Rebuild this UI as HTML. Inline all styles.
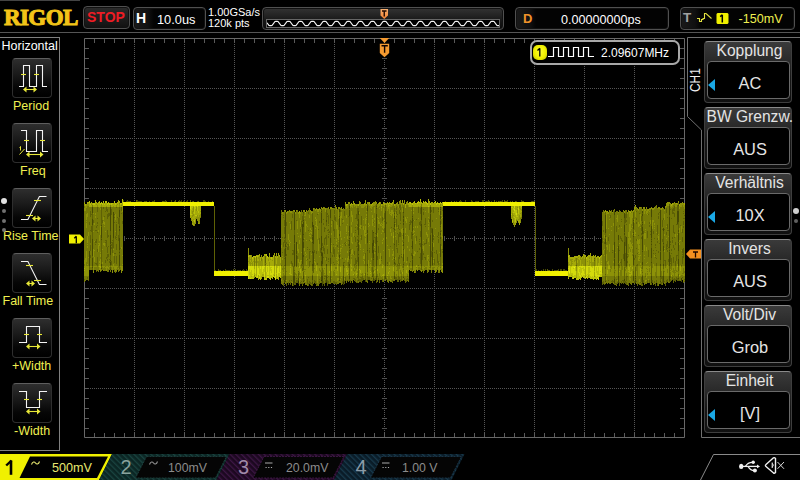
<!DOCTYPE html>
<html><head><meta charset="utf-8">
<style>
*{margin:0;padding:0;box-sizing:border-box}
html,body{width:800px;height:480px;overflow:hidden;background:#000}
body{position:relative;font-family:"Liberation Sans",sans-serif;color:#fff}
.a{position:absolute}
.t{position:absolute;white-space:nowrap;line-height:1}
.box{position:absolute;border:1px solid #505050;border-radius:4px;background:linear-gradient(#1c1c1c,#050505);box-shadow:inset 0 0 0 1px #111}
.btn{position:absolute;left:12px;width:40px;height:40px;border-radius:4px;border:1px solid #2e2e2e;border-top-color:#5e5e5e;background:linear-gradient(#2e2e2e 0%,#1a1a1a 40%,#060606 75%,#000 100%)}
.lbl{position:absolute;color:#f0f050;font-size:12.5px;line-height:1;white-space:nowrap;text-align:center}
.mb{position:absolute;left:704px;width:88px;height:62px;border-radius:4px;border:1px solid #3e3e3e;border-top-color:#8a8a8a;background:linear-gradient(#3a3a3a 0%,#2a2a2a 30%,#161616 60%,#101010 100%)}
.mh{position:absolute;left:1.5px;top:1px;width:86px;text-align:center;font-size:15.6px;line-height:1;color:#e4e4e4;white-space:nowrap}
.mi{position:absolute;left:2px;top:19px;width:83px;height:38px;border-radius:4px;border:1px solid #6a6a6a;background:#000}
.mv{position:absolute;left:1.5px;top:13.3px;width:81px;text-align:center;font-size:16.4px;line-height:1;color:#e4e4e4;white-space:nowrap}
.tri{position:absolute;left:0px;top:16.5px;width:0;height:0;border-top:6px solid transparent;border-bottom:6px solid transparent;border-right:7px solid #1aa8e6}
</style></head><body>

<!-- top bar -->
<div class="a" style="left:0;top:0;width:80px;height:1px;background:#444"></div>
<div class="t" style="left:4px;top:6px;font-family:'Liberation Serif',serif;font-weight:bold;font-size:23px;color:#f2c418;-webkit-text-stroke:1px #f2c418;letter-spacing:-0.6px">RIGOL</div>

<div class="box" style="left:83px;top:6px;width:47px;height:23px;background:linear-gradient(#2c2c2c,#111)"></div>
<div class="t" style="left:87px;top:10px;font-size:14px;font-weight:bold;color:#ee1c24">STOP</div>

<div class="box" style="left:133px;top:7px;width:73px;height:23px;background:linear-gradient(90deg,#1a1a1a 0,#101010 14px,#030303 20px,#030303)"></div>
<div class="t" style="left:136px;top:11px;font-size:14px;font-weight:bold;color:#fff">H</div>
<div class="t" style="left:157px;top:13.5px;font-size:12.8px;color:#fff">10.0us</div>

<div class="t" style="left:208px;top:7px;font-size:11px;color:#fff">1.00GSa/s</div>
<div class="t" style="left:208px;top:18px;font-size:11px;color:#fff">120k pts</div>

<div class="box" style="left:262px;top:7px;width:242px;height:23px;background:linear-gradient(#333,#1a1a1a 55%,#0a0a0a)"></div>
<div class="a" style="left:266px;top:19px;width:234px;height:9px;border:1px solid #666;background:#000"></div>
<svg class="a" style="left:267px;top:20px" width="232" height="7"><polyline points="0,2.77 1,4.23 2,5.50 3,5.60 4,5.60 5,5.50 6,4.23 7,2.77 8,1.50 9,1.40 10,1.40 11,1.50 12,2.77 13,4.23 14,5.50 15,5.60 16,5.60 17,5.50 18,4.23 19,2.77 20,1.50 21,1.40 22,1.40 23,1.50 24,2.77 25,4.23 26,5.50 27,5.60 28,5.60 29,5.50 30,4.23 31,2.77 32,1.50 33,1.40 34,1.40 35,1.50 36,2.77 37,4.23 38,5.50 39,5.60 40,5.60 41,5.50 42,4.23 43,2.77 44,1.50 45,1.40 46,1.40 47,1.50 48,2.77 49,4.23 50,5.50 51,5.60 52,5.60 53,5.50 54,4.23 55,2.77 56,1.50 57,1.40 58,1.40 59,1.50 60,2.77 61,4.23 62,5.50 63,5.60 64,5.60 65,5.50 66,4.23 67,2.77 68,1.50 69,1.40 70,1.40 71,1.50 72,2.77 73,4.23 74,5.50 75,5.60 76,5.60 77,5.50 78,4.23 79,2.77 80,1.50 81,1.40 82,1.40 83,1.50 84,2.77 85,4.23 86,5.50 87,5.60 88,5.60 89,5.50 90,4.23 91,2.77 92,1.50 93,1.40 94,1.40 95,1.50 96,2.77 97,4.23 98,5.50 99,5.60 100,5.60 101,5.50 102,4.23 103,2.77 104,1.50 105,1.40 106,1.40 107,1.50 108,2.77 109,4.23 110,5.50 111,5.60 112,5.60 113,5.50 114,4.23 115,2.77 116,1.50 117,1.40 118,1.40 119,1.50 120,2.77 121,4.23 122,5.50 123,5.60 124,5.60 125,5.50 126,4.23 127,2.77 128,1.50 129,1.40 130,1.40 131,1.50 132,2.77 133,4.23 134,5.50 135,5.60 136,5.60 137,5.50 138,4.23 139,2.77 140,1.50 141,1.40 142,1.40 143,1.50 144,2.77 145,4.23 146,5.50 147,5.60 148,5.60 149,5.50 150,4.23 151,2.77 152,1.50 153,1.40 154,1.40 155,1.50 156,2.77 157,4.23 158,5.50 159,5.60 160,5.60 161,5.50 162,4.23 163,2.77 164,1.50 165,1.40 166,1.40 167,1.50 168,2.77 169,4.23 170,5.50 171,5.60 172,5.60 173,5.50 174,4.23 175,2.77 176,1.50 177,1.40 178,1.40 179,1.50 180,2.77 181,4.23 182,5.50 183,5.60 184,5.60 185,5.50 186,4.23 187,2.77 188,1.50 189,1.40 190,1.40 191,1.50 192,2.77 193,4.23 194,5.50 195,5.60 196,5.60 197,5.50 198,4.23 199,2.77 200,1.50 201,1.40 202,1.40 203,1.50 204,2.77 205,4.23 206,5.50 207,5.60 208,5.60 209,5.50 210,4.23 211,2.77 212,1.50 213,1.40 214,1.40 215,1.50 216,2.77 217,4.23 218,5.50 219,5.60 220,5.60 221,5.50 222,4.23 223,2.77 224,1.50 225,1.40 226,1.40 227,1.50 228,2.77 229,4.23 230,5.50 231,5.60 232,5.60" fill="none" stroke="#f4f4f4" stroke-width="1.2"/></svg>
<svg class="a" style="left:380px;top:8px" width="9" height="12"><defs><linearGradient id="tg" x1="0" y1="0" x2="0" y2="1"><stop offset="0" stop-color="#f8b070"/><stop offset="1" stop-color="#f08030"/></linearGradient></defs><path d="M0.5,1 H8 V7.5 L4.25,11 L0.5,7.5 Z" fill="url(#tg)"/><path d="M2,3 H6.5 M4.25,3 V8.5" stroke="#200800" stroke-width="1.4"/></svg>

<div class="box" style="left:515px;top:7px;width:154px;height:23px;background:linear-gradient(90deg,#1a1a1a 0,#101010 14px,#030303 20px,#030303)"></div>
<div class="t" style="left:523px;top:11.5px;font-size:13px;font-weight:bold;color:#f0922a">D</div>
<div class="t" style="left:561px;top:13.5px;font-size:12.6px;color:#fff">0.00000000ps</div>

<div class="box" style="left:680px;top:7px;width:115px;height:23px;background:linear-gradient(90deg,#1a1a1a 0,#101010 14px,#030303 20px,#030303)"></div>
<div class="t" style="left:683px;top:11px;font-size:13.5px;font-weight:bold;color:#a0a0a0">T</div>
<svg class="a" style="left:690px;top:8px" width="40" height="20"><path d="M7,10.5 H9.5 V13.5 H11.5 V11.5 H13 V10.5 H14.5 V5.5 H16 L21.5,10.5" fill="none" stroke="#e0e040" stroke-width="1.1"/><path d="M27.5,5 H37.5 L38.5,6 V15 L37.5,16 H27.5 L26.5,15 V6 Z" fill="#f0f000"/><path d="M32.3,6.8 V14.5 M30.2,8.6 L32.3,6.8" stroke="#000" stroke-width="1.5" fill="none"/></svg>
<div class="t" style="left:738.5px;top:13px;font-size:12.6px;color:#f0f050">-150mV</div>

<div class="a" style="left:0;top:32px;width:800px;height:1px;background:#555"></div>

<!-- left panel -->
<div class="a" style="left:0;top:37px;width:60px;height:414px;border:1px solid #808080;border-left:none"></div>
<div class="t" style="left:1.5px;top:40px;font-size:12.5px;color:#fff">Horizontal</div>

<div class="btn" style="top:58px"></div>
<svg class="a" style="left:0;top:58px" width="60" height="40"><path d="M19,28.5 H23.5 V7.5 H29.5 V28.5 H36.5 V7.5 H42.5 V28.5 H47" stroke="#f4f4f4" stroke-width="1.1" fill="none"/><path d="M21,16.5 H26" stroke="#e8e838" stroke-width="1.1" fill="none"/><path d="M34,16.5 H39" stroke="#e8e838" stroke-width="1.1" fill="none"/><path d="M25.5,31.5 H34.5" stroke="#e8e838" stroke-width="1.1" fill="none"/><path d="M23.0,31.5 L26.5,28.5 V34.5 Z M37.0,31.5 L33.5,28.5 V34.5 Z" fill="#e8e838"/></svg>
<div class="lbl" style="left:13px;top:99.7px">Period</div>
<div class="btn" style="top:123px"></div>
<svg class="a" style="left:0;top:123px" width="60" height="40"><path d="M21,7.5 H26.5 V28.5 H36.5 V7.5 H42.5 V28.5 H48" stroke="#f4f4f4" stroke-width="1.1" fill="none"/><path d="M24,17.5 H29" stroke="#e8e838" stroke-width="1.1" fill="none"/><path d="M40,17.5 H45" stroke="#e8e838" stroke-width="1.1" fill="none"/><path d="M28.5,31.5 H41" stroke="#e8e838" stroke-width="1.1" fill="none"/><path d="M26.0,31.5 L29.5,28.5 V34.5 Z M43.5,31.5 L40,28.5 V34.5 Z" fill="#e8e838"/><path d="M19.5,31.5 L24.5,26" stroke="#e8e838" stroke-width="1"/><path d="M19.5,24.5 L20.5,23.5 V27.5" stroke="#e8e838" stroke-width="1" fill="none"/></svg>
<div class="lbl" style="left:20px;top:164.7px">Freq</div>
<div class="btn" style="top:188px"></div>
<svg class="a" style="left:0;top:188px" width="60" height="40"><path d="M21,31.5 H27.9 L39.4,8.5 H46.5" stroke="#f4f4f4" stroke-width="1.1" fill="none"/><path d="M34,12.5 H41" stroke="#e8e838" stroke-width="1.1" fill="none"/><path d="M26,27.5 H33" stroke="#e8e838" stroke-width="1.1" fill="none"/><path d="M34.5,30.5 H38.5" stroke="#e8e838" stroke-width="1.1" fill="none"/><path d="M32.0,30.5 L35.5,27.5 V33.5 Z M41.0,30.5 L37.5,27.5 V33.5 Z" fill="#e8e838"/></svg>
<div class="lbl" style="left:3px;top:229.7px">Rise Time</div>
<div class="btn" style="top:253px"></div>
<svg class="a" style="left:0;top:253px" width="60" height="40"><path d="M21,8.5 H27.9 L39.4,31.5 H46.5" stroke="#f4f4f4" stroke-width="1.1" fill="none"/><path d="M26,12.5 H33" stroke="#e8e838" stroke-width="1.1" fill="none"/><path d="M34,27.5 H41" stroke="#e8e838" stroke-width="1.1" fill="none"/><path d="M28.5,30.5 H32.5" stroke="#e8e838" stroke-width="1.1" fill="none"/><path d="M26.0,30.5 L29.5,27.5 V33.5 Z M35.0,30.5 L31.5,27.5 V33.5 Z" fill="#e8e838"/></svg>
<div class="lbl" style="left:2.5px;top:294.7px">Fall Time</div>
<div class="btn" style="top:318px"></div>
<svg class="a" style="left:0;top:318px" width="60" height="40"><path d="M19,24.5 H26.5 V8.5 H39.5 V24.5 H47" stroke="#f4f4f4" stroke-width="1.1" fill="none"/><path d="M24,16.5 H29" stroke="#e8e838" stroke-width="1.1" fill="none"/><path d="M37,16.5 H42" stroke="#e8e838" stroke-width="1.1" fill="none"/><path d="M28.5,28.5 H38" stroke="#e8e838" stroke-width="1.1" fill="none"/><path d="M26.0,28.5 L29.5,25.5 V31.5 Z M40.5,28.5 L37,25.5 V31.5 Z" fill="#e8e838"/></svg>
<div class="lbl" style="left:12px;top:359.7px">+Width</div>
<div class="btn" style="top:383px"></div>
<svg class="a" style="left:0;top:383px" width="60" height="40"><path d="M19,8.5 H26.5 V24.5 H39.5 V8.5 H47" stroke="#f4f4f4" stroke-width="1.1" fill="none"/><path d="M24,16.5 H29" stroke="#e8e838" stroke-width="1.1" fill="none"/><path d="M37,16.5 H42" stroke="#e8e838" stroke-width="1.1" fill="none"/><path d="M28.5,28.5 H38" stroke="#e8e838" stroke-width="1.1" fill="none"/><path d="M26.0,28.5 L29.5,25.5 V31.5 Z M40.5,28.5 L37,25.5 V31.5 Z" fill="#e8e838"/></svg>
<div class="lbl" style="left:14px;top:424.7px">-Width</div>
<div class="a" style="left:1px;top:198px;width:6px;height:6px;border-radius:3px;background:#e0e0e0"></div>
<div class="a" style="left:2px;top:209px;width:4px;height:4px;border-radius:2px;background:#707070"></div>
<div class="a" style="left:2px;top:219px;width:4px;height:4px;border-radius:2px;background:#707070"></div>
<div class="a" style="left:2px;top:228px;width:4px;height:4px;border-radius:2px;background:#707070"></div>


<!-- grid -->
<svg class="a" style="left:0;top:0" width="800" height="480">
<path d="M134,40h1v1h-1zM134,42h1v1h-1zM134,44h1v1h-1zM134,46h1v1h-1zM134,48h1v1h-1zM134,50h1v1h-1zM134,52h1v1h-1zM134,54h1v1h-1zM134,56h1v1h-1zM134,58h1v1h-1zM134,60h1v1h-1zM134,62h1v1h-1zM134,64h1v1h-1zM134,66h1v1h-1zM134,68h1v1h-1zM134,70h1v1h-1zM134,72h1v1h-1zM134,74h1v1h-1zM134,76h1v1h-1zM134,78h1v1h-1zM134,80h1v1h-1zM134,82h1v1h-1zM134,84h1v1h-1zM134,86h1v1h-1zM134,88h1v1h-1zM134,90h1v1h-1zM134,92h1v1h-1zM134,94h1v1h-1zM134,96h1v1h-1zM134,98h1v1h-1zM134,100h1v1h-1zM134,102h1v1h-1zM134,104h1v1h-1zM134,106h1v1h-1zM134,108h1v1h-1zM134,110h1v1h-1zM134,112h1v1h-1zM134,114h1v1h-1zM134,116h1v1h-1zM134,118h1v1h-1zM134,120h1v1h-1zM134,122h1v1h-1zM134,124h1v1h-1zM134,126h1v1h-1zM134,128h1v1h-1zM134,130h1v1h-1zM134,132h1v1h-1zM134,134h1v1h-1zM134,136h1v1h-1zM134,138h1v1h-1zM134,140h1v1h-1zM134,142h1v1h-1zM134,144h1v1h-1zM134,146h1v1h-1zM134,148h1v1h-1zM134,150h1v1h-1zM134,152h1v1h-1zM134,154h1v1h-1zM134,156h1v1h-1zM134,158h1v1h-1zM134,160h1v1h-1zM134,162h1v1h-1zM134,164h1v1h-1zM134,166h1v1h-1zM134,168h1v1h-1zM134,170h1v1h-1zM134,172h1v1h-1zM134,174h1v1h-1zM134,176h1v1h-1zM134,178h1v1h-1zM134,180h1v1h-1zM134,182h1v1h-1zM134,184h1v1h-1zM134,186h1v1h-1zM134,188h1v1h-1zM134,190h1v1h-1zM134,192h1v1h-1zM134,194h1v1h-1zM134,196h1v1h-1zM134,198h1v1h-1zM134,200h1v1h-1zM134,202h1v1h-1zM134,204h1v1h-1zM134,206h1v1h-1zM134,208h1v1h-1zM134,210h1v1h-1zM134,212h1v1h-1zM134,214h1v1h-1zM134,216h1v1h-1zM134,218h1v1h-1zM134,220h1v1h-1zM134,222h1v1h-1zM134,224h1v1h-1zM134,226h1v1h-1zM134,228h1v1h-1zM134,230h1v1h-1zM134,232h1v1h-1zM134,234h1v1h-1zM134,236h1v1h-1zM134,238h1v1h-1zM134,240h1v1h-1zM134,242h1v1h-1zM134,244h1v1h-1zM134,246h1v1h-1zM134,248h1v1h-1zM134,250h1v1h-1zM134,252h1v1h-1zM134,254h1v1h-1zM134,256h1v1h-1zM134,258h1v1h-1zM134,260h1v1h-1zM134,262h1v1h-1zM134,264h1v1h-1zM134,266h1v1h-1zM134,268h1v1h-1zM134,270h1v1h-1zM134,272h1v1h-1zM134,274h1v1h-1zM134,276h1v1h-1zM134,278h1v1h-1zM134,280h1v1h-1zM134,282h1v1h-1zM134,284h1v1h-1zM134,286h1v1h-1zM134,288h1v1h-1zM134,290h1v1h-1zM134,292h1v1h-1zM134,294h1v1h-1zM134,296h1v1h-1zM134,298h1v1h-1zM134,300h1v1h-1zM134,302h1v1h-1zM134,304h1v1h-1zM134,306h1v1h-1zM134,308h1v1h-1zM134,310h1v1h-1zM134,312h1v1h-1zM134,314h1v1h-1zM134,316h1v1h-1zM134,318h1v1h-1zM134,320h1v1h-1zM134,322h1v1h-1zM134,324h1v1h-1zM134,326h1v1h-1zM134,328h1v1h-1zM134,330h1v1h-1zM134,332h1v1h-1zM134,334h1v1h-1zM134,336h1v1h-1zM134,338h1v1h-1zM134,340h1v1h-1zM134,342h1v1h-1zM134,344h1v1h-1zM134,346h1v1h-1zM134,348h1v1h-1zM134,350h1v1h-1zM134,352h1v1h-1zM134,354h1v1h-1zM134,356h1v1h-1zM134,358h1v1h-1zM134,360h1v1h-1zM134,362h1v1h-1zM134,364h1v1h-1zM134,366h1v1h-1zM134,368h1v1h-1zM134,370h1v1h-1zM134,372h1v1h-1zM134,374h1v1h-1zM134,376h1v1h-1zM134,378h1v1h-1zM134,380h1v1h-1zM134,382h1v1h-1zM134,384h1v1h-1zM134,386h1v1h-1zM134,388h1v1h-1zM134,390h1v1h-1zM134,392h1v1h-1zM134,394h1v1h-1zM134,396h1v1h-1zM134,398h1v1h-1zM134,400h1v1h-1zM134,402h1v1h-1zM134,404h1v1h-1zM134,406h1v1h-1zM134,408h1v1h-1zM134,410h1v1h-1zM134,412h1v1h-1zM134,414h1v1h-1zM134,416h1v1h-1zM134,418h1v1h-1zM134,420h1v1h-1zM134,422h1v1h-1zM134,424h1v1h-1zM134,426h1v1h-1zM134,428h1v1h-1zM134,430h1v1h-1zM134,432h1v1h-1zM134,434h1v1h-1zM134,436h1v1h-1zM184,40h1v1h-1zM184,42h1v1h-1zM184,44h1v1h-1zM184,46h1v1h-1zM184,48h1v1h-1zM184,50h1v1h-1zM184,52h1v1h-1zM184,54h1v1h-1zM184,56h1v1h-1zM184,58h1v1h-1zM184,60h1v1h-1zM184,62h1v1h-1zM184,64h1v1h-1zM184,66h1v1h-1zM184,68h1v1h-1zM184,70h1v1h-1zM184,72h1v1h-1zM184,74h1v1h-1zM184,76h1v1h-1zM184,78h1v1h-1zM184,80h1v1h-1zM184,82h1v1h-1zM184,84h1v1h-1zM184,86h1v1h-1zM184,88h1v1h-1zM184,90h1v1h-1zM184,92h1v1h-1zM184,94h1v1h-1zM184,96h1v1h-1zM184,98h1v1h-1zM184,100h1v1h-1zM184,102h1v1h-1zM184,104h1v1h-1zM184,106h1v1h-1zM184,108h1v1h-1zM184,110h1v1h-1zM184,112h1v1h-1zM184,114h1v1h-1zM184,116h1v1h-1zM184,118h1v1h-1zM184,120h1v1h-1zM184,122h1v1h-1zM184,124h1v1h-1zM184,126h1v1h-1zM184,128h1v1h-1zM184,130h1v1h-1zM184,132h1v1h-1zM184,134h1v1h-1zM184,136h1v1h-1zM184,138h1v1h-1zM184,140h1v1h-1zM184,142h1v1h-1zM184,144h1v1h-1zM184,146h1v1h-1zM184,148h1v1h-1zM184,150h1v1h-1zM184,152h1v1h-1zM184,154h1v1h-1zM184,156h1v1h-1zM184,158h1v1h-1zM184,160h1v1h-1zM184,162h1v1h-1zM184,164h1v1h-1zM184,166h1v1h-1zM184,168h1v1h-1zM184,170h1v1h-1zM184,172h1v1h-1zM184,174h1v1h-1zM184,176h1v1h-1zM184,178h1v1h-1zM184,180h1v1h-1zM184,182h1v1h-1zM184,184h1v1h-1zM184,186h1v1h-1zM184,188h1v1h-1zM184,190h1v1h-1zM184,192h1v1h-1zM184,194h1v1h-1zM184,196h1v1h-1zM184,198h1v1h-1zM184,200h1v1h-1zM184,202h1v1h-1zM184,204h1v1h-1zM184,206h1v1h-1zM184,208h1v1h-1zM184,210h1v1h-1zM184,212h1v1h-1zM184,214h1v1h-1zM184,216h1v1h-1zM184,218h1v1h-1zM184,220h1v1h-1zM184,222h1v1h-1zM184,224h1v1h-1zM184,226h1v1h-1zM184,228h1v1h-1zM184,230h1v1h-1zM184,232h1v1h-1zM184,234h1v1h-1zM184,236h1v1h-1zM184,238h1v1h-1zM184,240h1v1h-1zM184,242h1v1h-1zM184,244h1v1h-1zM184,246h1v1h-1zM184,248h1v1h-1zM184,250h1v1h-1zM184,252h1v1h-1zM184,254h1v1h-1zM184,256h1v1h-1zM184,258h1v1h-1zM184,260h1v1h-1zM184,262h1v1h-1zM184,264h1v1h-1zM184,266h1v1h-1zM184,268h1v1h-1zM184,270h1v1h-1zM184,272h1v1h-1zM184,274h1v1h-1zM184,276h1v1h-1zM184,278h1v1h-1zM184,280h1v1h-1zM184,282h1v1h-1zM184,284h1v1h-1zM184,286h1v1h-1zM184,288h1v1h-1zM184,290h1v1h-1zM184,292h1v1h-1zM184,294h1v1h-1zM184,296h1v1h-1zM184,298h1v1h-1zM184,300h1v1h-1zM184,302h1v1h-1zM184,304h1v1h-1zM184,306h1v1h-1zM184,308h1v1h-1zM184,310h1v1h-1zM184,312h1v1h-1zM184,314h1v1h-1zM184,316h1v1h-1zM184,318h1v1h-1zM184,320h1v1h-1zM184,322h1v1h-1zM184,324h1v1h-1zM184,326h1v1h-1zM184,328h1v1h-1zM184,330h1v1h-1zM184,332h1v1h-1zM184,334h1v1h-1zM184,336h1v1h-1zM184,338h1v1h-1zM184,340h1v1h-1zM184,342h1v1h-1zM184,344h1v1h-1zM184,346h1v1h-1zM184,348h1v1h-1zM184,350h1v1h-1zM184,352h1v1h-1zM184,354h1v1h-1zM184,356h1v1h-1zM184,358h1v1h-1zM184,360h1v1h-1zM184,362h1v1h-1zM184,364h1v1h-1zM184,366h1v1h-1zM184,368h1v1h-1zM184,370h1v1h-1zM184,372h1v1h-1zM184,374h1v1h-1zM184,376h1v1h-1zM184,378h1v1h-1zM184,380h1v1h-1zM184,382h1v1h-1zM184,384h1v1h-1zM184,386h1v1h-1zM184,388h1v1h-1zM184,390h1v1h-1zM184,392h1v1h-1zM184,394h1v1h-1zM184,396h1v1h-1zM184,398h1v1h-1zM184,400h1v1h-1zM184,402h1v1h-1zM184,404h1v1h-1zM184,406h1v1h-1zM184,408h1v1h-1zM184,410h1v1h-1zM184,412h1v1h-1zM184,414h1v1h-1zM184,416h1v1h-1zM184,418h1v1h-1zM184,420h1v1h-1zM184,422h1v1h-1zM184,424h1v1h-1zM184,426h1v1h-1zM184,428h1v1h-1zM184,430h1v1h-1zM184,432h1v1h-1zM184,434h1v1h-1zM184,436h1v1h-1zM234,40h1v1h-1zM234,42h1v1h-1zM234,44h1v1h-1zM234,46h1v1h-1zM234,48h1v1h-1zM234,50h1v1h-1zM234,52h1v1h-1zM234,54h1v1h-1zM234,56h1v1h-1zM234,58h1v1h-1zM234,60h1v1h-1zM234,62h1v1h-1zM234,64h1v1h-1zM234,66h1v1h-1zM234,68h1v1h-1zM234,70h1v1h-1zM234,72h1v1h-1zM234,74h1v1h-1zM234,76h1v1h-1zM234,78h1v1h-1zM234,80h1v1h-1zM234,82h1v1h-1zM234,84h1v1h-1zM234,86h1v1h-1zM234,88h1v1h-1zM234,90h1v1h-1zM234,92h1v1h-1zM234,94h1v1h-1zM234,96h1v1h-1zM234,98h1v1h-1zM234,100h1v1h-1zM234,102h1v1h-1zM234,104h1v1h-1zM234,106h1v1h-1zM234,108h1v1h-1zM234,110h1v1h-1zM234,112h1v1h-1zM234,114h1v1h-1zM234,116h1v1h-1zM234,118h1v1h-1zM234,120h1v1h-1zM234,122h1v1h-1zM234,124h1v1h-1zM234,126h1v1h-1zM234,128h1v1h-1zM234,130h1v1h-1zM234,132h1v1h-1zM234,134h1v1h-1zM234,136h1v1h-1zM234,138h1v1h-1zM234,140h1v1h-1zM234,142h1v1h-1zM234,144h1v1h-1zM234,146h1v1h-1zM234,148h1v1h-1zM234,150h1v1h-1zM234,152h1v1h-1zM234,154h1v1h-1zM234,156h1v1h-1zM234,158h1v1h-1zM234,160h1v1h-1zM234,162h1v1h-1zM234,164h1v1h-1zM234,166h1v1h-1zM234,168h1v1h-1zM234,170h1v1h-1zM234,172h1v1h-1zM234,174h1v1h-1zM234,176h1v1h-1zM234,178h1v1h-1zM234,180h1v1h-1zM234,182h1v1h-1zM234,184h1v1h-1zM234,186h1v1h-1zM234,188h1v1h-1zM234,190h1v1h-1zM234,192h1v1h-1zM234,194h1v1h-1zM234,196h1v1h-1zM234,198h1v1h-1zM234,200h1v1h-1zM234,202h1v1h-1zM234,204h1v1h-1zM234,206h1v1h-1zM234,208h1v1h-1zM234,210h1v1h-1zM234,212h1v1h-1zM234,214h1v1h-1zM234,216h1v1h-1zM234,218h1v1h-1zM234,220h1v1h-1zM234,222h1v1h-1zM234,224h1v1h-1zM234,226h1v1h-1zM234,228h1v1h-1zM234,230h1v1h-1zM234,232h1v1h-1zM234,234h1v1h-1zM234,236h1v1h-1zM234,238h1v1h-1zM234,240h1v1h-1zM234,242h1v1h-1zM234,244h1v1h-1zM234,246h1v1h-1zM234,248h1v1h-1zM234,250h1v1h-1zM234,252h1v1h-1zM234,254h1v1h-1zM234,256h1v1h-1zM234,258h1v1h-1zM234,260h1v1h-1zM234,262h1v1h-1zM234,264h1v1h-1zM234,266h1v1h-1zM234,268h1v1h-1zM234,270h1v1h-1zM234,272h1v1h-1zM234,274h1v1h-1zM234,276h1v1h-1zM234,278h1v1h-1zM234,280h1v1h-1zM234,282h1v1h-1zM234,284h1v1h-1zM234,286h1v1h-1zM234,288h1v1h-1zM234,290h1v1h-1zM234,292h1v1h-1zM234,294h1v1h-1zM234,296h1v1h-1zM234,298h1v1h-1zM234,300h1v1h-1zM234,302h1v1h-1zM234,304h1v1h-1zM234,306h1v1h-1zM234,308h1v1h-1zM234,310h1v1h-1zM234,312h1v1h-1zM234,314h1v1h-1zM234,316h1v1h-1zM234,318h1v1h-1zM234,320h1v1h-1zM234,322h1v1h-1zM234,324h1v1h-1zM234,326h1v1h-1zM234,328h1v1h-1zM234,330h1v1h-1zM234,332h1v1h-1zM234,334h1v1h-1zM234,336h1v1h-1zM234,338h1v1h-1zM234,340h1v1h-1zM234,342h1v1h-1zM234,344h1v1h-1zM234,346h1v1h-1zM234,348h1v1h-1zM234,350h1v1h-1zM234,352h1v1h-1zM234,354h1v1h-1zM234,356h1v1h-1zM234,358h1v1h-1zM234,360h1v1h-1zM234,362h1v1h-1zM234,364h1v1h-1zM234,366h1v1h-1zM234,368h1v1h-1zM234,370h1v1h-1zM234,372h1v1h-1zM234,374h1v1h-1zM234,376h1v1h-1zM234,378h1v1h-1zM234,380h1v1h-1zM234,382h1v1h-1zM234,384h1v1h-1zM234,386h1v1h-1zM234,388h1v1h-1zM234,390h1v1h-1zM234,392h1v1h-1zM234,394h1v1h-1zM234,396h1v1h-1zM234,398h1v1h-1zM234,400h1v1h-1zM234,402h1v1h-1zM234,404h1v1h-1zM234,406h1v1h-1zM234,408h1v1h-1zM234,410h1v1h-1zM234,412h1v1h-1zM234,414h1v1h-1zM234,416h1v1h-1zM234,418h1v1h-1zM234,420h1v1h-1zM234,422h1v1h-1zM234,424h1v1h-1zM234,426h1v1h-1zM234,428h1v1h-1zM234,430h1v1h-1zM234,432h1v1h-1zM234,434h1v1h-1zM234,436h1v1h-1zM284,40h1v1h-1zM284,42h1v1h-1zM284,44h1v1h-1zM284,46h1v1h-1zM284,48h1v1h-1zM284,50h1v1h-1zM284,52h1v1h-1zM284,54h1v1h-1zM284,56h1v1h-1zM284,58h1v1h-1zM284,60h1v1h-1zM284,62h1v1h-1zM284,64h1v1h-1zM284,66h1v1h-1zM284,68h1v1h-1zM284,70h1v1h-1zM284,72h1v1h-1zM284,74h1v1h-1zM284,76h1v1h-1zM284,78h1v1h-1zM284,80h1v1h-1zM284,82h1v1h-1zM284,84h1v1h-1zM284,86h1v1h-1zM284,88h1v1h-1zM284,90h1v1h-1zM284,92h1v1h-1zM284,94h1v1h-1zM284,96h1v1h-1zM284,98h1v1h-1zM284,100h1v1h-1zM284,102h1v1h-1zM284,104h1v1h-1zM284,106h1v1h-1zM284,108h1v1h-1zM284,110h1v1h-1zM284,112h1v1h-1zM284,114h1v1h-1zM284,116h1v1h-1zM284,118h1v1h-1zM284,120h1v1h-1zM284,122h1v1h-1zM284,124h1v1h-1zM284,126h1v1h-1zM284,128h1v1h-1zM284,130h1v1h-1zM284,132h1v1h-1zM284,134h1v1h-1zM284,136h1v1h-1zM284,138h1v1h-1zM284,140h1v1h-1zM284,142h1v1h-1zM284,144h1v1h-1zM284,146h1v1h-1zM284,148h1v1h-1zM284,150h1v1h-1zM284,152h1v1h-1zM284,154h1v1h-1zM284,156h1v1h-1zM284,158h1v1h-1zM284,160h1v1h-1zM284,162h1v1h-1zM284,164h1v1h-1zM284,166h1v1h-1zM284,168h1v1h-1zM284,170h1v1h-1zM284,172h1v1h-1zM284,174h1v1h-1zM284,176h1v1h-1zM284,178h1v1h-1zM284,180h1v1h-1zM284,182h1v1h-1zM284,184h1v1h-1zM284,186h1v1h-1zM284,188h1v1h-1zM284,190h1v1h-1zM284,192h1v1h-1zM284,194h1v1h-1zM284,196h1v1h-1zM284,198h1v1h-1zM284,200h1v1h-1zM284,202h1v1h-1zM284,204h1v1h-1zM284,206h1v1h-1zM284,208h1v1h-1zM284,210h1v1h-1zM284,212h1v1h-1zM284,214h1v1h-1zM284,216h1v1h-1zM284,218h1v1h-1zM284,220h1v1h-1zM284,222h1v1h-1zM284,224h1v1h-1zM284,226h1v1h-1zM284,228h1v1h-1zM284,230h1v1h-1zM284,232h1v1h-1zM284,234h1v1h-1zM284,236h1v1h-1zM284,238h1v1h-1zM284,240h1v1h-1zM284,242h1v1h-1zM284,244h1v1h-1zM284,246h1v1h-1zM284,248h1v1h-1zM284,250h1v1h-1zM284,252h1v1h-1zM284,254h1v1h-1zM284,256h1v1h-1zM284,258h1v1h-1zM284,260h1v1h-1zM284,262h1v1h-1zM284,264h1v1h-1zM284,266h1v1h-1zM284,268h1v1h-1zM284,270h1v1h-1zM284,272h1v1h-1zM284,274h1v1h-1zM284,276h1v1h-1zM284,278h1v1h-1zM284,280h1v1h-1zM284,282h1v1h-1zM284,284h1v1h-1zM284,286h1v1h-1zM284,288h1v1h-1zM284,290h1v1h-1zM284,292h1v1h-1zM284,294h1v1h-1zM284,296h1v1h-1zM284,298h1v1h-1zM284,300h1v1h-1zM284,302h1v1h-1zM284,304h1v1h-1zM284,306h1v1h-1zM284,308h1v1h-1zM284,310h1v1h-1zM284,312h1v1h-1zM284,314h1v1h-1zM284,316h1v1h-1zM284,318h1v1h-1zM284,320h1v1h-1zM284,322h1v1h-1zM284,324h1v1h-1zM284,326h1v1h-1zM284,328h1v1h-1zM284,330h1v1h-1zM284,332h1v1h-1zM284,334h1v1h-1zM284,336h1v1h-1zM284,338h1v1h-1zM284,340h1v1h-1zM284,342h1v1h-1zM284,344h1v1h-1zM284,346h1v1h-1zM284,348h1v1h-1zM284,350h1v1h-1zM284,352h1v1h-1zM284,354h1v1h-1zM284,356h1v1h-1zM284,358h1v1h-1zM284,360h1v1h-1zM284,362h1v1h-1zM284,364h1v1h-1zM284,366h1v1h-1zM284,368h1v1h-1zM284,370h1v1h-1zM284,372h1v1h-1zM284,374h1v1h-1zM284,376h1v1h-1zM284,378h1v1h-1zM284,380h1v1h-1zM284,382h1v1h-1zM284,384h1v1h-1zM284,386h1v1h-1zM284,388h1v1h-1zM284,390h1v1h-1zM284,392h1v1h-1zM284,394h1v1h-1zM284,396h1v1h-1zM284,398h1v1h-1zM284,400h1v1h-1zM284,402h1v1h-1zM284,404h1v1h-1zM284,406h1v1h-1zM284,408h1v1h-1zM284,410h1v1h-1zM284,412h1v1h-1zM284,414h1v1h-1zM284,416h1v1h-1zM284,418h1v1h-1zM284,420h1v1h-1zM284,422h1v1h-1zM284,424h1v1h-1zM284,426h1v1h-1zM284,428h1v1h-1zM284,430h1v1h-1zM284,432h1v1h-1zM284,434h1v1h-1zM284,436h1v1h-1zM334,40h1v1h-1zM334,42h1v1h-1zM334,44h1v1h-1zM334,46h1v1h-1zM334,48h1v1h-1zM334,50h1v1h-1zM334,52h1v1h-1zM334,54h1v1h-1zM334,56h1v1h-1zM334,58h1v1h-1zM334,60h1v1h-1zM334,62h1v1h-1zM334,64h1v1h-1zM334,66h1v1h-1zM334,68h1v1h-1zM334,70h1v1h-1zM334,72h1v1h-1zM334,74h1v1h-1zM334,76h1v1h-1zM334,78h1v1h-1zM334,80h1v1h-1zM334,82h1v1h-1zM334,84h1v1h-1zM334,86h1v1h-1zM334,88h1v1h-1zM334,90h1v1h-1zM334,92h1v1h-1zM334,94h1v1h-1zM334,96h1v1h-1zM334,98h1v1h-1zM334,100h1v1h-1zM334,102h1v1h-1zM334,104h1v1h-1zM334,106h1v1h-1zM334,108h1v1h-1zM334,110h1v1h-1zM334,112h1v1h-1zM334,114h1v1h-1zM334,116h1v1h-1zM334,118h1v1h-1zM334,120h1v1h-1zM334,122h1v1h-1zM334,124h1v1h-1zM334,126h1v1h-1zM334,128h1v1h-1zM334,130h1v1h-1zM334,132h1v1h-1zM334,134h1v1h-1zM334,136h1v1h-1zM334,138h1v1h-1zM334,140h1v1h-1zM334,142h1v1h-1zM334,144h1v1h-1zM334,146h1v1h-1zM334,148h1v1h-1zM334,150h1v1h-1zM334,152h1v1h-1zM334,154h1v1h-1zM334,156h1v1h-1zM334,158h1v1h-1zM334,160h1v1h-1zM334,162h1v1h-1zM334,164h1v1h-1zM334,166h1v1h-1zM334,168h1v1h-1zM334,170h1v1h-1zM334,172h1v1h-1zM334,174h1v1h-1zM334,176h1v1h-1zM334,178h1v1h-1zM334,180h1v1h-1zM334,182h1v1h-1zM334,184h1v1h-1zM334,186h1v1h-1zM334,188h1v1h-1zM334,190h1v1h-1zM334,192h1v1h-1zM334,194h1v1h-1zM334,196h1v1h-1zM334,198h1v1h-1zM334,200h1v1h-1zM334,202h1v1h-1zM334,204h1v1h-1zM334,206h1v1h-1zM334,208h1v1h-1zM334,210h1v1h-1zM334,212h1v1h-1zM334,214h1v1h-1zM334,216h1v1h-1zM334,218h1v1h-1zM334,220h1v1h-1zM334,222h1v1h-1zM334,224h1v1h-1zM334,226h1v1h-1zM334,228h1v1h-1zM334,230h1v1h-1zM334,232h1v1h-1zM334,234h1v1h-1zM334,236h1v1h-1zM334,238h1v1h-1zM334,240h1v1h-1zM334,242h1v1h-1zM334,244h1v1h-1zM334,246h1v1h-1zM334,248h1v1h-1zM334,250h1v1h-1zM334,252h1v1h-1zM334,254h1v1h-1zM334,256h1v1h-1zM334,258h1v1h-1zM334,260h1v1h-1zM334,262h1v1h-1zM334,264h1v1h-1zM334,266h1v1h-1zM334,268h1v1h-1zM334,270h1v1h-1zM334,272h1v1h-1zM334,274h1v1h-1zM334,276h1v1h-1zM334,278h1v1h-1zM334,280h1v1h-1zM334,282h1v1h-1zM334,284h1v1h-1zM334,286h1v1h-1zM334,288h1v1h-1zM334,290h1v1h-1zM334,292h1v1h-1zM334,294h1v1h-1zM334,296h1v1h-1zM334,298h1v1h-1zM334,300h1v1h-1zM334,302h1v1h-1zM334,304h1v1h-1zM334,306h1v1h-1zM334,308h1v1h-1zM334,310h1v1h-1zM334,312h1v1h-1zM334,314h1v1h-1zM334,316h1v1h-1zM334,318h1v1h-1zM334,320h1v1h-1zM334,322h1v1h-1zM334,324h1v1h-1zM334,326h1v1h-1zM334,328h1v1h-1zM334,330h1v1h-1zM334,332h1v1h-1zM334,334h1v1h-1zM334,336h1v1h-1zM334,338h1v1h-1zM334,340h1v1h-1zM334,342h1v1h-1zM334,344h1v1h-1zM334,346h1v1h-1zM334,348h1v1h-1zM334,350h1v1h-1zM334,352h1v1h-1zM334,354h1v1h-1zM334,356h1v1h-1zM334,358h1v1h-1zM334,360h1v1h-1zM334,362h1v1h-1zM334,364h1v1h-1zM334,366h1v1h-1zM334,368h1v1h-1zM334,370h1v1h-1zM334,372h1v1h-1zM334,374h1v1h-1zM334,376h1v1h-1zM334,378h1v1h-1zM334,380h1v1h-1zM334,382h1v1h-1zM334,384h1v1h-1zM334,386h1v1h-1zM334,388h1v1h-1zM334,390h1v1h-1zM334,392h1v1h-1zM334,394h1v1h-1zM334,396h1v1h-1zM334,398h1v1h-1zM334,400h1v1h-1zM334,402h1v1h-1zM334,404h1v1h-1zM334,406h1v1h-1zM334,408h1v1h-1zM334,410h1v1h-1zM334,412h1v1h-1zM334,414h1v1h-1zM334,416h1v1h-1zM334,418h1v1h-1zM334,420h1v1h-1zM334,422h1v1h-1zM334,424h1v1h-1zM334,426h1v1h-1zM334,428h1v1h-1zM334,430h1v1h-1zM334,432h1v1h-1zM334,434h1v1h-1zM334,436h1v1h-1zM384,40h1v1h-1zM384,42h1v1h-1zM384,44h1v1h-1zM384,46h1v1h-1zM384,48h1v1h-1zM384,50h1v1h-1zM384,52h1v1h-1zM384,54h1v1h-1zM384,56h1v1h-1zM384,58h1v1h-1zM384,60h1v1h-1zM384,62h1v1h-1zM384,64h1v1h-1zM384,66h1v1h-1zM384,68h1v1h-1zM384,70h1v1h-1zM384,72h1v1h-1zM384,74h1v1h-1zM384,76h1v1h-1zM384,78h1v1h-1zM384,80h1v1h-1zM384,82h1v1h-1zM384,84h1v1h-1zM384,86h1v1h-1zM384,88h1v1h-1zM384,90h1v1h-1zM384,92h1v1h-1zM384,94h1v1h-1zM384,96h1v1h-1zM384,98h1v1h-1zM384,100h1v1h-1zM384,102h1v1h-1zM384,104h1v1h-1zM384,106h1v1h-1zM384,108h1v1h-1zM384,110h1v1h-1zM384,112h1v1h-1zM384,114h1v1h-1zM384,116h1v1h-1zM384,118h1v1h-1zM384,120h1v1h-1zM384,122h1v1h-1zM384,124h1v1h-1zM384,126h1v1h-1zM384,128h1v1h-1zM384,130h1v1h-1zM384,132h1v1h-1zM384,134h1v1h-1zM384,136h1v1h-1zM384,138h1v1h-1zM384,140h1v1h-1zM384,142h1v1h-1zM384,144h1v1h-1zM384,146h1v1h-1zM384,148h1v1h-1zM384,150h1v1h-1zM384,152h1v1h-1zM384,154h1v1h-1zM384,156h1v1h-1zM384,158h1v1h-1zM384,160h1v1h-1zM384,162h1v1h-1zM384,164h1v1h-1zM384,166h1v1h-1zM384,168h1v1h-1zM384,170h1v1h-1zM384,172h1v1h-1zM384,174h1v1h-1zM384,176h1v1h-1zM384,178h1v1h-1zM384,180h1v1h-1zM384,182h1v1h-1zM384,184h1v1h-1zM384,186h1v1h-1zM384,188h1v1h-1zM384,190h1v1h-1zM384,192h1v1h-1zM384,194h1v1h-1zM384,196h1v1h-1zM384,198h1v1h-1zM384,200h1v1h-1zM384,202h1v1h-1zM384,204h1v1h-1zM384,206h1v1h-1zM384,208h1v1h-1zM384,210h1v1h-1zM384,212h1v1h-1zM384,214h1v1h-1zM384,216h1v1h-1zM384,218h1v1h-1zM384,220h1v1h-1zM384,222h1v1h-1zM384,224h1v1h-1zM384,226h1v1h-1zM384,228h1v1h-1zM384,230h1v1h-1zM384,232h1v1h-1zM384,234h1v1h-1zM384,236h1v1h-1zM384,238h1v1h-1zM384,240h1v1h-1zM384,242h1v1h-1zM384,244h1v1h-1zM384,246h1v1h-1zM384,248h1v1h-1zM384,250h1v1h-1zM384,252h1v1h-1zM384,254h1v1h-1zM384,256h1v1h-1zM384,258h1v1h-1zM384,260h1v1h-1zM384,262h1v1h-1zM384,264h1v1h-1zM384,266h1v1h-1zM384,268h1v1h-1zM384,270h1v1h-1zM384,272h1v1h-1zM384,274h1v1h-1zM384,276h1v1h-1zM384,278h1v1h-1zM384,280h1v1h-1zM384,282h1v1h-1zM384,284h1v1h-1zM384,286h1v1h-1zM384,288h1v1h-1zM384,290h1v1h-1zM384,292h1v1h-1zM384,294h1v1h-1zM384,296h1v1h-1zM384,298h1v1h-1zM384,300h1v1h-1zM384,302h1v1h-1zM384,304h1v1h-1zM384,306h1v1h-1zM384,308h1v1h-1zM384,310h1v1h-1zM384,312h1v1h-1zM384,314h1v1h-1zM384,316h1v1h-1zM384,318h1v1h-1zM384,320h1v1h-1zM384,322h1v1h-1zM384,324h1v1h-1zM384,326h1v1h-1zM384,328h1v1h-1zM384,330h1v1h-1zM384,332h1v1h-1zM384,334h1v1h-1zM384,336h1v1h-1zM384,338h1v1h-1zM384,340h1v1h-1zM384,342h1v1h-1zM384,344h1v1h-1zM384,346h1v1h-1zM384,348h1v1h-1zM384,350h1v1h-1zM384,352h1v1h-1zM384,354h1v1h-1zM384,356h1v1h-1zM384,358h1v1h-1zM384,360h1v1h-1zM384,362h1v1h-1zM384,364h1v1h-1zM384,366h1v1h-1zM384,368h1v1h-1zM384,370h1v1h-1zM384,372h1v1h-1zM384,374h1v1h-1zM384,376h1v1h-1zM384,378h1v1h-1zM384,380h1v1h-1zM384,382h1v1h-1zM384,384h1v1h-1zM384,386h1v1h-1zM384,388h1v1h-1zM384,390h1v1h-1zM384,392h1v1h-1zM384,394h1v1h-1zM384,396h1v1h-1zM384,398h1v1h-1zM384,400h1v1h-1zM384,402h1v1h-1zM384,404h1v1h-1zM384,406h1v1h-1zM384,408h1v1h-1zM384,410h1v1h-1zM384,412h1v1h-1zM384,414h1v1h-1zM384,416h1v1h-1zM384,418h1v1h-1zM384,420h1v1h-1zM384,422h1v1h-1zM384,424h1v1h-1zM384,426h1v1h-1zM384,428h1v1h-1zM384,430h1v1h-1zM384,432h1v1h-1zM384,434h1v1h-1zM384,436h1v1h-1zM434,40h1v1h-1zM434,42h1v1h-1zM434,44h1v1h-1zM434,46h1v1h-1zM434,48h1v1h-1zM434,50h1v1h-1zM434,52h1v1h-1zM434,54h1v1h-1zM434,56h1v1h-1zM434,58h1v1h-1zM434,60h1v1h-1zM434,62h1v1h-1zM434,64h1v1h-1zM434,66h1v1h-1zM434,68h1v1h-1zM434,70h1v1h-1zM434,72h1v1h-1zM434,74h1v1h-1zM434,76h1v1h-1zM434,78h1v1h-1zM434,80h1v1h-1zM434,82h1v1h-1zM434,84h1v1h-1zM434,86h1v1h-1zM434,88h1v1h-1zM434,90h1v1h-1zM434,92h1v1h-1zM434,94h1v1h-1zM434,96h1v1h-1zM434,98h1v1h-1zM434,100h1v1h-1zM434,102h1v1h-1zM434,104h1v1h-1zM434,106h1v1h-1zM434,108h1v1h-1zM434,110h1v1h-1zM434,112h1v1h-1zM434,114h1v1h-1zM434,116h1v1h-1zM434,118h1v1h-1zM434,120h1v1h-1zM434,122h1v1h-1zM434,124h1v1h-1zM434,126h1v1h-1zM434,128h1v1h-1zM434,130h1v1h-1zM434,132h1v1h-1zM434,134h1v1h-1zM434,136h1v1h-1zM434,138h1v1h-1zM434,140h1v1h-1zM434,142h1v1h-1zM434,144h1v1h-1zM434,146h1v1h-1zM434,148h1v1h-1zM434,150h1v1h-1zM434,152h1v1h-1zM434,154h1v1h-1zM434,156h1v1h-1zM434,158h1v1h-1zM434,160h1v1h-1zM434,162h1v1h-1zM434,164h1v1h-1zM434,166h1v1h-1zM434,168h1v1h-1zM434,170h1v1h-1zM434,172h1v1h-1zM434,174h1v1h-1zM434,176h1v1h-1zM434,178h1v1h-1zM434,180h1v1h-1zM434,182h1v1h-1zM434,184h1v1h-1zM434,186h1v1h-1zM434,188h1v1h-1zM434,190h1v1h-1zM434,192h1v1h-1zM434,194h1v1h-1zM434,196h1v1h-1zM434,198h1v1h-1zM434,200h1v1h-1zM434,202h1v1h-1zM434,204h1v1h-1zM434,206h1v1h-1zM434,208h1v1h-1zM434,210h1v1h-1zM434,212h1v1h-1zM434,214h1v1h-1zM434,216h1v1h-1zM434,218h1v1h-1zM434,220h1v1h-1zM434,222h1v1h-1zM434,224h1v1h-1zM434,226h1v1h-1zM434,228h1v1h-1zM434,230h1v1h-1zM434,232h1v1h-1zM434,234h1v1h-1zM434,236h1v1h-1zM434,238h1v1h-1zM434,240h1v1h-1zM434,242h1v1h-1zM434,244h1v1h-1zM434,246h1v1h-1zM434,248h1v1h-1zM434,250h1v1h-1zM434,252h1v1h-1zM434,254h1v1h-1zM434,256h1v1h-1zM434,258h1v1h-1zM434,260h1v1h-1zM434,262h1v1h-1zM434,264h1v1h-1zM434,266h1v1h-1zM434,268h1v1h-1zM434,270h1v1h-1zM434,272h1v1h-1zM434,274h1v1h-1zM434,276h1v1h-1zM434,278h1v1h-1zM434,280h1v1h-1zM434,282h1v1h-1zM434,284h1v1h-1zM434,286h1v1h-1zM434,288h1v1h-1zM434,290h1v1h-1zM434,292h1v1h-1zM434,294h1v1h-1zM434,296h1v1h-1zM434,298h1v1h-1zM434,300h1v1h-1zM434,302h1v1h-1zM434,304h1v1h-1zM434,306h1v1h-1zM434,308h1v1h-1zM434,310h1v1h-1zM434,312h1v1h-1zM434,314h1v1h-1zM434,316h1v1h-1zM434,318h1v1h-1zM434,320h1v1h-1zM434,322h1v1h-1zM434,324h1v1h-1zM434,326h1v1h-1zM434,328h1v1h-1zM434,330h1v1h-1zM434,332h1v1h-1zM434,334h1v1h-1zM434,336h1v1h-1zM434,338h1v1h-1zM434,340h1v1h-1zM434,342h1v1h-1zM434,344h1v1h-1zM434,346h1v1h-1zM434,348h1v1h-1zM434,350h1v1h-1zM434,352h1v1h-1zM434,354h1v1h-1zM434,356h1v1h-1zM434,358h1v1h-1zM434,360h1v1h-1zM434,362h1v1h-1zM434,364h1v1h-1zM434,366h1v1h-1zM434,368h1v1h-1zM434,370h1v1h-1zM434,372h1v1h-1zM434,374h1v1h-1zM434,376h1v1h-1zM434,378h1v1h-1zM434,380h1v1h-1zM434,382h1v1h-1zM434,384h1v1h-1zM434,386h1v1h-1zM434,388h1v1h-1zM434,390h1v1h-1zM434,392h1v1h-1zM434,394h1v1h-1zM434,396h1v1h-1zM434,398h1v1h-1zM434,400h1v1h-1zM434,402h1v1h-1zM434,404h1v1h-1zM434,406h1v1h-1zM434,408h1v1h-1zM434,410h1v1h-1zM434,412h1v1h-1zM434,414h1v1h-1zM434,416h1v1h-1zM434,418h1v1h-1zM434,420h1v1h-1zM434,422h1v1h-1zM434,424h1v1h-1zM434,426h1v1h-1zM434,428h1v1h-1zM434,430h1v1h-1zM434,432h1v1h-1zM434,434h1v1h-1zM434,436h1v1h-1zM484,40h1v1h-1zM484,42h1v1h-1zM484,44h1v1h-1zM484,46h1v1h-1zM484,48h1v1h-1zM484,50h1v1h-1zM484,52h1v1h-1zM484,54h1v1h-1zM484,56h1v1h-1zM484,58h1v1h-1zM484,60h1v1h-1zM484,62h1v1h-1zM484,64h1v1h-1zM484,66h1v1h-1zM484,68h1v1h-1zM484,70h1v1h-1zM484,72h1v1h-1zM484,74h1v1h-1zM484,76h1v1h-1zM484,78h1v1h-1zM484,80h1v1h-1zM484,82h1v1h-1zM484,84h1v1h-1zM484,86h1v1h-1zM484,88h1v1h-1zM484,90h1v1h-1zM484,92h1v1h-1zM484,94h1v1h-1zM484,96h1v1h-1zM484,98h1v1h-1zM484,100h1v1h-1zM484,102h1v1h-1zM484,104h1v1h-1zM484,106h1v1h-1zM484,108h1v1h-1zM484,110h1v1h-1zM484,112h1v1h-1zM484,114h1v1h-1zM484,116h1v1h-1zM484,118h1v1h-1zM484,120h1v1h-1zM484,122h1v1h-1zM484,124h1v1h-1zM484,126h1v1h-1zM484,128h1v1h-1zM484,130h1v1h-1zM484,132h1v1h-1zM484,134h1v1h-1zM484,136h1v1h-1zM484,138h1v1h-1zM484,140h1v1h-1zM484,142h1v1h-1zM484,144h1v1h-1zM484,146h1v1h-1zM484,148h1v1h-1zM484,150h1v1h-1zM484,152h1v1h-1zM484,154h1v1h-1zM484,156h1v1h-1zM484,158h1v1h-1zM484,160h1v1h-1zM484,162h1v1h-1zM484,164h1v1h-1zM484,166h1v1h-1zM484,168h1v1h-1zM484,170h1v1h-1zM484,172h1v1h-1zM484,174h1v1h-1zM484,176h1v1h-1zM484,178h1v1h-1zM484,180h1v1h-1zM484,182h1v1h-1zM484,184h1v1h-1zM484,186h1v1h-1zM484,188h1v1h-1zM484,190h1v1h-1zM484,192h1v1h-1zM484,194h1v1h-1zM484,196h1v1h-1zM484,198h1v1h-1zM484,200h1v1h-1zM484,202h1v1h-1zM484,204h1v1h-1zM484,206h1v1h-1zM484,208h1v1h-1zM484,210h1v1h-1zM484,212h1v1h-1zM484,214h1v1h-1zM484,216h1v1h-1zM484,218h1v1h-1zM484,220h1v1h-1zM484,222h1v1h-1zM484,224h1v1h-1zM484,226h1v1h-1zM484,228h1v1h-1zM484,230h1v1h-1zM484,232h1v1h-1zM484,234h1v1h-1zM484,236h1v1h-1zM484,238h1v1h-1zM484,240h1v1h-1zM484,242h1v1h-1zM484,244h1v1h-1zM484,246h1v1h-1zM484,248h1v1h-1zM484,250h1v1h-1zM484,252h1v1h-1zM484,254h1v1h-1zM484,256h1v1h-1zM484,258h1v1h-1zM484,260h1v1h-1zM484,262h1v1h-1zM484,264h1v1h-1zM484,266h1v1h-1zM484,268h1v1h-1zM484,270h1v1h-1zM484,272h1v1h-1zM484,274h1v1h-1zM484,276h1v1h-1zM484,278h1v1h-1zM484,280h1v1h-1zM484,282h1v1h-1zM484,284h1v1h-1zM484,286h1v1h-1zM484,288h1v1h-1zM484,290h1v1h-1zM484,292h1v1h-1zM484,294h1v1h-1zM484,296h1v1h-1zM484,298h1v1h-1zM484,300h1v1h-1zM484,302h1v1h-1zM484,304h1v1h-1zM484,306h1v1h-1zM484,308h1v1h-1zM484,310h1v1h-1zM484,312h1v1h-1zM484,314h1v1h-1zM484,316h1v1h-1zM484,318h1v1h-1zM484,320h1v1h-1zM484,322h1v1h-1zM484,324h1v1h-1zM484,326h1v1h-1zM484,328h1v1h-1zM484,330h1v1h-1zM484,332h1v1h-1zM484,334h1v1h-1zM484,336h1v1h-1zM484,338h1v1h-1zM484,340h1v1h-1zM484,342h1v1h-1zM484,344h1v1h-1zM484,346h1v1h-1zM484,348h1v1h-1zM484,350h1v1h-1zM484,352h1v1h-1zM484,354h1v1h-1zM484,356h1v1h-1zM484,358h1v1h-1zM484,360h1v1h-1zM484,362h1v1h-1zM484,364h1v1h-1zM484,366h1v1h-1zM484,368h1v1h-1zM484,370h1v1h-1zM484,372h1v1h-1zM484,374h1v1h-1zM484,376h1v1h-1zM484,378h1v1h-1zM484,380h1v1h-1zM484,382h1v1h-1zM484,384h1v1h-1zM484,386h1v1h-1zM484,388h1v1h-1zM484,390h1v1h-1zM484,392h1v1h-1zM484,394h1v1h-1zM484,396h1v1h-1zM484,398h1v1h-1zM484,400h1v1h-1zM484,402h1v1h-1zM484,404h1v1h-1zM484,406h1v1h-1zM484,408h1v1h-1zM484,410h1v1h-1zM484,412h1v1h-1zM484,414h1v1h-1zM484,416h1v1h-1zM484,418h1v1h-1zM484,420h1v1h-1zM484,422h1v1h-1zM484,424h1v1h-1zM484,426h1v1h-1zM484,428h1v1h-1zM484,430h1v1h-1zM484,432h1v1h-1zM484,434h1v1h-1zM484,436h1v1h-1zM534,40h1v1h-1zM534,42h1v1h-1zM534,44h1v1h-1zM534,46h1v1h-1zM534,48h1v1h-1zM534,50h1v1h-1zM534,52h1v1h-1zM534,54h1v1h-1zM534,56h1v1h-1zM534,58h1v1h-1zM534,60h1v1h-1zM534,62h1v1h-1zM534,64h1v1h-1zM534,66h1v1h-1zM534,68h1v1h-1zM534,70h1v1h-1zM534,72h1v1h-1zM534,74h1v1h-1zM534,76h1v1h-1zM534,78h1v1h-1zM534,80h1v1h-1zM534,82h1v1h-1zM534,84h1v1h-1zM534,86h1v1h-1zM534,88h1v1h-1zM534,90h1v1h-1zM534,92h1v1h-1zM534,94h1v1h-1zM534,96h1v1h-1zM534,98h1v1h-1zM534,100h1v1h-1zM534,102h1v1h-1zM534,104h1v1h-1zM534,106h1v1h-1zM534,108h1v1h-1zM534,110h1v1h-1zM534,112h1v1h-1zM534,114h1v1h-1zM534,116h1v1h-1zM534,118h1v1h-1zM534,120h1v1h-1zM534,122h1v1h-1zM534,124h1v1h-1zM534,126h1v1h-1zM534,128h1v1h-1zM534,130h1v1h-1zM534,132h1v1h-1zM534,134h1v1h-1zM534,136h1v1h-1zM534,138h1v1h-1zM534,140h1v1h-1zM534,142h1v1h-1zM534,144h1v1h-1zM534,146h1v1h-1zM534,148h1v1h-1zM534,150h1v1h-1zM534,152h1v1h-1zM534,154h1v1h-1zM534,156h1v1h-1zM534,158h1v1h-1zM534,160h1v1h-1zM534,162h1v1h-1zM534,164h1v1h-1zM534,166h1v1h-1zM534,168h1v1h-1zM534,170h1v1h-1zM534,172h1v1h-1zM534,174h1v1h-1zM534,176h1v1h-1zM534,178h1v1h-1zM534,180h1v1h-1zM534,182h1v1h-1zM534,184h1v1h-1zM534,186h1v1h-1zM534,188h1v1h-1zM534,190h1v1h-1zM534,192h1v1h-1zM534,194h1v1h-1zM534,196h1v1h-1zM534,198h1v1h-1zM534,200h1v1h-1zM534,202h1v1h-1zM534,204h1v1h-1zM534,206h1v1h-1zM534,208h1v1h-1zM534,210h1v1h-1zM534,212h1v1h-1zM534,214h1v1h-1zM534,216h1v1h-1zM534,218h1v1h-1zM534,220h1v1h-1zM534,222h1v1h-1zM534,224h1v1h-1zM534,226h1v1h-1zM534,228h1v1h-1zM534,230h1v1h-1zM534,232h1v1h-1zM534,234h1v1h-1zM534,236h1v1h-1zM534,238h1v1h-1zM534,240h1v1h-1zM534,242h1v1h-1zM534,244h1v1h-1zM534,246h1v1h-1zM534,248h1v1h-1zM534,250h1v1h-1zM534,252h1v1h-1zM534,254h1v1h-1zM534,256h1v1h-1zM534,258h1v1h-1zM534,260h1v1h-1zM534,262h1v1h-1zM534,264h1v1h-1zM534,266h1v1h-1zM534,268h1v1h-1zM534,270h1v1h-1zM534,272h1v1h-1zM534,274h1v1h-1zM534,276h1v1h-1zM534,278h1v1h-1zM534,280h1v1h-1zM534,282h1v1h-1zM534,284h1v1h-1zM534,286h1v1h-1zM534,288h1v1h-1zM534,290h1v1h-1zM534,292h1v1h-1zM534,294h1v1h-1zM534,296h1v1h-1zM534,298h1v1h-1zM534,300h1v1h-1zM534,302h1v1h-1zM534,304h1v1h-1zM534,306h1v1h-1zM534,308h1v1h-1zM534,310h1v1h-1zM534,312h1v1h-1zM534,314h1v1h-1zM534,316h1v1h-1zM534,318h1v1h-1zM534,320h1v1h-1zM534,322h1v1h-1zM534,324h1v1h-1zM534,326h1v1h-1zM534,328h1v1h-1zM534,330h1v1h-1zM534,332h1v1h-1zM534,334h1v1h-1zM534,336h1v1h-1zM534,338h1v1h-1zM534,340h1v1h-1zM534,342h1v1h-1zM534,344h1v1h-1zM534,346h1v1h-1zM534,348h1v1h-1zM534,350h1v1h-1zM534,352h1v1h-1zM534,354h1v1h-1zM534,356h1v1h-1zM534,358h1v1h-1zM534,360h1v1h-1zM534,362h1v1h-1zM534,364h1v1h-1zM534,366h1v1h-1zM534,368h1v1h-1zM534,370h1v1h-1zM534,372h1v1h-1zM534,374h1v1h-1zM534,376h1v1h-1zM534,378h1v1h-1zM534,380h1v1h-1zM534,382h1v1h-1zM534,384h1v1h-1zM534,386h1v1h-1zM534,388h1v1h-1zM534,390h1v1h-1zM534,392h1v1h-1zM534,394h1v1h-1zM534,396h1v1h-1zM534,398h1v1h-1zM534,400h1v1h-1zM534,402h1v1h-1zM534,404h1v1h-1zM534,406h1v1h-1zM534,408h1v1h-1zM534,410h1v1h-1zM534,412h1v1h-1zM534,414h1v1h-1zM534,416h1v1h-1zM534,418h1v1h-1zM534,420h1v1h-1zM534,422h1v1h-1zM534,424h1v1h-1zM534,426h1v1h-1zM534,428h1v1h-1zM534,430h1v1h-1zM534,432h1v1h-1zM534,434h1v1h-1zM534,436h1v1h-1zM584,40h1v1h-1zM584,42h1v1h-1zM584,44h1v1h-1zM584,46h1v1h-1zM584,48h1v1h-1zM584,50h1v1h-1zM584,52h1v1h-1zM584,54h1v1h-1zM584,56h1v1h-1zM584,58h1v1h-1zM584,60h1v1h-1zM584,62h1v1h-1zM584,64h1v1h-1zM584,66h1v1h-1zM584,68h1v1h-1zM584,70h1v1h-1zM584,72h1v1h-1zM584,74h1v1h-1zM584,76h1v1h-1zM584,78h1v1h-1zM584,80h1v1h-1zM584,82h1v1h-1zM584,84h1v1h-1zM584,86h1v1h-1zM584,88h1v1h-1zM584,90h1v1h-1zM584,92h1v1h-1zM584,94h1v1h-1zM584,96h1v1h-1zM584,98h1v1h-1zM584,100h1v1h-1zM584,102h1v1h-1zM584,104h1v1h-1zM584,106h1v1h-1zM584,108h1v1h-1zM584,110h1v1h-1zM584,112h1v1h-1zM584,114h1v1h-1zM584,116h1v1h-1zM584,118h1v1h-1zM584,120h1v1h-1zM584,122h1v1h-1zM584,124h1v1h-1zM584,126h1v1h-1zM584,128h1v1h-1zM584,130h1v1h-1zM584,132h1v1h-1zM584,134h1v1h-1zM584,136h1v1h-1zM584,138h1v1h-1zM584,140h1v1h-1zM584,142h1v1h-1zM584,144h1v1h-1zM584,146h1v1h-1zM584,148h1v1h-1zM584,150h1v1h-1zM584,152h1v1h-1zM584,154h1v1h-1zM584,156h1v1h-1zM584,158h1v1h-1zM584,160h1v1h-1zM584,162h1v1h-1zM584,164h1v1h-1zM584,166h1v1h-1zM584,168h1v1h-1zM584,170h1v1h-1zM584,172h1v1h-1zM584,174h1v1h-1zM584,176h1v1h-1zM584,178h1v1h-1zM584,180h1v1h-1zM584,182h1v1h-1zM584,184h1v1h-1zM584,186h1v1h-1zM584,188h1v1h-1zM584,190h1v1h-1zM584,192h1v1h-1zM584,194h1v1h-1zM584,196h1v1h-1zM584,198h1v1h-1zM584,200h1v1h-1zM584,202h1v1h-1zM584,204h1v1h-1zM584,206h1v1h-1zM584,208h1v1h-1zM584,210h1v1h-1zM584,212h1v1h-1zM584,214h1v1h-1zM584,216h1v1h-1zM584,218h1v1h-1zM584,220h1v1h-1zM584,222h1v1h-1zM584,224h1v1h-1zM584,226h1v1h-1zM584,228h1v1h-1zM584,230h1v1h-1zM584,232h1v1h-1zM584,234h1v1h-1zM584,236h1v1h-1zM584,238h1v1h-1zM584,240h1v1h-1zM584,242h1v1h-1zM584,244h1v1h-1zM584,246h1v1h-1zM584,248h1v1h-1zM584,250h1v1h-1zM584,252h1v1h-1zM584,254h1v1h-1zM584,256h1v1h-1zM584,258h1v1h-1zM584,260h1v1h-1zM584,262h1v1h-1zM584,264h1v1h-1zM584,266h1v1h-1zM584,268h1v1h-1zM584,270h1v1h-1zM584,272h1v1h-1zM584,274h1v1h-1zM584,276h1v1h-1zM584,278h1v1h-1zM584,280h1v1h-1zM584,282h1v1h-1zM584,284h1v1h-1zM584,286h1v1h-1zM584,288h1v1h-1zM584,290h1v1h-1zM584,292h1v1h-1zM584,294h1v1h-1zM584,296h1v1h-1zM584,298h1v1h-1zM584,300h1v1h-1zM584,302h1v1h-1zM584,304h1v1h-1zM584,306h1v1h-1zM584,308h1v1h-1zM584,310h1v1h-1zM584,312h1v1h-1zM584,314h1v1h-1zM584,316h1v1h-1zM584,318h1v1h-1zM584,320h1v1h-1zM584,322h1v1h-1zM584,324h1v1h-1zM584,326h1v1h-1zM584,328h1v1h-1zM584,330h1v1h-1zM584,332h1v1h-1zM584,334h1v1h-1zM584,336h1v1h-1zM584,338h1v1h-1zM584,340h1v1h-1zM584,342h1v1h-1zM584,344h1v1h-1zM584,346h1v1h-1zM584,348h1v1h-1zM584,350h1v1h-1zM584,352h1v1h-1zM584,354h1v1h-1zM584,356h1v1h-1zM584,358h1v1h-1zM584,360h1v1h-1zM584,362h1v1h-1zM584,364h1v1h-1zM584,366h1v1h-1zM584,368h1v1h-1zM584,370h1v1h-1zM584,372h1v1h-1zM584,374h1v1h-1zM584,376h1v1h-1zM584,378h1v1h-1zM584,380h1v1h-1zM584,382h1v1h-1zM584,384h1v1h-1zM584,386h1v1h-1zM584,388h1v1h-1zM584,390h1v1h-1zM584,392h1v1h-1zM584,394h1v1h-1zM584,396h1v1h-1zM584,398h1v1h-1zM584,400h1v1h-1zM584,402h1v1h-1zM584,404h1v1h-1zM584,406h1v1h-1zM584,408h1v1h-1zM584,410h1v1h-1zM584,412h1v1h-1zM584,414h1v1h-1zM584,416h1v1h-1zM584,418h1v1h-1zM584,420h1v1h-1zM584,422h1v1h-1zM584,424h1v1h-1zM584,426h1v1h-1zM584,428h1v1h-1zM584,430h1v1h-1zM584,432h1v1h-1zM584,434h1v1h-1zM584,436h1v1h-1zM634,40h1v1h-1zM634,42h1v1h-1zM634,44h1v1h-1zM634,46h1v1h-1zM634,48h1v1h-1zM634,50h1v1h-1zM634,52h1v1h-1zM634,54h1v1h-1zM634,56h1v1h-1zM634,58h1v1h-1zM634,60h1v1h-1zM634,62h1v1h-1zM634,64h1v1h-1zM634,66h1v1h-1zM634,68h1v1h-1zM634,70h1v1h-1zM634,72h1v1h-1zM634,74h1v1h-1zM634,76h1v1h-1zM634,78h1v1h-1zM634,80h1v1h-1zM634,82h1v1h-1zM634,84h1v1h-1zM634,86h1v1h-1zM634,88h1v1h-1zM634,90h1v1h-1zM634,92h1v1h-1zM634,94h1v1h-1zM634,96h1v1h-1zM634,98h1v1h-1zM634,100h1v1h-1zM634,102h1v1h-1zM634,104h1v1h-1zM634,106h1v1h-1zM634,108h1v1h-1zM634,110h1v1h-1zM634,112h1v1h-1zM634,114h1v1h-1zM634,116h1v1h-1zM634,118h1v1h-1zM634,120h1v1h-1zM634,122h1v1h-1zM634,124h1v1h-1zM634,126h1v1h-1zM634,128h1v1h-1zM634,130h1v1h-1zM634,132h1v1h-1zM634,134h1v1h-1zM634,136h1v1h-1zM634,138h1v1h-1zM634,140h1v1h-1zM634,142h1v1h-1zM634,144h1v1h-1zM634,146h1v1h-1zM634,148h1v1h-1zM634,150h1v1h-1zM634,152h1v1h-1zM634,154h1v1h-1zM634,156h1v1h-1zM634,158h1v1h-1zM634,160h1v1h-1zM634,162h1v1h-1zM634,164h1v1h-1zM634,166h1v1h-1zM634,168h1v1h-1zM634,170h1v1h-1zM634,172h1v1h-1zM634,174h1v1h-1zM634,176h1v1h-1zM634,178h1v1h-1zM634,180h1v1h-1zM634,182h1v1h-1zM634,184h1v1h-1zM634,186h1v1h-1zM634,188h1v1h-1zM634,190h1v1h-1zM634,192h1v1h-1zM634,194h1v1h-1zM634,196h1v1h-1zM634,198h1v1h-1zM634,200h1v1h-1zM634,202h1v1h-1zM634,204h1v1h-1zM634,206h1v1h-1zM634,208h1v1h-1zM634,210h1v1h-1zM634,212h1v1h-1zM634,214h1v1h-1zM634,216h1v1h-1zM634,218h1v1h-1zM634,220h1v1h-1zM634,222h1v1h-1zM634,224h1v1h-1zM634,226h1v1h-1zM634,228h1v1h-1zM634,230h1v1h-1zM634,232h1v1h-1zM634,234h1v1h-1zM634,236h1v1h-1zM634,238h1v1h-1zM634,240h1v1h-1zM634,242h1v1h-1zM634,244h1v1h-1zM634,246h1v1h-1zM634,248h1v1h-1zM634,250h1v1h-1zM634,252h1v1h-1zM634,254h1v1h-1zM634,256h1v1h-1zM634,258h1v1h-1zM634,260h1v1h-1zM634,262h1v1h-1zM634,264h1v1h-1zM634,266h1v1h-1zM634,268h1v1h-1zM634,270h1v1h-1zM634,272h1v1h-1zM634,274h1v1h-1zM634,276h1v1h-1zM634,278h1v1h-1zM634,280h1v1h-1zM634,282h1v1h-1zM634,284h1v1h-1zM634,286h1v1h-1zM634,288h1v1h-1zM634,290h1v1h-1zM634,292h1v1h-1zM634,294h1v1h-1zM634,296h1v1h-1zM634,298h1v1h-1zM634,300h1v1h-1zM634,302h1v1h-1zM634,304h1v1h-1zM634,306h1v1h-1zM634,308h1v1h-1zM634,310h1v1h-1zM634,312h1v1h-1zM634,314h1v1h-1zM634,316h1v1h-1zM634,318h1v1h-1zM634,320h1v1h-1zM634,322h1v1h-1zM634,324h1v1h-1zM634,326h1v1h-1zM634,328h1v1h-1zM634,330h1v1h-1zM634,332h1v1h-1zM634,334h1v1h-1zM634,336h1v1h-1zM634,338h1v1h-1zM634,340h1v1h-1zM634,342h1v1h-1zM634,344h1v1h-1zM634,346h1v1h-1zM634,348h1v1h-1zM634,350h1v1h-1zM634,352h1v1h-1zM634,354h1v1h-1zM634,356h1v1h-1zM634,358h1v1h-1zM634,360h1v1h-1zM634,362h1v1h-1zM634,364h1v1h-1zM634,366h1v1h-1zM634,368h1v1h-1zM634,370h1v1h-1zM634,372h1v1h-1zM634,374h1v1h-1zM634,376h1v1h-1zM634,378h1v1h-1zM634,380h1v1h-1zM634,382h1v1h-1zM634,384h1v1h-1zM634,386h1v1h-1zM634,388h1v1h-1zM634,390h1v1h-1zM634,392h1v1h-1zM634,394h1v1h-1zM634,396h1v1h-1zM634,398h1v1h-1zM634,400h1v1h-1zM634,402h1v1h-1zM634,404h1v1h-1zM634,406h1v1h-1zM634,408h1v1h-1zM634,410h1v1h-1zM634,412h1v1h-1zM634,414h1v1h-1zM634,416h1v1h-1zM634,418h1v1h-1zM634,420h1v1h-1zM634,422h1v1h-1zM634,424h1v1h-1zM634,426h1v1h-1zM634,428h1v1h-1zM634,430h1v1h-1zM634,432h1v1h-1zM634,434h1v1h-1zM634,436h1v1h-1zM86,88h1v1h-1zM88,88h1v1h-1zM90,88h1v1h-1zM92,88h1v1h-1zM94,88h1v1h-1zM96,88h1v1h-1zM98,88h1v1h-1zM100,88h1v1h-1zM102,88h1v1h-1zM104,88h1v1h-1zM106,88h1v1h-1zM108,88h1v1h-1zM110,88h1v1h-1zM112,88h1v1h-1zM114,88h1v1h-1zM116,88h1v1h-1zM118,88h1v1h-1zM120,88h1v1h-1zM122,88h1v1h-1zM124,88h1v1h-1zM126,88h1v1h-1zM128,88h1v1h-1zM130,88h1v1h-1zM132,88h1v1h-1zM134,88h1v1h-1zM136,88h1v1h-1zM138,88h1v1h-1zM140,88h1v1h-1zM142,88h1v1h-1zM144,88h1v1h-1zM146,88h1v1h-1zM148,88h1v1h-1zM150,88h1v1h-1zM152,88h1v1h-1zM154,88h1v1h-1zM156,88h1v1h-1zM158,88h1v1h-1zM160,88h1v1h-1zM162,88h1v1h-1zM164,88h1v1h-1zM166,88h1v1h-1zM168,88h1v1h-1zM170,88h1v1h-1zM172,88h1v1h-1zM174,88h1v1h-1zM176,88h1v1h-1zM178,88h1v1h-1zM180,88h1v1h-1zM182,88h1v1h-1zM184,88h1v1h-1zM186,88h1v1h-1zM188,88h1v1h-1zM190,88h1v1h-1zM192,88h1v1h-1zM194,88h1v1h-1zM196,88h1v1h-1zM198,88h1v1h-1zM200,88h1v1h-1zM202,88h1v1h-1zM204,88h1v1h-1zM206,88h1v1h-1zM208,88h1v1h-1zM210,88h1v1h-1zM212,88h1v1h-1zM214,88h1v1h-1zM216,88h1v1h-1zM218,88h1v1h-1zM220,88h1v1h-1zM222,88h1v1h-1zM224,88h1v1h-1zM226,88h1v1h-1zM228,88h1v1h-1zM230,88h1v1h-1zM232,88h1v1h-1zM234,88h1v1h-1zM236,88h1v1h-1zM238,88h1v1h-1zM240,88h1v1h-1zM242,88h1v1h-1zM244,88h1v1h-1zM246,88h1v1h-1zM248,88h1v1h-1zM250,88h1v1h-1zM252,88h1v1h-1zM254,88h1v1h-1zM256,88h1v1h-1zM258,88h1v1h-1zM260,88h1v1h-1zM262,88h1v1h-1zM264,88h1v1h-1zM266,88h1v1h-1zM268,88h1v1h-1zM270,88h1v1h-1zM272,88h1v1h-1zM274,88h1v1h-1zM276,88h1v1h-1zM278,88h1v1h-1zM280,88h1v1h-1zM282,88h1v1h-1zM284,88h1v1h-1zM286,88h1v1h-1zM288,88h1v1h-1zM290,88h1v1h-1zM292,88h1v1h-1zM294,88h1v1h-1zM296,88h1v1h-1zM298,88h1v1h-1zM300,88h1v1h-1zM302,88h1v1h-1zM304,88h1v1h-1zM306,88h1v1h-1zM308,88h1v1h-1zM310,88h1v1h-1zM312,88h1v1h-1zM314,88h1v1h-1zM316,88h1v1h-1zM318,88h1v1h-1zM320,88h1v1h-1zM322,88h1v1h-1zM324,88h1v1h-1zM326,88h1v1h-1zM328,88h1v1h-1zM330,88h1v1h-1zM332,88h1v1h-1zM334,88h1v1h-1zM336,88h1v1h-1zM338,88h1v1h-1zM340,88h1v1h-1zM342,88h1v1h-1zM344,88h1v1h-1zM346,88h1v1h-1zM348,88h1v1h-1zM350,88h1v1h-1zM352,88h1v1h-1zM354,88h1v1h-1zM356,88h1v1h-1zM358,88h1v1h-1zM360,88h1v1h-1zM362,88h1v1h-1zM364,88h1v1h-1zM366,88h1v1h-1zM368,88h1v1h-1zM370,88h1v1h-1zM372,88h1v1h-1zM374,88h1v1h-1zM376,88h1v1h-1zM378,88h1v1h-1zM380,88h1v1h-1zM382,88h1v1h-1zM384,88h1v1h-1zM386,88h1v1h-1zM388,88h1v1h-1zM390,88h1v1h-1zM392,88h1v1h-1zM394,88h1v1h-1zM396,88h1v1h-1zM398,88h1v1h-1zM400,88h1v1h-1zM402,88h1v1h-1zM404,88h1v1h-1zM406,88h1v1h-1zM408,88h1v1h-1zM410,88h1v1h-1zM412,88h1v1h-1zM414,88h1v1h-1zM416,88h1v1h-1zM418,88h1v1h-1zM420,88h1v1h-1zM422,88h1v1h-1zM424,88h1v1h-1zM426,88h1v1h-1zM428,88h1v1h-1zM430,88h1v1h-1zM432,88h1v1h-1zM434,88h1v1h-1zM436,88h1v1h-1zM438,88h1v1h-1zM440,88h1v1h-1zM442,88h1v1h-1zM444,88h1v1h-1zM446,88h1v1h-1zM448,88h1v1h-1zM450,88h1v1h-1zM452,88h1v1h-1zM454,88h1v1h-1zM456,88h1v1h-1zM458,88h1v1h-1zM460,88h1v1h-1zM462,88h1v1h-1zM464,88h1v1h-1zM466,88h1v1h-1zM468,88h1v1h-1zM470,88h1v1h-1zM472,88h1v1h-1zM474,88h1v1h-1zM476,88h1v1h-1zM478,88h1v1h-1zM480,88h1v1h-1zM482,88h1v1h-1zM484,88h1v1h-1zM486,88h1v1h-1zM488,88h1v1h-1zM490,88h1v1h-1zM492,88h1v1h-1zM494,88h1v1h-1zM496,88h1v1h-1zM498,88h1v1h-1zM500,88h1v1h-1zM502,88h1v1h-1zM504,88h1v1h-1zM506,88h1v1h-1zM508,88h1v1h-1zM510,88h1v1h-1zM512,88h1v1h-1zM514,88h1v1h-1zM516,88h1v1h-1zM518,88h1v1h-1zM520,88h1v1h-1zM522,88h1v1h-1zM524,88h1v1h-1zM526,88h1v1h-1zM528,88h1v1h-1zM530,88h1v1h-1zM532,88h1v1h-1zM534,88h1v1h-1zM536,88h1v1h-1zM538,88h1v1h-1zM540,88h1v1h-1zM542,88h1v1h-1zM544,88h1v1h-1zM546,88h1v1h-1zM548,88h1v1h-1zM550,88h1v1h-1zM552,88h1v1h-1zM554,88h1v1h-1zM556,88h1v1h-1zM558,88h1v1h-1zM560,88h1v1h-1zM562,88h1v1h-1zM564,88h1v1h-1zM566,88h1v1h-1zM568,88h1v1h-1zM570,88h1v1h-1zM572,88h1v1h-1zM574,88h1v1h-1zM576,88h1v1h-1zM578,88h1v1h-1zM580,88h1v1h-1zM582,88h1v1h-1zM584,88h1v1h-1zM586,88h1v1h-1zM588,88h1v1h-1zM590,88h1v1h-1zM592,88h1v1h-1zM594,88h1v1h-1zM596,88h1v1h-1zM598,88h1v1h-1zM600,88h1v1h-1zM602,88h1v1h-1zM604,88h1v1h-1zM606,88h1v1h-1zM608,88h1v1h-1zM610,88h1v1h-1zM612,88h1v1h-1zM614,88h1v1h-1zM616,88h1v1h-1zM618,88h1v1h-1zM620,88h1v1h-1zM622,88h1v1h-1zM624,88h1v1h-1zM626,88h1v1h-1zM628,88h1v1h-1zM630,88h1v1h-1zM632,88h1v1h-1zM634,88h1v1h-1zM636,88h1v1h-1zM638,88h1v1h-1zM640,88h1v1h-1zM642,88h1v1h-1zM644,88h1v1h-1zM646,88h1v1h-1zM648,88h1v1h-1zM650,88h1v1h-1zM652,88h1v1h-1zM654,88h1v1h-1zM656,88h1v1h-1zM658,88h1v1h-1zM660,88h1v1h-1zM662,88h1v1h-1zM664,88h1v1h-1zM666,88h1v1h-1zM668,88h1v1h-1zM670,88h1v1h-1zM672,88h1v1h-1zM674,88h1v1h-1zM676,88h1v1h-1zM678,88h1v1h-1zM680,88h1v1h-1zM682,88h1v1h-1zM86,138h1v1h-1zM88,138h1v1h-1zM90,138h1v1h-1zM92,138h1v1h-1zM94,138h1v1h-1zM96,138h1v1h-1zM98,138h1v1h-1zM100,138h1v1h-1zM102,138h1v1h-1zM104,138h1v1h-1zM106,138h1v1h-1zM108,138h1v1h-1zM110,138h1v1h-1zM112,138h1v1h-1zM114,138h1v1h-1zM116,138h1v1h-1zM118,138h1v1h-1zM120,138h1v1h-1zM122,138h1v1h-1zM124,138h1v1h-1zM126,138h1v1h-1zM128,138h1v1h-1zM130,138h1v1h-1zM132,138h1v1h-1zM134,138h1v1h-1zM136,138h1v1h-1zM138,138h1v1h-1zM140,138h1v1h-1zM142,138h1v1h-1zM144,138h1v1h-1zM146,138h1v1h-1zM148,138h1v1h-1zM150,138h1v1h-1zM152,138h1v1h-1zM154,138h1v1h-1zM156,138h1v1h-1zM158,138h1v1h-1zM160,138h1v1h-1zM162,138h1v1h-1zM164,138h1v1h-1zM166,138h1v1h-1zM168,138h1v1h-1zM170,138h1v1h-1zM172,138h1v1h-1zM174,138h1v1h-1zM176,138h1v1h-1zM178,138h1v1h-1zM180,138h1v1h-1zM182,138h1v1h-1zM184,138h1v1h-1zM186,138h1v1h-1zM188,138h1v1h-1zM190,138h1v1h-1zM192,138h1v1h-1zM194,138h1v1h-1zM196,138h1v1h-1zM198,138h1v1h-1zM200,138h1v1h-1zM202,138h1v1h-1zM204,138h1v1h-1zM206,138h1v1h-1zM208,138h1v1h-1zM210,138h1v1h-1zM212,138h1v1h-1zM214,138h1v1h-1zM216,138h1v1h-1zM218,138h1v1h-1zM220,138h1v1h-1zM222,138h1v1h-1zM224,138h1v1h-1zM226,138h1v1h-1zM228,138h1v1h-1zM230,138h1v1h-1zM232,138h1v1h-1zM234,138h1v1h-1zM236,138h1v1h-1zM238,138h1v1h-1zM240,138h1v1h-1zM242,138h1v1h-1zM244,138h1v1h-1zM246,138h1v1h-1zM248,138h1v1h-1zM250,138h1v1h-1zM252,138h1v1h-1zM254,138h1v1h-1zM256,138h1v1h-1zM258,138h1v1h-1zM260,138h1v1h-1zM262,138h1v1h-1zM264,138h1v1h-1zM266,138h1v1h-1zM268,138h1v1h-1zM270,138h1v1h-1zM272,138h1v1h-1zM274,138h1v1h-1zM276,138h1v1h-1zM278,138h1v1h-1zM280,138h1v1h-1zM282,138h1v1h-1zM284,138h1v1h-1zM286,138h1v1h-1zM288,138h1v1h-1zM290,138h1v1h-1zM292,138h1v1h-1zM294,138h1v1h-1zM296,138h1v1h-1zM298,138h1v1h-1zM300,138h1v1h-1zM302,138h1v1h-1zM304,138h1v1h-1zM306,138h1v1h-1zM308,138h1v1h-1zM310,138h1v1h-1zM312,138h1v1h-1zM314,138h1v1h-1zM316,138h1v1h-1zM318,138h1v1h-1zM320,138h1v1h-1zM322,138h1v1h-1zM324,138h1v1h-1zM326,138h1v1h-1zM328,138h1v1h-1zM330,138h1v1h-1zM332,138h1v1h-1zM334,138h1v1h-1zM336,138h1v1h-1zM338,138h1v1h-1zM340,138h1v1h-1zM342,138h1v1h-1zM344,138h1v1h-1zM346,138h1v1h-1zM348,138h1v1h-1zM350,138h1v1h-1zM352,138h1v1h-1zM354,138h1v1h-1zM356,138h1v1h-1zM358,138h1v1h-1zM360,138h1v1h-1zM362,138h1v1h-1zM364,138h1v1h-1zM366,138h1v1h-1zM368,138h1v1h-1zM370,138h1v1h-1zM372,138h1v1h-1zM374,138h1v1h-1zM376,138h1v1h-1zM378,138h1v1h-1zM380,138h1v1h-1zM382,138h1v1h-1zM384,138h1v1h-1zM386,138h1v1h-1zM388,138h1v1h-1zM390,138h1v1h-1zM392,138h1v1h-1zM394,138h1v1h-1zM396,138h1v1h-1zM398,138h1v1h-1zM400,138h1v1h-1zM402,138h1v1h-1zM404,138h1v1h-1zM406,138h1v1h-1zM408,138h1v1h-1zM410,138h1v1h-1zM412,138h1v1h-1zM414,138h1v1h-1zM416,138h1v1h-1zM418,138h1v1h-1zM420,138h1v1h-1zM422,138h1v1h-1zM424,138h1v1h-1zM426,138h1v1h-1zM428,138h1v1h-1zM430,138h1v1h-1zM432,138h1v1h-1zM434,138h1v1h-1zM436,138h1v1h-1zM438,138h1v1h-1zM440,138h1v1h-1zM442,138h1v1h-1zM444,138h1v1h-1zM446,138h1v1h-1zM448,138h1v1h-1zM450,138h1v1h-1zM452,138h1v1h-1zM454,138h1v1h-1zM456,138h1v1h-1zM458,138h1v1h-1zM460,138h1v1h-1zM462,138h1v1h-1zM464,138h1v1h-1zM466,138h1v1h-1zM468,138h1v1h-1zM470,138h1v1h-1zM472,138h1v1h-1zM474,138h1v1h-1zM476,138h1v1h-1zM478,138h1v1h-1zM480,138h1v1h-1zM482,138h1v1h-1zM484,138h1v1h-1zM486,138h1v1h-1zM488,138h1v1h-1zM490,138h1v1h-1zM492,138h1v1h-1zM494,138h1v1h-1zM496,138h1v1h-1zM498,138h1v1h-1zM500,138h1v1h-1zM502,138h1v1h-1zM504,138h1v1h-1zM506,138h1v1h-1zM508,138h1v1h-1zM510,138h1v1h-1zM512,138h1v1h-1zM514,138h1v1h-1zM516,138h1v1h-1zM518,138h1v1h-1zM520,138h1v1h-1zM522,138h1v1h-1zM524,138h1v1h-1zM526,138h1v1h-1zM528,138h1v1h-1zM530,138h1v1h-1zM532,138h1v1h-1zM534,138h1v1h-1zM536,138h1v1h-1zM538,138h1v1h-1zM540,138h1v1h-1zM542,138h1v1h-1zM544,138h1v1h-1zM546,138h1v1h-1zM548,138h1v1h-1zM550,138h1v1h-1zM552,138h1v1h-1zM554,138h1v1h-1zM556,138h1v1h-1zM558,138h1v1h-1zM560,138h1v1h-1zM562,138h1v1h-1zM564,138h1v1h-1zM566,138h1v1h-1zM568,138h1v1h-1zM570,138h1v1h-1zM572,138h1v1h-1zM574,138h1v1h-1zM576,138h1v1h-1zM578,138h1v1h-1zM580,138h1v1h-1zM582,138h1v1h-1zM584,138h1v1h-1zM586,138h1v1h-1zM588,138h1v1h-1zM590,138h1v1h-1zM592,138h1v1h-1zM594,138h1v1h-1zM596,138h1v1h-1zM598,138h1v1h-1zM600,138h1v1h-1zM602,138h1v1h-1zM604,138h1v1h-1zM606,138h1v1h-1zM608,138h1v1h-1zM610,138h1v1h-1zM612,138h1v1h-1zM614,138h1v1h-1zM616,138h1v1h-1zM618,138h1v1h-1zM620,138h1v1h-1zM622,138h1v1h-1zM624,138h1v1h-1zM626,138h1v1h-1zM628,138h1v1h-1zM630,138h1v1h-1zM632,138h1v1h-1zM634,138h1v1h-1zM636,138h1v1h-1zM638,138h1v1h-1zM640,138h1v1h-1zM642,138h1v1h-1zM644,138h1v1h-1zM646,138h1v1h-1zM648,138h1v1h-1zM650,138h1v1h-1zM652,138h1v1h-1zM654,138h1v1h-1zM656,138h1v1h-1zM658,138h1v1h-1zM660,138h1v1h-1zM662,138h1v1h-1zM664,138h1v1h-1zM666,138h1v1h-1zM668,138h1v1h-1zM670,138h1v1h-1zM672,138h1v1h-1zM674,138h1v1h-1zM676,138h1v1h-1zM678,138h1v1h-1zM680,138h1v1h-1zM682,138h1v1h-1zM86,188h1v1h-1zM88,188h1v1h-1zM90,188h1v1h-1zM92,188h1v1h-1zM94,188h1v1h-1zM96,188h1v1h-1zM98,188h1v1h-1zM100,188h1v1h-1zM102,188h1v1h-1zM104,188h1v1h-1zM106,188h1v1h-1zM108,188h1v1h-1zM110,188h1v1h-1zM112,188h1v1h-1zM114,188h1v1h-1zM116,188h1v1h-1zM118,188h1v1h-1zM120,188h1v1h-1zM122,188h1v1h-1zM124,188h1v1h-1zM126,188h1v1h-1zM128,188h1v1h-1zM130,188h1v1h-1zM132,188h1v1h-1zM134,188h1v1h-1zM136,188h1v1h-1zM138,188h1v1h-1zM140,188h1v1h-1zM142,188h1v1h-1zM144,188h1v1h-1zM146,188h1v1h-1zM148,188h1v1h-1zM150,188h1v1h-1zM152,188h1v1h-1zM154,188h1v1h-1zM156,188h1v1h-1zM158,188h1v1h-1zM160,188h1v1h-1zM162,188h1v1h-1zM164,188h1v1h-1zM166,188h1v1h-1zM168,188h1v1h-1zM170,188h1v1h-1zM172,188h1v1h-1zM174,188h1v1h-1zM176,188h1v1h-1zM178,188h1v1h-1zM180,188h1v1h-1zM182,188h1v1h-1zM184,188h1v1h-1zM186,188h1v1h-1zM188,188h1v1h-1zM190,188h1v1h-1zM192,188h1v1h-1zM194,188h1v1h-1zM196,188h1v1h-1zM198,188h1v1h-1zM200,188h1v1h-1zM202,188h1v1h-1zM204,188h1v1h-1zM206,188h1v1h-1zM208,188h1v1h-1zM210,188h1v1h-1zM212,188h1v1h-1zM214,188h1v1h-1zM216,188h1v1h-1zM218,188h1v1h-1zM220,188h1v1h-1zM222,188h1v1h-1zM224,188h1v1h-1zM226,188h1v1h-1zM228,188h1v1h-1zM230,188h1v1h-1zM232,188h1v1h-1zM234,188h1v1h-1zM236,188h1v1h-1zM238,188h1v1h-1zM240,188h1v1h-1zM242,188h1v1h-1zM244,188h1v1h-1zM246,188h1v1h-1zM248,188h1v1h-1zM250,188h1v1h-1zM252,188h1v1h-1zM254,188h1v1h-1zM256,188h1v1h-1zM258,188h1v1h-1zM260,188h1v1h-1zM262,188h1v1h-1zM264,188h1v1h-1zM266,188h1v1h-1zM268,188h1v1h-1zM270,188h1v1h-1zM272,188h1v1h-1zM274,188h1v1h-1zM276,188h1v1h-1zM278,188h1v1h-1zM280,188h1v1h-1zM282,188h1v1h-1zM284,188h1v1h-1zM286,188h1v1h-1zM288,188h1v1h-1zM290,188h1v1h-1zM292,188h1v1h-1zM294,188h1v1h-1zM296,188h1v1h-1zM298,188h1v1h-1zM300,188h1v1h-1zM302,188h1v1h-1zM304,188h1v1h-1zM306,188h1v1h-1zM308,188h1v1h-1zM310,188h1v1h-1zM312,188h1v1h-1zM314,188h1v1h-1zM316,188h1v1h-1zM318,188h1v1h-1zM320,188h1v1h-1zM322,188h1v1h-1zM324,188h1v1h-1zM326,188h1v1h-1zM328,188h1v1h-1zM330,188h1v1h-1zM332,188h1v1h-1zM334,188h1v1h-1zM336,188h1v1h-1zM338,188h1v1h-1zM340,188h1v1h-1zM342,188h1v1h-1zM344,188h1v1h-1zM346,188h1v1h-1zM348,188h1v1h-1zM350,188h1v1h-1zM352,188h1v1h-1zM354,188h1v1h-1zM356,188h1v1h-1zM358,188h1v1h-1zM360,188h1v1h-1zM362,188h1v1h-1zM364,188h1v1h-1zM366,188h1v1h-1zM368,188h1v1h-1zM370,188h1v1h-1zM372,188h1v1h-1zM374,188h1v1h-1zM376,188h1v1h-1zM378,188h1v1h-1zM380,188h1v1h-1zM382,188h1v1h-1zM384,188h1v1h-1zM386,188h1v1h-1zM388,188h1v1h-1zM390,188h1v1h-1zM392,188h1v1h-1zM394,188h1v1h-1zM396,188h1v1h-1zM398,188h1v1h-1zM400,188h1v1h-1zM402,188h1v1h-1zM404,188h1v1h-1zM406,188h1v1h-1zM408,188h1v1h-1zM410,188h1v1h-1zM412,188h1v1h-1zM414,188h1v1h-1zM416,188h1v1h-1zM418,188h1v1h-1zM420,188h1v1h-1zM422,188h1v1h-1zM424,188h1v1h-1zM426,188h1v1h-1zM428,188h1v1h-1zM430,188h1v1h-1zM432,188h1v1h-1zM434,188h1v1h-1zM436,188h1v1h-1zM438,188h1v1h-1zM440,188h1v1h-1zM442,188h1v1h-1zM444,188h1v1h-1zM446,188h1v1h-1zM448,188h1v1h-1zM450,188h1v1h-1zM452,188h1v1h-1zM454,188h1v1h-1zM456,188h1v1h-1zM458,188h1v1h-1zM460,188h1v1h-1zM462,188h1v1h-1zM464,188h1v1h-1zM466,188h1v1h-1zM468,188h1v1h-1zM470,188h1v1h-1zM472,188h1v1h-1zM474,188h1v1h-1zM476,188h1v1h-1zM478,188h1v1h-1zM480,188h1v1h-1zM482,188h1v1h-1zM484,188h1v1h-1zM486,188h1v1h-1zM488,188h1v1h-1zM490,188h1v1h-1zM492,188h1v1h-1zM494,188h1v1h-1zM496,188h1v1h-1zM498,188h1v1h-1zM500,188h1v1h-1zM502,188h1v1h-1zM504,188h1v1h-1zM506,188h1v1h-1zM508,188h1v1h-1zM510,188h1v1h-1zM512,188h1v1h-1zM514,188h1v1h-1zM516,188h1v1h-1zM518,188h1v1h-1zM520,188h1v1h-1zM522,188h1v1h-1zM524,188h1v1h-1zM526,188h1v1h-1zM528,188h1v1h-1zM530,188h1v1h-1zM532,188h1v1h-1zM534,188h1v1h-1zM536,188h1v1h-1zM538,188h1v1h-1zM540,188h1v1h-1zM542,188h1v1h-1zM544,188h1v1h-1zM546,188h1v1h-1zM548,188h1v1h-1zM550,188h1v1h-1zM552,188h1v1h-1zM554,188h1v1h-1zM556,188h1v1h-1zM558,188h1v1h-1zM560,188h1v1h-1zM562,188h1v1h-1zM564,188h1v1h-1zM566,188h1v1h-1zM568,188h1v1h-1zM570,188h1v1h-1zM572,188h1v1h-1zM574,188h1v1h-1zM576,188h1v1h-1zM578,188h1v1h-1zM580,188h1v1h-1zM582,188h1v1h-1zM584,188h1v1h-1zM586,188h1v1h-1zM588,188h1v1h-1zM590,188h1v1h-1zM592,188h1v1h-1zM594,188h1v1h-1zM596,188h1v1h-1zM598,188h1v1h-1zM600,188h1v1h-1zM602,188h1v1h-1zM604,188h1v1h-1zM606,188h1v1h-1zM608,188h1v1h-1zM610,188h1v1h-1zM612,188h1v1h-1zM614,188h1v1h-1zM616,188h1v1h-1zM618,188h1v1h-1zM620,188h1v1h-1zM622,188h1v1h-1zM624,188h1v1h-1zM626,188h1v1h-1zM628,188h1v1h-1zM630,188h1v1h-1zM632,188h1v1h-1zM634,188h1v1h-1zM636,188h1v1h-1zM638,188h1v1h-1zM640,188h1v1h-1zM642,188h1v1h-1zM644,188h1v1h-1zM646,188h1v1h-1zM648,188h1v1h-1zM650,188h1v1h-1zM652,188h1v1h-1zM654,188h1v1h-1zM656,188h1v1h-1zM658,188h1v1h-1zM660,188h1v1h-1zM662,188h1v1h-1zM664,188h1v1h-1zM666,188h1v1h-1zM668,188h1v1h-1zM670,188h1v1h-1zM672,188h1v1h-1zM674,188h1v1h-1zM676,188h1v1h-1zM678,188h1v1h-1zM680,188h1v1h-1zM682,188h1v1h-1zM86,238h1v1h-1zM88,238h1v1h-1zM90,238h1v1h-1zM92,238h1v1h-1zM94,238h1v1h-1zM96,238h1v1h-1zM98,238h1v1h-1zM100,238h1v1h-1zM102,238h1v1h-1zM104,238h1v1h-1zM106,238h1v1h-1zM108,238h1v1h-1zM110,238h1v1h-1zM112,238h1v1h-1zM114,238h1v1h-1zM116,238h1v1h-1zM118,238h1v1h-1zM120,238h1v1h-1zM122,238h1v1h-1zM124,238h1v1h-1zM126,238h1v1h-1zM128,238h1v1h-1zM130,238h1v1h-1zM132,238h1v1h-1zM134,238h1v1h-1zM136,238h1v1h-1zM138,238h1v1h-1zM140,238h1v1h-1zM142,238h1v1h-1zM144,238h1v1h-1zM146,238h1v1h-1zM148,238h1v1h-1zM150,238h1v1h-1zM152,238h1v1h-1zM154,238h1v1h-1zM156,238h1v1h-1zM158,238h1v1h-1zM160,238h1v1h-1zM162,238h1v1h-1zM164,238h1v1h-1zM166,238h1v1h-1zM168,238h1v1h-1zM170,238h1v1h-1zM172,238h1v1h-1zM174,238h1v1h-1zM176,238h1v1h-1zM178,238h1v1h-1zM180,238h1v1h-1zM182,238h1v1h-1zM184,238h1v1h-1zM186,238h1v1h-1zM188,238h1v1h-1zM190,238h1v1h-1zM192,238h1v1h-1zM194,238h1v1h-1zM196,238h1v1h-1zM198,238h1v1h-1zM200,238h1v1h-1zM202,238h1v1h-1zM204,238h1v1h-1zM206,238h1v1h-1zM208,238h1v1h-1zM210,238h1v1h-1zM212,238h1v1h-1zM214,238h1v1h-1zM216,238h1v1h-1zM218,238h1v1h-1zM220,238h1v1h-1zM222,238h1v1h-1zM224,238h1v1h-1zM226,238h1v1h-1zM228,238h1v1h-1zM230,238h1v1h-1zM232,238h1v1h-1zM234,238h1v1h-1zM236,238h1v1h-1zM238,238h1v1h-1zM240,238h1v1h-1zM242,238h1v1h-1zM244,238h1v1h-1zM246,238h1v1h-1zM248,238h1v1h-1zM250,238h1v1h-1zM252,238h1v1h-1zM254,238h1v1h-1zM256,238h1v1h-1zM258,238h1v1h-1zM260,238h1v1h-1zM262,238h1v1h-1zM264,238h1v1h-1zM266,238h1v1h-1zM268,238h1v1h-1zM270,238h1v1h-1zM272,238h1v1h-1zM274,238h1v1h-1zM276,238h1v1h-1zM278,238h1v1h-1zM280,238h1v1h-1zM282,238h1v1h-1zM284,238h1v1h-1zM286,238h1v1h-1zM288,238h1v1h-1zM290,238h1v1h-1zM292,238h1v1h-1zM294,238h1v1h-1zM296,238h1v1h-1zM298,238h1v1h-1zM300,238h1v1h-1zM302,238h1v1h-1zM304,238h1v1h-1zM306,238h1v1h-1zM308,238h1v1h-1zM310,238h1v1h-1zM312,238h1v1h-1zM314,238h1v1h-1zM316,238h1v1h-1zM318,238h1v1h-1zM320,238h1v1h-1zM322,238h1v1h-1zM324,238h1v1h-1zM326,238h1v1h-1zM328,238h1v1h-1zM330,238h1v1h-1zM332,238h1v1h-1zM334,238h1v1h-1zM336,238h1v1h-1zM338,238h1v1h-1zM340,238h1v1h-1zM342,238h1v1h-1zM344,238h1v1h-1zM346,238h1v1h-1zM348,238h1v1h-1zM350,238h1v1h-1zM352,238h1v1h-1zM354,238h1v1h-1zM356,238h1v1h-1zM358,238h1v1h-1zM360,238h1v1h-1zM362,238h1v1h-1zM364,238h1v1h-1zM366,238h1v1h-1zM368,238h1v1h-1zM370,238h1v1h-1zM372,238h1v1h-1zM374,238h1v1h-1zM376,238h1v1h-1zM378,238h1v1h-1zM380,238h1v1h-1zM382,238h1v1h-1zM384,238h1v1h-1zM386,238h1v1h-1zM388,238h1v1h-1zM390,238h1v1h-1zM392,238h1v1h-1zM394,238h1v1h-1zM396,238h1v1h-1zM398,238h1v1h-1zM400,238h1v1h-1zM402,238h1v1h-1zM404,238h1v1h-1zM406,238h1v1h-1zM408,238h1v1h-1zM410,238h1v1h-1zM412,238h1v1h-1zM414,238h1v1h-1zM416,238h1v1h-1zM418,238h1v1h-1zM420,238h1v1h-1zM422,238h1v1h-1zM424,238h1v1h-1zM426,238h1v1h-1zM428,238h1v1h-1zM430,238h1v1h-1zM432,238h1v1h-1zM434,238h1v1h-1zM436,238h1v1h-1zM438,238h1v1h-1zM440,238h1v1h-1zM442,238h1v1h-1zM444,238h1v1h-1zM446,238h1v1h-1zM448,238h1v1h-1zM450,238h1v1h-1zM452,238h1v1h-1zM454,238h1v1h-1zM456,238h1v1h-1zM458,238h1v1h-1zM460,238h1v1h-1zM462,238h1v1h-1zM464,238h1v1h-1zM466,238h1v1h-1zM468,238h1v1h-1zM470,238h1v1h-1zM472,238h1v1h-1zM474,238h1v1h-1zM476,238h1v1h-1zM478,238h1v1h-1zM480,238h1v1h-1zM482,238h1v1h-1zM484,238h1v1h-1zM486,238h1v1h-1zM488,238h1v1h-1zM490,238h1v1h-1zM492,238h1v1h-1zM494,238h1v1h-1zM496,238h1v1h-1zM498,238h1v1h-1zM500,238h1v1h-1zM502,238h1v1h-1zM504,238h1v1h-1zM506,238h1v1h-1zM508,238h1v1h-1zM510,238h1v1h-1zM512,238h1v1h-1zM514,238h1v1h-1zM516,238h1v1h-1zM518,238h1v1h-1zM520,238h1v1h-1zM522,238h1v1h-1zM524,238h1v1h-1zM526,238h1v1h-1zM528,238h1v1h-1zM530,238h1v1h-1zM532,238h1v1h-1zM534,238h1v1h-1zM536,238h1v1h-1zM538,238h1v1h-1zM540,238h1v1h-1zM542,238h1v1h-1zM544,238h1v1h-1zM546,238h1v1h-1zM548,238h1v1h-1zM550,238h1v1h-1zM552,238h1v1h-1zM554,238h1v1h-1zM556,238h1v1h-1zM558,238h1v1h-1zM560,238h1v1h-1zM562,238h1v1h-1zM564,238h1v1h-1zM566,238h1v1h-1zM568,238h1v1h-1zM570,238h1v1h-1zM572,238h1v1h-1zM574,238h1v1h-1zM576,238h1v1h-1zM578,238h1v1h-1zM580,238h1v1h-1zM582,238h1v1h-1zM584,238h1v1h-1zM586,238h1v1h-1zM588,238h1v1h-1zM590,238h1v1h-1zM592,238h1v1h-1zM594,238h1v1h-1zM596,238h1v1h-1zM598,238h1v1h-1zM600,238h1v1h-1zM602,238h1v1h-1zM604,238h1v1h-1zM606,238h1v1h-1zM608,238h1v1h-1zM610,238h1v1h-1zM612,238h1v1h-1zM614,238h1v1h-1zM616,238h1v1h-1zM618,238h1v1h-1zM620,238h1v1h-1zM622,238h1v1h-1zM624,238h1v1h-1zM626,238h1v1h-1zM628,238h1v1h-1zM630,238h1v1h-1zM632,238h1v1h-1zM634,238h1v1h-1zM636,238h1v1h-1zM638,238h1v1h-1zM640,238h1v1h-1zM642,238h1v1h-1zM644,238h1v1h-1zM646,238h1v1h-1zM648,238h1v1h-1zM650,238h1v1h-1zM652,238h1v1h-1zM654,238h1v1h-1zM656,238h1v1h-1zM658,238h1v1h-1zM660,238h1v1h-1zM662,238h1v1h-1zM664,238h1v1h-1zM666,238h1v1h-1zM668,238h1v1h-1zM670,238h1v1h-1zM672,238h1v1h-1zM674,238h1v1h-1zM676,238h1v1h-1zM678,238h1v1h-1zM680,238h1v1h-1zM682,238h1v1h-1zM86,288h1v1h-1zM88,288h1v1h-1zM90,288h1v1h-1zM92,288h1v1h-1zM94,288h1v1h-1zM96,288h1v1h-1zM98,288h1v1h-1zM100,288h1v1h-1zM102,288h1v1h-1zM104,288h1v1h-1zM106,288h1v1h-1zM108,288h1v1h-1zM110,288h1v1h-1zM112,288h1v1h-1zM114,288h1v1h-1zM116,288h1v1h-1zM118,288h1v1h-1zM120,288h1v1h-1zM122,288h1v1h-1zM124,288h1v1h-1zM126,288h1v1h-1zM128,288h1v1h-1zM130,288h1v1h-1zM132,288h1v1h-1zM134,288h1v1h-1zM136,288h1v1h-1zM138,288h1v1h-1zM140,288h1v1h-1zM142,288h1v1h-1zM144,288h1v1h-1zM146,288h1v1h-1zM148,288h1v1h-1zM150,288h1v1h-1zM152,288h1v1h-1zM154,288h1v1h-1zM156,288h1v1h-1zM158,288h1v1h-1zM160,288h1v1h-1zM162,288h1v1h-1zM164,288h1v1h-1zM166,288h1v1h-1zM168,288h1v1h-1zM170,288h1v1h-1zM172,288h1v1h-1zM174,288h1v1h-1zM176,288h1v1h-1zM178,288h1v1h-1zM180,288h1v1h-1zM182,288h1v1h-1zM184,288h1v1h-1zM186,288h1v1h-1zM188,288h1v1h-1zM190,288h1v1h-1zM192,288h1v1h-1zM194,288h1v1h-1zM196,288h1v1h-1zM198,288h1v1h-1zM200,288h1v1h-1zM202,288h1v1h-1zM204,288h1v1h-1zM206,288h1v1h-1zM208,288h1v1h-1zM210,288h1v1h-1zM212,288h1v1h-1zM214,288h1v1h-1zM216,288h1v1h-1zM218,288h1v1h-1zM220,288h1v1h-1zM222,288h1v1h-1zM224,288h1v1h-1zM226,288h1v1h-1zM228,288h1v1h-1zM230,288h1v1h-1zM232,288h1v1h-1zM234,288h1v1h-1zM236,288h1v1h-1zM238,288h1v1h-1zM240,288h1v1h-1zM242,288h1v1h-1zM244,288h1v1h-1zM246,288h1v1h-1zM248,288h1v1h-1zM250,288h1v1h-1zM252,288h1v1h-1zM254,288h1v1h-1zM256,288h1v1h-1zM258,288h1v1h-1zM260,288h1v1h-1zM262,288h1v1h-1zM264,288h1v1h-1zM266,288h1v1h-1zM268,288h1v1h-1zM270,288h1v1h-1zM272,288h1v1h-1zM274,288h1v1h-1zM276,288h1v1h-1zM278,288h1v1h-1zM280,288h1v1h-1zM282,288h1v1h-1zM284,288h1v1h-1zM286,288h1v1h-1zM288,288h1v1h-1zM290,288h1v1h-1zM292,288h1v1h-1zM294,288h1v1h-1zM296,288h1v1h-1zM298,288h1v1h-1zM300,288h1v1h-1zM302,288h1v1h-1zM304,288h1v1h-1zM306,288h1v1h-1zM308,288h1v1h-1zM310,288h1v1h-1zM312,288h1v1h-1zM314,288h1v1h-1zM316,288h1v1h-1zM318,288h1v1h-1zM320,288h1v1h-1zM322,288h1v1h-1zM324,288h1v1h-1zM326,288h1v1h-1zM328,288h1v1h-1zM330,288h1v1h-1zM332,288h1v1h-1zM334,288h1v1h-1zM336,288h1v1h-1zM338,288h1v1h-1zM340,288h1v1h-1zM342,288h1v1h-1zM344,288h1v1h-1zM346,288h1v1h-1zM348,288h1v1h-1zM350,288h1v1h-1zM352,288h1v1h-1zM354,288h1v1h-1zM356,288h1v1h-1zM358,288h1v1h-1zM360,288h1v1h-1zM362,288h1v1h-1zM364,288h1v1h-1zM366,288h1v1h-1zM368,288h1v1h-1zM370,288h1v1h-1zM372,288h1v1h-1zM374,288h1v1h-1zM376,288h1v1h-1zM378,288h1v1h-1zM380,288h1v1h-1zM382,288h1v1h-1zM384,288h1v1h-1zM386,288h1v1h-1zM388,288h1v1h-1zM390,288h1v1h-1zM392,288h1v1h-1zM394,288h1v1h-1zM396,288h1v1h-1zM398,288h1v1h-1zM400,288h1v1h-1zM402,288h1v1h-1zM404,288h1v1h-1zM406,288h1v1h-1zM408,288h1v1h-1zM410,288h1v1h-1zM412,288h1v1h-1zM414,288h1v1h-1zM416,288h1v1h-1zM418,288h1v1h-1zM420,288h1v1h-1zM422,288h1v1h-1zM424,288h1v1h-1zM426,288h1v1h-1zM428,288h1v1h-1zM430,288h1v1h-1zM432,288h1v1h-1zM434,288h1v1h-1zM436,288h1v1h-1zM438,288h1v1h-1zM440,288h1v1h-1zM442,288h1v1h-1zM444,288h1v1h-1zM446,288h1v1h-1zM448,288h1v1h-1zM450,288h1v1h-1zM452,288h1v1h-1zM454,288h1v1h-1zM456,288h1v1h-1zM458,288h1v1h-1zM460,288h1v1h-1zM462,288h1v1h-1zM464,288h1v1h-1zM466,288h1v1h-1zM468,288h1v1h-1zM470,288h1v1h-1zM472,288h1v1h-1zM474,288h1v1h-1zM476,288h1v1h-1zM478,288h1v1h-1zM480,288h1v1h-1zM482,288h1v1h-1zM484,288h1v1h-1zM486,288h1v1h-1zM488,288h1v1h-1zM490,288h1v1h-1zM492,288h1v1h-1zM494,288h1v1h-1zM496,288h1v1h-1zM498,288h1v1h-1zM500,288h1v1h-1zM502,288h1v1h-1zM504,288h1v1h-1zM506,288h1v1h-1zM508,288h1v1h-1zM510,288h1v1h-1zM512,288h1v1h-1zM514,288h1v1h-1zM516,288h1v1h-1zM518,288h1v1h-1zM520,288h1v1h-1zM522,288h1v1h-1zM524,288h1v1h-1zM526,288h1v1h-1zM528,288h1v1h-1zM530,288h1v1h-1zM532,288h1v1h-1zM534,288h1v1h-1zM536,288h1v1h-1zM538,288h1v1h-1zM540,288h1v1h-1zM542,288h1v1h-1zM544,288h1v1h-1zM546,288h1v1h-1zM548,288h1v1h-1zM550,288h1v1h-1zM552,288h1v1h-1zM554,288h1v1h-1zM556,288h1v1h-1zM558,288h1v1h-1zM560,288h1v1h-1zM562,288h1v1h-1zM564,288h1v1h-1zM566,288h1v1h-1zM568,288h1v1h-1zM570,288h1v1h-1zM572,288h1v1h-1zM574,288h1v1h-1zM576,288h1v1h-1zM578,288h1v1h-1zM580,288h1v1h-1zM582,288h1v1h-1zM584,288h1v1h-1zM586,288h1v1h-1zM588,288h1v1h-1zM590,288h1v1h-1zM592,288h1v1h-1zM594,288h1v1h-1zM596,288h1v1h-1zM598,288h1v1h-1zM600,288h1v1h-1zM602,288h1v1h-1zM604,288h1v1h-1zM606,288h1v1h-1zM608,288h1v1h-1zM610,288h1v1h-1zM612,288h1v1h-1zM614,288h1v1h-1zM616,288h1v1h-1zM618,288h1v1h-1zM620,288h1v1h-1zM622,288h1v1h-1zM624,288h1v1h-1zM626,288h1v1h-1zM628,288h1v1h-1zM630,288h1v1h-1zM632,288h1v1h-1zM634,288h1v1h-1zM636,288h1v1h-1zM638,288h1v1h-1zM640,288h1v1h-1zM642,288h1v1h-1zM644,288h1v1h-1zM646,288h1v1h-1zM648,288h1v1h-1zM650,288h1v1h-1zM652,288h1v1h-1zM654,288h1v1h-1zM656,288h1v1h-1zM658,288h1v1h-1zM660,288h1v1h-1zM662,288h1v1h-1zM664,288h1v1h-1zM666,288h1v1h-1zM668,288h1v1h-1zM670,288h1v1h-1zM672,288h1v1h-1zM674,288h1v1h-1zM676,288h1v1h-1zM678,288h1v1h-1zM680,288h1v1h-1zM682,288h1v1h-1zM86,338h1v1h-1zM88,338h1v1h-1zM90,338h1v1h-1zM92,338h1v1h-1zM94,338h1v1h-1zM96,338h1v1h-1zM98,338h1v1h-1zM100,338h1v1h-1zM102,338h1v1h-1zM104,338h1v1h-1zM106,338h1v1h-1zM108,338h1v1h-1zM110,338h1v1h-1zM112,338h1v1h-1zM114,338h1v1h-1zM116,338h1v1h-1zM118,338h1v1h-1zM120,338h1v1h-1zM122,338h1v1h-1zM124,338h1v1h-1zM126,338h1v1h-1zM128,338h1v1h-1zM130,338h1v1h-1zM132,338h1v1h-1zM134,338h1v1h-1zM136,338h1v1h-1zM138,338h1v1h-1zM140,338h1v1h-1zM142,338h1v1h-1zM144,338h1v1h-1zM146,338h1v1h-1zM148,338h1v1h-1zM150,338h1v1h-1zM152,338h1v1h-1zM154,338h1v1h-1zM156,338h1v1h-1zM158,338h1v1h-1zM160,338h1v1h-1zM162,338h1v1h-1zM164,338h1v1h-1zM166,338h1v1h-1zM168,338h1v1h-1zM170,338h1v1h-1zM172,338h1v1h-1zM174,338h1v1h-1zM176,338h1v1h-1zM178,338h1v1h-1zM180,338h1v1h-1zM182,338h1v1h-1zM184,338h1v1h-1zM186,338h1v1h-1zM188,338h1v1h-1zM190,338h1v1h-1zM192,338h1v1h-1zM194,338h1v1h-1zM196,338h1v1h-1zM198,338h1v1h-1zM200,338h1v1h-1zM202,338h1v1h-1zM204,338h1v1h-1zM206,338h1v1h-1zM208,338h1v1h-1zM210,338h1v1h-1zM212,338h1v1h-1zM214,338h1v1h-1zM216,338h1v1h-1zM218,338h1v1h-1zM220,338h1v1h-1zM222,338h1v1h-1zM224,338h1v1h-1zM226,338h1v1h-1zM228,338h1v1h-1zM230,338h1v1h-1zM232,338h1v1h-1zM234,338h1v1h-1zM236,338h1v1h-1zM238,338h1v1h-1zM240,338h1v1h-1zM242,338h1v1h-1zM244,338h1v1h-1zM246,338h1v1h-1zM248,338h1v1h-1zM250,338h1v1h-1zM252,338h1v1h-1zM254,338h1v1h-1zM256,338h1v1h-1zM258,338h1v1h-1zM260,338h1v1h-1zM262,338h1v1h-1zM264,338h1v1h-1zM266,338h1v1h-1zM268,338h1v1h-1zM270,338h1v1h-1zM272,338h1v1h-1zM274,338h1v1h-1zM276,338h1v1h-1zM278,338h1v1h-1zM280,338h1v1h-1zM282,338h1v1h-1zM284,338h1v1h-1zM286,338h1v1h-1zM288,338h1v1h-1zM290,338h1v1h-1zM292,338h1v1h-1zM294,338h1v1h-1zM296,338h1v1h-1zM298,338h1v1h-1zM300,338h1v1h-1zM302,338h1v1h-1zM304,338h1v1h-1zM306,338h1v1h-1zM308,338h1v1h-1zM310,338h1v1h-1zM312,338h1v1h-1zM314,338h1v1h-1zM316,338h1v1h-1zM318,338h1v1h-1zM320,338h1v1h-1zM322,338h1v1h-1zM324,338h1v1h-1zM326,338h1v1h-1zM328,338h1v1h-1zM330,338h1v1h-1zM332,338h1v1h-1zM334,338h1v1h-1zM336,338h1v1h-1zM338,338h1v1h-1zM340,338h1v1h-1zM342,338h1v1h-1zM344,338h1v1h-1zM346,338h1v1h-1zM348,338h1v1h-1zM350,338h1v1h-1zM352,338h1v1h-1zM354,338h1v1h-1zM356,338h1v1h-1zM358,338h1v1h-1zM360,338h1v1h-1zM362,338h1v1h-1zM364,338h1v1h-1zM366,338h1v1h-1zM368,338h1v1h-1zM370,338h1v1h-1zM372,338h1v1h-1zM374,338h1v1h-1zM376,338h1v1h-1zM378,338h1v1h-1zM380,338h1v1h-1zM382,338h1v1h-1zM384,338h1v1h-1zM386,338h1v1h-1zM388,338h1v1h-1zM390,338h1v1h-1zM392,338h1v1h-1zM394,338h1v1h-1zM396,338h1v1h-1zM398,338h1v1h-1zM400,338h1v1h-1zM402,338h1v1h-1zM404,338h1v1h-1zM406,338h1v1h-1zM408,338h1v1h-1zM410,338h1v1h-1zM412,338h1v1h-1zM414,338h1v1h-1zM416,338h1v1h-1zM418,338h1v1h-1zM420,338h1v1h-1zM422,338h1v1h-1zM424,338h1v1h-1zM426,338h1v1h-1zM428,338h1v1h-1zM430,338h1v1h-1zM432,338h1v1h-1zM434,338h1v1h-1zM436,338h1v1h-1zM438,338h1v1h-1zM440,338h1v1h-1zM442,338h1v1h-1zM444,338h1v1h-1zM446,338h1v1h-1zM448,338h1v1h-1zM450,338h1v1h-1zM452,338h1v1h-1zM454,338h1v1h-1zM456,338h1v1h-1zM458,338h1v1h-1zM460,338h1v1h-1zM462,338h1v1h-1zM464,338h1v1h-1zM466,338h1v1h-1zM468,338h1v1h-1zM470,338h1v1h-1zM472,338h1v1h-1zM474,338h1v1h-1zM476,338h1v1h-1zM478,338h1v1h-1zM480,338h1v1h-1zM482,338h1v1h-1zM484,338h1v1h-1zM486,338h1v1h-1zM488,338h1v1h-1zM490,338h1v1h-1zM492,338h1v1h-1zM494,338h1v1h-1zM496,338h1v1h-1zM498,338h1v1h-1zM500,338h1v1h-1zM502,338h1v1h-1zM504,338h1v1h-1zM506,338h1v1h-1zM508,338h1v1h-1zM510,338h1v1h-1zM512,338h1v1h-1zM514,338h1v1h-1zM516,338h1v1h-1zM518,338h1v1h-1zM520,338h1v1h-1zM522,338h1v1h-1zM524,338h1v1h-1zM526,338h1v1h-1zM528,338h1v1h-1zM530,338h1v1h-1zM532,338h1v1h-1zM534,338h1v1h-1zM536,338h1v1h-1zM538,338h1v1h-1zM540,338h1v1h-1zM542,338h1v1h-1zM544,338h1v1h-1zM546,338h1v1h-1zM548,338h1v1h-1zM550,338h1v1h-1zM552,338h1v1h-1zM554,338h1v1h-1zM556,338h1v1h-1zM558,338h1v1h-1zM560,338h1v1h-1zM562,338h1v1h-1zM564,338h1v1h-1zM566,338h1v1h-1zM568,338h1v1h-1zM570,338h1v1h-1zM572,338h1v1h-1zM574,338h1v1h-1zM576,338h1v1h-1zM578,338h1v1h-1zM580,338h1v1h-1zM582,338h1v1h-1zM584,338h1v1h-1zM586,338h1v1h-1zM588,338h1v1h-1zM590,338h1v1h-1zM592,338h1v1h-1zM594,338h1v1h-1zM596,338h1v1h-1zM598,338h1v1h-1zM600,338h1v1h-1zM602,338h1v1h-1zM604,338h1v1h-1zM606,338h1v1h-1zM608,338h1v1h-1zM610,338h1v1h-1zM612,338h1v1h-1zM614,338h1v1h-1zM616,338h1v1h-1zM618,338h1v1h-1zM620,338h1v1h-1zM622,338h1v1h-1zM624,338h1v1h-1zM626,338h1v1h-1zM628,338h1v1h-1zM630,338h1v1h-1zM632,338h1v1h-1zM634,338h1v1h-1zM636,338h1v1h-1zM638,338h1v1h-1zM640,338h1v1h-1zM642,338h1v1h-1zM644,338h1v1h-1zM646,338h1v1h-1zM648,338h1v1h-1zM650,338h1v1h-1zM652,338h1v1h-1zM654,338h1v1h-1zM656,338h1v1h-1zM658,338h1v1h-1zM660,338h1v1h-1zM662,338h1v1h-1zM664,338h1v1h-1zM666,338h1v1h-1zM668,338h1v1h-1zM670,338h1v1h-1zM672,338h1v1h-1zM674,338h1v1h-1zM676,338h1v1h-1zM678,338h1v1h-1zM680,338h1v1h-1zM682,338h1v1h-1zM86,388h1v1h-1zM88,388h1v1h-1zM90,388h1v1h-1zM92,388h1v1h-1zM94,388h1v1h-1zM96,388h1v1h-1zM98,388h1v1h-1zM100,388h1v1h-1zM102,388h1v1h-1zM104,388h1v1h-1zM106,388h1v1h-1zM108,388h1v1h-1zM110,388h1v1h-1zM112,388h1v1h-1zM114,388h1v1h-1zM116,388h1v1h-1zM118,388h1v1h-1zM120,388h1v1h-1zM122,388h1v1h-1zM124,388h1v1h-1zM126,388h1v1h-1zM128,388h1v1h-1zM130,388h1v1h-1zM132,388h1v1h-1zM134,388h1v1h-1zM136,388h1v1h-1zM138,388h1v1h-1zM140,388h1v1h-1zM142,388h1v1h-1zM144,388h1v1h-1zM146,388h1v1h-1zM148,388h1v1h-1zM150,388h1v1h-1zM152,388h1v1h-1zM154,388h1v1h-1zM156,388h1v1h-1zM158,388h1v1h-1zM160,388h1v1h-1zM162,388h1v1h-1zM164,388h1v1h-1zM166,388h1v1h-1zM168,388h1v1h-1zM170,388h1v1h-1zM172,388h1v1h-1zM174,388h1v1h-1zM176,388h1v1h-1zM178,388h1v1h-1zM180,388h1v1h-1zM182,388h1v1h-1zM184,388h1v1h-1zM186,388h1v1h-1zM188,388h1v1h-1zM190,388h1v1h-1zM192,388h1v1h-1zM194,388h1v1h-1zM196,388h1v1h-1zM198,388h1v1h-1zM200,388h1v1h-1zM202,388h1v1h-1zM204,388h1v1h-1zM206,388h1v1h-1zM208,388h1v1h-1zM210,388h1v1h-1zM212,388h1v1h-1zM214,388h1v1h-1zM216,388h1v1h-1zM218,388h1v1h-1zM220,388h1v1h-1zM222,388h1v1h-1zM224,388h1v1h-1zM226,388h1v1h-1zM228,388h1v1h-1zM230,388h1v1h-1zM232,388h1v1h-1zM234,388h1v1h-1zM236,388h1v1h-1zM238,388h1v1h-1zM240,388h1v1h-1zM242,388h1v1h-1zM244,388h1v1h-1zM246,388h1v1h-1zM248,388h1v1h-1zM250,388h1v1h-1zM252,388h1v1h-1zM254,388h1v1h-1zM256,388h1v1h-1zM258,388h1v1h-1zM260,388h1v1h-1zM262,388h1v1h-1zM264,388h1v1h-1zM266,388h1v1h-1zM268,388h1v1h-1zM270,388h1v1h-1zM272,388h1v1h-1zM274,388h1v1h-1zM276,388h1v1h-1zM278,388h1v1h-1zM280,388h1v1h-1zM282,388h1v1h-1zM284,388h1v1h-1zM286,388h1v1h-1zM288,388h1v1h-1zM290,388h1v1h-1zM292,388h1v1h-1zM294,388h1v1h-1zM296,388h1v1h-1zM298,388h1v1h-1zM300,388h1v1h-1zM302,388h1v1h-1zM304,388h1v1h-1zM306,388h1v1h-1zM308,388h1v1h-1zM310,388h1v1h-1zM312,388h1v1h-1zM314,388h1v1h-1zM316,388h1v1h-1zM318,388h1v1h-1zM320,388h1v1h-1zM322,388h1v1h-1zM324,388h1v1h-1zM326,388h1v1h-1zM328,388h1v1h-1zM330,388h1v1h-1zM332,388h1v1h-1zM334,388h1v1h-1zM336,388h1v1h-1zM338,388h1v1h-1zM340,388h1v1h-1zM342,388h1v1h-1zM344,388h1v1h-1zM346,388h1v1h-1zM348,388h1v1h-1zM350,388h1v1h-1zM352,388h1v1h-1zM354,388h1v1h-1zM356,388h1v1h-1zM358,388h1v1h-1zM360,388h1v1h-1zM362,388h1v1h-1zM364,388h1v1h-1zM366,388h1v1h-1zM368,388h1v1h-1zM370,388h1v1h-1zM372,388h1v1h-1zM374,388h1v1h-1zM376,388h1v1h-1zM378,388h1v1h-1zM380,388h1v1h-1zM382,388h1v1h-1zM384,388h1v1h-1zM386,388h1v1h-1zM388,388h1v1h-1zM390,388h1v1h-1zM392,388h1v1h-1zM394,388h1v1h-1zM396,388h1v1h-1zM398,388h1v1h-1zM400,388h1v1h-1zM402,388h1v1h-1zM404,388h1v1h-1zM406,388h1v1h-1zM408,388h1v1h-1zM410,388h1v1h-1zM412,388h1v1h-1zM414,388h1v1h-1zM416,388h1v1h-1zM418,388h1v1h-1zM420,388h1v1h-1zM422,388h1v1h-1zM424,388h1v1h-1zM426,388h1v1h-1zM428,388h1v1h-1zM430,388h1v1h-1zM432,388h1v1h-1zM434,388h1v1h-1zM436,388h1v1h-1zM438,388h1v1h-1zM440,388h1v1h-1zM442,388h1v1h-1zM444,388h1v1h-1zM446,388h1v1h-1zM448,388h1v1h-1zM450,388h1v1h-1zM452,388h1v1h-1zM454,388h1v1h-1zM456,388h1v1h-1zM458,388h1v1h-1zM460,388h1v1h-1zM462,388h1v1h-1zM464,388h1v1h-1zM466,388h1v1h-1zM468,388h1v1h-1zM470,388h1v1h-1zM472,388h1v1h-1zM474,388h1v1h-1zM476,388h1v1h-1zM478,388h1v1h-1zM480,388h1v1h-1zM482,388h1v1h-1zM484,388h1v1h-1zM486,388h1v1h-1zM488,388h1v1h-1zM490,388h1v1h-1zM492,388h1v1h-1zM494,388h1v1h-1zM496,388h1v1h-1zM498,388h1v1h-1zM500,388h1v1h-1zM502,388h1v1h-1zM504,388h1v1h-1zM506,388h1v1h-1zM508,388h1v1h-1zM510,388h1v1h-1zM512,388h1v1h-1zM514,388h1v1h-1zM516,388h1v1h-1zM518,388h1v1h-1zM520,388h1v1h-1zM522,388h1v1h-1zM524,388h1v1h-1zM526,388h1v1h-1zM528,388h1v1h-1zM530,388h1v1h-1zM532,388h1v1h-1zM534,388h1v1h-1zM536,388h1v1h-1zM538,388h1v1h-1zM540,388h1v1h-1zM542,388h1v1h-1zM544,388h1v1h-1zM546,388h1v1h-1zM548,388h1v1h-1zM550,388h1v1h-1zM552,388h1v1h-1zM554,388h1v1h-1zM556,388h1v1h-1zM558,388h1v1h-1zM560,388h1v1h-1zM562,388h1v1h-1zM564,388h1v1h-1zM566,388h1v1h-1zM568,388h1v1h-1zM570,388h1v1h-1zM572,388h1v1h-1zM574,388h1v1h-1zM576,388h1v1h-1zM578,388h1v1h-1zM580,388h1v1h-1zM582,388h1v1h-1zM584,388h1v1h-1zM586,388h1v1h-1zM588,388h1v1h-1zM590,388h1v1h-1zM592,388h1v1h-1zM594,388h1v1h-1zM596,388h1v1h-1zM598,388h1v1h-1zM600,388h1v1h-1zM602,388h1v1h-1zM604,388h1v1h-1zM606,388h1v1h-1zM608,388h1v1h-1zM610,388h1v1h-1zM612,388h1v1h-1zM614,388h1v1h-1zM616,388h1v1h-1zM618,388h1v1h-1zM620,388h1v1h-1zM622,388h1v1h-1zM624,388h1v1h-1zM626,388h1v1h-1zM628,388h1v1h-1zM630,388h1v1h-1zM632,388h1v1h-1zM634,388h1v1h-1zM636,388h1v1h-1zM638,388h1v1h-1zM640,388h1v1h-1zM642,388h1v1h-1zM644,388h1v1h-1zM646,388h1v1h-1zM648,388h1v1h-1zM650,388h1v1h-1zM652,388h1v1h-1zM654,388h1v1h-1zM656,388h1v1h-1zM658,388h1v1h-1zM660,388h1v1h-1zM662,388h1v1h-1zM664,388h1v1h-1zM666,388h1v1h-1zM668,388h1v1h-1zM670,388h1v1h-1zM672,388h1v1h-1zM674,388h1v1h-1zM676,388h1v1h-1zM678,388h1v1h-1zM680,388h1v1h-1zM682,388h1v1h-1z" fill="#565656"/>
<path d="M94,39h1v4h-1z M94,433h1v4h-1z M104,39h1v4h-1z M104,433h1v4h-1z M114,39h1v4h-1z M114,433h1v4h-1z M124,39h1v4h-1z M124,433h1v4h-1z M134,39h1v4h-1z M134,433h1v4h-1z M144,39h1v4h-1z M144,433h1v4h-1z M154,39h1v4h-1z M154,433h1v4h-1z M164,39h1v4h-1z M164,433h1v4h-1z M174,39h1v4h-1z M174,433h1v4h-1z M184,39h1v4h-1z M184,433h1v4h-1z M194,39h1v4h-1z M194,433h1v4h-1z M204,39h1v4h-1z M204,433h1v4h-1z M214,39h1v4h-1z M214,433h1v4h-1z M224,39h1v4h-1z M224,433h1v4h-1z M234,39h1v4h-1z M234,433h1v4h-1z M244,39h1v4h-1z M244,433h1v4h-1z M254,39h1v4h-1z M254,433h1v4h-1z M264,39h1v4h-1z M264,433h1v4h-1z M274,39h1v4h-1z M274,433h1v4h-1z M284,39h1v4h-1z M284,433h1v4h-1z M294,39h1v4h-1z M294,433h1v4h-1z M304,39h1v4h-1z M304,433h1v4h-1z M314,39h1v4h-1z M314,433h1v4h-1z M324,39h1v4h-1z M324,433h1v4h-1z M334,39h1v4h-1z M334,433h1v4h-1z M344,39h1v4h-1z M344,433h1v4h-1z M354,39h1v4h-1z M354,433h1v4h-1z M364,39h1v4h-1z M364,433h1v4h-1z M374,39h1v4h-1z M374,433h1v4h-1z M384,39h1v4h-1z M384,433h1v4h-1z M394,39h1v4h-1z M394,433h1v4h-1z M404,39h1v4h-1z M404,433h1v4h-1z M414,39h1v4h-1z M414,433h1v4h-1z M424,39h1v4h-1z M424,433h1v4h-1z M434,39h1v4h-1z M434,433h1v4h-1z M444,39h1v4h-1z M444,433h1v4h-1z M454,39h1v4h-1z M454,433h1v4h-1z M464,39h1v4h-1z M464,433h1v4h-1z M474,39h1v4h-1z M474,433h1v4h-1z M484,39h1v4h-1z M484,433h1v4h-1z M494,39h1v4h-1z M494,433h1v4h-1z M504,39h1v4h-1z M504,433h1v4h-1z M514,39h1v4h-1z M514,433h1v4h-1z M524,39h1v4h-1z M524,433h1v4h-1z M534,39h1v4h-1z M534,433h1v4h-1z M544,39h1v4h-1z M544,433h1v4h-1z M554,39h1v4h-1z M554,433h1v4h-1z M564,39h1v4h-1z M564,433h1v4h-1z M574,39h1v4h-1z M574,433h1v4h-1z M584,39h1v4h-1z M584,433h1v4h-1z M594,39h1v4h-1z M594,433h1v4h-1z M604,39h1v4h-1z M604,433h1v4h-1z M614,39h1v4h-1z M614,433h1v4h-1z M624,39h1v4h-1z M624,433h1v4h-1z M634,39h1v4h-1z M634,433h1v4h-1z M644,39h1v4h-1z M644,433h1v4h-1z M654,39h1v4h-1z M654,433h1v4h-1z M664,39h1v4h-1z M664,433h1v4h-1z M674,39h1v4h-1z M674,433h1v4h-1z M85,48h4v1h-4z M680,48h4v1h-4z M85,58h4v1h-4z M680,58h4v1h-4z M85,68h4v1h-4z M680,68h4v1h-4z M85,78h4v1h-4z M680,78h4v1h-4z M85,88h4v1h-4z M680,88h4v1h-4z M85,98h4v1h-4z M680,98h4v1h-4z M85,108h4v1h-4z M680,108h4v1h-4z M85,118h4v1h-4z M680,118h4v1h-4z M85,128h4v1h-4z M680,128h4v1h-4z M85,138h4v1h-4z M680,138h4v1h-4z M85,148h4v1h-4z M680,148h4v1h-4z M85,158h4v1h-4z M680,158h4v1h-4z M85,168h4v1h-4z M680,168h4v1h-4z M85,178h4v1h-4z M680,178h4v1h-4z M85,188h4v1h-4z M680,188h4v1h-4z M85,198h4v1h-4z M680,198h4v1h-4z M85,208h4v1h-4z M680,208h4v1h-4z M85,218h4v1h-4z M680,218h4v1h-4z M85,228h4v1h-4z M680,228h4v1h-4z M85,238h4v1h-4z M680,238h4v1h-4z M85,248h4v1h-4z M680,248h4v1h-4z M85,258h4v1h-4z M680,258h4v1h-4z M85,268h4v1h-4z M680,268h4v1h-4z M85,278h4v1h-4z M680,278h4v1h-4z M85,288h4v1h-4z M680,288h4v1h-4z M85,298h4v1h-4z M680,298h4v1h-4z M85,308h4v1h-4z M680,308h4v1h-4z M85,318h4v1h-4z M680,318h4v1h-4z M85,328h4v1h-4z M680,328h4v1h-4z M85,338h4v1h-4z M680,338h4v1h-4z M85,348h4v1h-4z M680,348h4v1h-4z M85,358h4v1h-4z M680,358h4v1h-4z M85,368h4v1h-4z M680,368h4v1h-4z M85,378h4v1h-4z M680,378h4v1h-4z M85,388h4v1h-4z M680,388h4v1h-4z M85,398h4v1h-4z M680,398h4v1h-4z M85,408h4v1h-4z M680,408h4v1h-4z M85,418h4v1h-4z M680,418h4v1h-4z M85,428h4v1h-4z M680,428h4v1h-4z" fill="#5a5a5a"/>
<path d="M94,236h1v5h-1z M104,236h1v5h-1z M114,236h1v5h-1z M124,236h1v5h-1z M134,236h1v5h-1z M144,236h1v5h-1z M154,236h1v5h-1z M164,236h1v5h-1z M174,236h1v5h-1z M184,236h1v5h-1z M194,236h1v5h-1z M204,236h1v5h-1z M214,236h1v5h-1z M224,236h1v5h-1z M234,236h1v5h-1z M244,236h1v5h-1z M254,236h1v5h-1z M264,236h1v5h-1z M274,236h1v5h-1z M284,236h1v5h-1z M294,236h1v5h-1z M304,236h1v5h-1z M314,236h1v5h-1z M324,236h1v5h-1z M334,236h1v5h-1z M344,236h1v5h-1z M354,236h1v5h-1z M364,236h1v5h-1z M374,236h1v5h-1z M384,236h1v5h-1z M394,236h1v5h-1z M404,236h1v5h-1z M414,236h1v5h-1z M424,236h1v5h-1z M434,236h1v5h-1z M444,236h1v5h-1z M454,236h1v5h-1z M464,236h1v5h-1z M474,236h1v5h-1z M484,236h1v5h-1z M494,236h1v5h-1z M504,236h1v5h-1z M514,236h1v5h-1z M524,236h1v5h-1z M534,236h1v5h-1z M544,236h1v5h-1z M554,236h1v5h-1z M564,236h1v5h-1z M574,236h1v5h-1z M584,236h1v5h-1z M594,236h1v5h-1z M604,236h1v5h-1z M614,236h1v5h-1z M624,236h1v5h-1z M634,236h1v5h-1z M644,236h1v5h-1z M654,236h1v5h-1z M664,236h1v5h-1z M674,236h1v5h-1z M382,48h5v1h-5z M382,58h5v1h-5z M382,68h5v1h-5z M382,78h5v1h-5z M382,88h5v1h-5z M382,98h5v1h-5z M382,108h5v1h-5z M382,118h5v1h-5z M382,128h5v1h-5z M382,138h5v1h-5z M382,148h5v1h-5z M382,158h5v1h-5z M382,168h5v1h-5z M382,178h5v1h-5z M382,188h5v1h-5z M382,198h5v1h-5z M382,208h5v1h-5z M382,218h5v1h-5z M382,228h5v1h-5z M382,238h5v1h-5z M382,248h5v1h-5z M382,258h5v1h-5z M382,268h5v1h-5z M382,278h5v1h-5z M382,288h5v1h-5z M382,298h5v1h-5z M382,308h5v1h-5z M382,318h5v1h-5z M382,328h5v1h-5z M382,338h5v1h-5z M382,348h5v1h-5z M382,358h5v1h-5z M382,368h5v1h-5z M382,378h5v1h-5z M382,388h5v1h-5z M382,398h5v1h-5z M382,408h5v1h-5z M382,418h5v1h-5z M382,428h5v1h-5z" fill="#505050"/>
<path d="M84.5,38.5 H684.5 V437.5 H84.5 Z" fill="none" stroke="#686868" stroke-width="1"/>
</svg>

<svg class="a" style="left:0;top:0" width="800" height="480">
<path fill="#2f3002" d="M293 284h1v1h-1zM298 281h1v3h-1zM321 280h1v1h-1zM326 282h1v1h-1zM343 282h1v2h-1zM376 280h1v1h-1zM642 283h1v1h-1zM651 282h1v1h-1z"/>
<path fill="#464904" d="M89 251h1v15h-1zM92 207h1v6h-1zM92 219h1v6h-1zM92 239h1v17h-1zM92 258h1v8h-1zM92 267h1v1h-1zM101 225h1v1h-1zM101 227h1v11h-1zM101 239h1v1h-1zM101 264h1v2h-1zM101 268h1v1h-1zM110 207h1v24h-1zM110 235h1v9h-1zM110 245h1v10h-1zM110 260h1v1h-1zM110 262h1v3h-1zM110 269h1v1h-1zM113 212h1v26h-1zM119 210h1v7h-1zM119 226h1v2h-1zM119 229h1v2h-1zM119 238h1v12h-1zM119 252h1v1h-1zM119 255h1v11h-1zM123 200h1v2h-1zM126 201h1v1h-1zM127 200h1v2h-1zM128 201h1v1h-1zM129 201h1v1h-1zM137 200h1v2h-1zM138 201h1v1h-1zM139 201h1v1h-1zM140 201h1v1h-1zM141 201h1v1h-1zM144 201h1v1h-1zM145 201h1v1h-1zM149 201h1v1h-1zM152 201h1v1h-1zM153 201h1v1h-1zM154 200h1v2h-1zM164 201h1v1h-1zM165 200h1v2h-1zM171 200h1v2h-1zM174 201h1v1h-1zM179 200h1v2h-1zM180 201h1v1h-1zM181 200h1v2h-1zM183 201h1v1h-1zM184 201h1v1h-1zM186 201h1v1h-1zM187 200h1v2h-1zM192 201h1v1h-1zM197 201h1v1h-1zM203 200h1v2h-1zM204 200h1v2h-1zM205 201h1v1h-1zM208 201h1v1h-1zM215 270h1v1h-1zM219 270h1v1h-1zM225 269h1v2h-1zM226 270h1v1h-1zM227 270h1v1h-1zM228 270h1v1h-1zM229 270h1v1h-1zM231 270h1v1h-1zM233 269h1v2h-1zM235 269h1v2h-1zM237 270h1v1h-1zM238 270h1v1h-1zM239 270h1v1h-1zM243 269h1v2h-1zM244 270h1v1h-1zM246 269h1v2h-1zM247 270h1v1h-1zM284 280h1v3h-1zM285 212h1v26h-1zM285 244h1v3h-1zM285 248h1v8h-1zM285 257h1v9h-1zM285 276h1v4h-1zM285 281h1v1h-1zM293 276h1v8h-1zM293 285h1v1h-1zM294 212h1v18h-1zM294 235h1v8h-1zM294 244h1v22h-1zM294 276h1v7h-1zM296 242h1v12h-1zM296 255h1v11h-1zM298 278h1v3h-1zM302 224h1v40h-1zM303 212h1v1h-1zM303 220h1v1h-1zM303 222h1v5h-1zM303 234h1v1h-1zM303 239h1v1h-1zM303 242h1v6h-1zM303 255h1v2h-1zM303 276h1v3h-1zM303 281h1v1h-1zM312 222h1v5h-1zM312 235h1v1h-1zM312 237h1v3h-1zM312 242h1v1h-1zM312 251h1v2h-1zM312 264h1v2h-1zM312 276h1v4h-1zM312 282h1v2h-1zM313 225h1v19h-1zM313 252h1v14h-1zM321 209h1v1h-1zM321 211h1v1h-1zM321 213h1v10h-1zM321 236h1v14h-1zM321 252h1v4h-1zM321 261h1v5h-1zM321 276h1v4h-1zM322 253h1v11h-1zM322 276h1v10h-1zM326 220h1v2h-1zM326 264h1v2h-1zM326 276h1v6h-1zM327 285h1v1h-1zM330 210h1v8h-1zM330 238h1v15h-1zM330 258h1v8h-1zM330 276h1v6h-1zM339 209h1v3h-1zM339 216h1v1h-1zM339 218h1v9h-1zM339 234h1v2h-1zM339 255h1v3h-1zM339 280h1v1h-1zM343 265h1v1h-1zM343 276h1v6h-1zM343 284h1v1h-1zM349 206h1v3h-1zM349 210h1v6h-1zM349 226h1v10h-1zM349 238h1v1h-1zM349 240h1v6h-1zM349 247h1v1h-1zM349 250h1v1h-1zM349 252h1v7h-1zM349 264h1v2h-1zM349 276h1v3h-1zM358 211h1v4h-1zM358 219h1v16h-1zM358 240h1v3h-1zM358 244h1v7h-1zM358 254h1v1h-1zM358 257h1v9h-1zM358 280h1v1h-1zM365 279h1v3h-1zM367 206h1v5h-1zM367 230h1v3h-1zM367 234h1v9h-1zM367 250h1v1h-1zM367 264h1v2h-1zM367 280h1v1h-1zM372 243h1v10h-1zM372 276h1v1h-1zM373 232h1v1h-1zM373 240h1v6h-1zM373 250h1v8h-1zM373 259h1v1h-1zM373 278h1v3h-1zM376 206h1v1h-1zM376 208h1v1h-1zM376 214h1v21h-1zM376 236h1v30h-1zM376 276h1v4h-1zM385 211h1v55h-1zM385 276h1v3h-1zM394 213h1v1h-1zM394 216h1v3h-1zM394 222h1v1h-1zM394 224h1v3h-1zM394 229h1v1h-1zM394 244h1v1h-1zM394 257h1v1h-1zM394 259h1v1h-1zM394 262h1v2h-1zM394 276h1v3h-1zM403 212h1v1h-1zM403 216h1v2h-1zM403 219h1v3h-1zM403 223h1v2h-1zM403 229h1v1h-1zM403 233h1v6h-1zM403 242h1v1h-1zM403 244h1v2h-1zM403 249h1v1h-1zM403 254h1v7h-1zM403 264h1v1h-1zM403 277h1v1h-1zM412 216h1v1h-1zM412 218h1v13h-1zM412 234h1v1h-1zM412 241h1v8h-1zM412 255h1v4h-1zM412 260h1v6h-1zM421 207h1v13h-1zM421 224h1v42h-1zM430 207h1v6h-1zM430 214h1v13h-1zM430 235h1v31h-1zM432 229h1v13h-1zM432 243h1v8h-1zM432 252h1v13h-1zM440 207h1v1h-1zM440 209h1v1h-1zM440 211h1v4h-1zM440 216h1v3h-1zM440 221h1v4h-1zM440 226h1v1h-1zM440 231h1v1h-1zM440 233h1v2h-1zM440 237h1v2h-1zM440 244h1v13h-1zM445 201h1v1h-1zM456 201h1v1h-1zM460 200h1v2h-1zM461 201h1v1h-1zM465 200h1v2h-1zM471 200h1v2h-1zM472 201h1v1h-1zM475 201h1v1h-1zM476 201h1v1h-1zM477 201h1v1h-1zM482 200h1v2h-1zM483 200h1v2h-1zM485 201h1v1h-1zM487 201h1v1h-1zM491 201h1v1h-1zM496 201h1v1h-1zM499 201h1v1h-1zM501 201h1v1h-1zM502 200h1v2h-1zM507 200h1v2h-1zM510 201h1v1h-1zM516 201h1v1h-1zM521 200h1v2h-1zM531 201h1v1h-1zM533 201h1v1h-1zM536 269h1v2h-1zM538 270h1v1h-1zM541 270h1v1h-1zM543 269h1v2h-1zM545 269h1v2h-1zM552 269h1v2h-1zM554 270h1v1h-1zM555 270h1v1h-1zM556 270h1v1h-1zM558 269h1v2h-1zM560 269h1v2h-1zM561 269h1v2h-1zM563 269h1v2h-1zM564 269h1v2h-1zM565 270h1v1h-1zM566 270h1v1h-1zM605 215h1v18h-1zM605 236h1v1h-1zM605 239h1v5h-1zM605 281h1v1h-1zM614 211h1v4h-1zM614 242h1v16h-1zM614 259h1v7h-1zM614 279h1v4h-1zM618 235h1v5h-1zM618 246h1v17h-1zM618 264h1v2h-1zM618 276h1v7h-1zM624 213h1v5h-1zM624 225h1v7h-1zM624 233h1v2h-1zM624 242h1v19h-1zM624 279h1v2h-1zM626 237h1v29h-1zM633 220h1v1h-1zM633 222h1v7h-1zM633 232h1v1h-1zM633 234h1v1h-1zM633 236h1v1h-1zM633 255h1v10h-1zM633 276h1v5h-1zM635 276h1v1h-1zM635 278h1v1h-1zM635 280h1v3h-1zM642 211h1v2h-1zM642 214h1v2h-1zM642 222h1v1h-1zM642 224h1v1h-1zM642 227h1v7h-1zM642 236h1v14h-1zM642 251h1v1h-1zM642 262h1v3h-1zM642 276h1v7h-1zM651 209h1v8h-1zM651 226h1v12h-1zM651 239h1v1h-1zM651 241h1v1h-1zM651 244h1v1h-1zM651 248h1v10h-1zM651 262h1v1h-1zM651 276h1v6h-1zM660 210h1v41h-1zM660 252h1v8h-1zM660 264h1v2h-1zM660 276h1v1h-1zM660 281h1v1h-1zM663 228h1v3h-1zM663 243h1v1h-1zM663 246h1v5h-1zM663 264h1v2h-1zM663 276h1v7h-1zM669 206h1v9h-1zM669 217h1v31h-1zM669 250h1v1h-1zM669 252h1v14h-1zM669 276h1v5h-1zM677 211h1v13h-1zM678 205h1v1h-1zM678 211h1v11h-1zM678 230h1v2h-1zM678 233h1v9h-1zM678 243h1v8h-1zM678 259h1v7h-1zM678 278h1v1h-1zM681 278h1v4h-1z"/>
<path fill="#5e6105" d="M84 279h1v1h-1zM87 277h1v2h-1zM88 280h1v1h-1zM89 222h1v3h-1zM89 266h1v4h-1zM90 211h1v6h-1zM90 230h1v1h-1zM90 235h1v8h-1zM90 245h1v6h-1zM90 255h1v3h-1zM91 214h1v1h-1zM91 226h1v6h-1zM92 213h1v6h-1zM92 225h1v14h-1zM92 256h1v2h-1zM92 266h1v1h-1zM92 268h1v2h-1zM93 220h1v3h-1zM95 230h1v1h-1zM95 241h1v2h-1zM95 244h1v1h-1zM95 263h1v1h-1zM96 226h1v2h-1zM96 230h1v1h-1zM96 239h1v4h-1zM96 263h1v2h-1zM96 271h1v1h-1zM97 207h1v5h-1zM97 218h1v1h-1zM97 222h1v2h-1zM97 225h1v1h-1zM97 232h1v1h-1zM97 249h1v3h-1zM97 257h1v9h-1zM101 207h1v18h-1zM101 226h1v1h-1zM101 238h1v1h-1zM101 240h1v24h-1zM101 266h1v2h-1zM102 220h1v3h-1zM103 207h1v2h-1zM104 216h1v1h-1zM105 211h1v1h-1zM105 240h1v1h-1zM105 242h1v1h-1zM105 260h1v3h-1zM106 207h1v4h-1zM106 240h1v7h-1zM106 257h1v2h-1zM107 209h1v3h-1zM107 214h1v5h-1zM107 230h1v8h-1zM107 247h1v6h-1zM107 254h1v4h-1zM107 259h1v2h-1zM108 213h1v4h-1zM108 235h1v2h-1zM108 246h1v1h-1zM108 254h1v3h-1zM109 213h1v3h-1zM109 259h1v1h-1zM109 261h1v2h-1zM110 231h1v4h-1zM110 244h1v1h-1zM110 255h1v5h-1zM110 261h1v1h-1zM110 265h1v1h-1zM110 267h1v2h-1zM111 209h1v6h-1zM111 242h1v1h-1zM111 244h1v2h-1zM111 247h1v2h-1zM111 261h1v4h-1zM112 240h1v1h-1zM112 242h1v11h-1zM113 238h1v10h-1zM114 214h1v1h-1zM114 217h1v1h-1zM114 222h1v1h-1zM114 253h1v1h-1zM114 256h1v7h-1zM115 236h1v3h-1zM115 253h1v1h-1zM116 207h1v1h-1zM116 222h1v1h-1zM116 224h1v12h-1zM116 237h1v1h-1zM116 239h1v1h-1zM116 244h1v6h-1zM116 256h1v8h-1zM117 217h1v1h-1zM118 218h1v6h-1zM118 235h1v6h-1zM119 207h1v3h-1zM119 217h1v9h-1zM119 228h1v1h-1zM119 231h1v7h-1zM119 250h1v2h-1zM119 253h1v2h-1zM119 266h1v3h-1zM120 248h1v1h-1zM121 207h1v4h-1zM121 213h1v1h-1zM122 221h1v3h-1zM130 201h1v1h-1zM136 200h1v2h-1zM146 201h1v1h-1zM162 201h1v1h-1zM163 201h1v1h-1zM166 201h1v1h-1zM175 200h1v2h-1zM178 201h1v1h-1zM190 200h1v2h-1zM193 201h1v1h-1zM198 201h1v1h-1zM212 201h1v1h-1zM214 206h1v65h-1zM218 269h1v2h-1zM220 270h1v1h-1zM223 270h1v1h-1zM240 270h1v1h-1zM242 270h1v1h-1zM265 256h1v7h-1zM265 264h1v1h-1zM281 212h1v1h-1zM281 214h1v1h-1zM281 265h1v1h-1zM282 237h1v1h-1zM282 252h1v1h-1zM282 277h1v1h-1zM283 215h1v1h-1zM283 217h1v1h-1zM283 242h1v5h-1zM283 276h1v4h-1zM283 283h1v3h-1zM284 220h1v6h-1zM284 227h1v7h-1zM284 237h1v2h-1zM284 240h1v3h-1zM284 249h1v8h-1zM284 258h1v1h-1zM284 265h1v1h-1zM284 276h1v4h-1zM285 238h1v6h-1zM285 247h1v1h-1zM285 256h1v1h-1zM285 266h1v10h-1zM285 280h1v1h-1zM286 222h1v4h-1zM286 242h1v2h-1zM286 246h1v1h-1zM286 254h1v2h-1zM286 283h1v3h-1zM287 244h1v1h-1zM287 247h1v3h-1zM288 244h1v6h-1zM288 282h1v3h-1zM289 280h1v2h-1zM290 282h1v1h-1zM290 284h1v1h-1zM291 221h1v9h-1zM291 261h1v3h-1zM291 280h1v1h-1zM292 214h1v4h-1zM292 250h1v1h-1zM292 253h1v2h-1zM292 263h1v3h-1zM293 250h1v5h-1zM293 266h1v10h-1zM294 230h1v5h-1zM294 243h1v1h-1zM294 266h1v1h-1zM294 270h1v1h-1zM294 272h1v4h-1zM294 283h1v2h-1zM295 282h1v3h-1zM296 220h1v1h-1zM296 254h1v1h-1zM296 266h1v1h-1zM296 278h1v1h-1zM296 280h1v3h-1zM297 256h1v3h-1zM297 280h1v3h-1zM298 271h1v1h-1zM298 273h1v5h-1zM300 229h1v3h-1zM300 282h1v2h-1zM301 221h1v6h-1zM301 264h1v2h-1zM301 281h1v1h-1zM301 283h1v1h-1zM302 216h1v6h-1zM302 264h1v2h-1zM302 268h1v3h-1zM302 283h1v2h-1zM303 213h1v7h-1zM303 221h1v1h-1zM303 227h1v7h-1zM303 235h1v4h-1zM303 240h1v2h-1zM303 248h1v7h-1zM303 257h1v13h-1zM303 272h1v4h-1zM303 279h1v2h-1zM303 283h1v1h-1zM304 280h1v1h-1zM307 247h1v1h-1zM307 249h1v1h-1zM307 259h1v1h-1zM307 279h1v5h-1zM308 212h1v2h-1zM308 230h1v1h-1zM308 277h1v1h-1zM308 283h1v3h-1zM309 240h1v1h-1zM309 249h1v1h-1zM309 251h1v8h-1zM309 261h1v5h-1zM309 281h1v3h-1zM310 251h1v1h-1zM310 261h1v1h-1zM310 282h1v3h-1zM311 283h1v1h-1zM311 285h1v1h-1zM312 213h1v9h-1zM312 227h1v8h-1zM312 236h1v1h-1zM312 240h1v2h-1zM312 243h1v8h-1zM312 253h1v11h-1zM312 266h1v5h-1zM312 275h1v1h-1zM312 280h1v2h-1zM312 284h1v2h-1zM313 244h1v8h-1zM313 266h1v7h-1zM314 250h1v3h-1zM314 280h1v3h-1zM315 281h1v3h-1zM316 251h1v3h-1zM316 283h1v2h-1zM317 214h1v1h-1zM317 263h1v2h-1zM317 285h1v1h-1zM318 229h1v1h-1zM319 221h1v2h-1zM319 238h1v6h-1zM319 279h1v1h-1zM319 281h1v3h-1zM320 248h1v5h-1zM321 210h1v1h-1zM321 212h1v1h-1zM321 223h1v13h-1zM321 250h1v2h-1zM321 256h1v5h-1zM321 272h1v4h-1zM321 281h1v2h-1zM322 243h1v3h-1zM322 247h1v1h-1zM322 252h1v1h-1zM322 264h1v2h-1zM322 268h1v8h-1zM323 219h1v1h-1zM323 223h1v2h-1zM323 246h1v5h-1zM323 257h1v1h-1zM323 281h1v3h-1zM324 227h1v5h-1zM324 238h1v7h-1zM324 248h1v6h-1zM324 276h1v1h-1zM324 278h1v1h-1zM324 283h1v3h-1zM325 228h1v1h-1zM325 237h1v2h-1zM325 276h1v1h-1zM325 280h1v3h-1zM326 210h1v10h-1zM326 222h1v4h-1zM326 235h1v10h-1zM326 257h1v4h-1zM326 266h1v10h-1zM327 213h1v2h-1zM327 216h1v1h-1zM327 230h1v1h-1zM327 249h1v5h-1zM327 277h1v1h-1zM327 280h1v5h-1zM328 215h1v9h-1zM328 225h1v1h-1zM328 229h1v2h-1zM328 232h1v1h-1zM328 234h1v1h-1zM328 236h1v2h-1zM328 258h1v2h-1zM328 261h1v1h-1zM328 276h1v1h-1zM328 281h1v3h-1zM329 231h1v2h-1zM330 209h1v1h-1zM330 218h1v20h-1zM330 253h1v5h-1zM330 266h1v10h-1zM330 282h1v1h-1zM332 220h1v1h-1zM332 255h1v2h-1zM333 221h1v10h-1zM333 244h1v1h-1zM333 247h1v7h-1zM333 262h1v1h-1zM333 281h1v3h-1zM334 210h1v4h-1zM334 215h1v5h-1zM334 229h1v8h-1zM334 238h1v1h-1zM334 249h1v8h-1zM334 264h1v1h-1zM334 281h1v3h-1zM335 217h1v4h-1zM335 282h1v2h-1zM336 282h1v3h-1zM337 245h1v2h-1zM339 212h1v4h-1zM339 217h1v1h-1zM339 227h1v7h-1zM339 236h1v19h-1zM339 258h1v8h-1zM339 276h1v4h-1zM340 210h1v2h-1zM342 219h1v1h-1zM342 223h1v1h-1zM342 258h1v1h-1zM342 281h1v3h-1zM343 262h1v3h-1zM343 266h1v10h-1zM344 211h1v5h-1zM344 243h1v1h-1zM344 262h1v1h-1zM344 281h1v3h-1zM345 242h1v1h-1zM345 244h1v2h-1zM345 277h1v4h-1zM347 280h1v1h-1zM348 216h1v1h-1zM348 240h1v1h-1zM348 244h1v2h-1zM348 262h1v4h-1zM349 204h1v2h-1zM349 209h1v1h-1zM349 216h1v10h-1zM349 236h1v2h-1zM349 239h1v1h-1zM349 246h1v1h-1zM349 248h1v2h-1zM349 251h1v1h-1zM349 259h1v5h-1zM349 266h1v10h-1zM349 279h1v2h-1zM350 249h1v5h-1zM350 280h1v3h-1zM353 278h1v1h-1zM354 236h1v1h-1zM354 251h1v4h-1zM354 264h1v2h-1zM354 278h1v2h-1zM355 218h1v1h-1zM355 227h1v1h-1zM355 230h1v1h-1zM355 232h1v1h-1zM355 237h1v5h-1zM355 258h1v7h-1zM355 279h1v3h-1zM356 214h1v5h-1zM356 246h1v1h-1zM356 260h1v4h-1zM356 265h1v1h-1zM356 282h1v1h-1zM357 208h1v13h-1zM357 224h1v2h-1zM357 227h1v3h-1zM357 236h1v1h-1zM357 239h1v2h-1zM357 242h1v5h-1zM357 248h1v14h-1zM357 276h1v2h-1zM357 280h1v3h-1zM358 208h1v3h-1zM358 215h1v4h-1zM358 235h1v5h-1zM358 243h1v1h-1zM358 251h1v3h-1zM358 255h1v2h-1zM358 266h1v14h-1zM359 279h1v3h-1zM360 277h1v1h-1zM360 279h1v3h-1zM361 216h1v9h-1zM361 227h1v1h-1zM361 235h1v5h-1zM361 277h1v6h-1zM362 276h1v5h-1zM363 278h1v2h-1zM365 253h1v13h-1zM365 273h1v6h-1zM367 204h1v2h-1zM367 211h1v19h-1zM367 233h1v1h-1zM367 243h1v7h-1zM367 251h1v13h-1zM367 266h1v6h-1zM367 274h1v1h-1zM367 276h1v4h-1zM368 277h1v3h-1zM369 248h1v1h-1zM369 250h1v3h-1zM369 277h1v3h-1zM370 280h1v1h-1zM371 278h1v1h-1zM372 230h1v13h-1zM372 253h1v13h-1zM372 267h1v9h-1zM372 280h1v3h-1zM373 222h1v1h-1zM373 233h1v7h-1zM373 246h1v4h-1zM373 258h1v1h-1zM373 260h1v6h-1zM373 270h1v2h-1zM373 274h1v4h-1zM374 237h1v1h-1zM374 279h1v2h-1zM375 233h1v1h-1zM375 237h1v7h-1zM375 251h1v1h-1zM375 278h1v2h-1zM376 204h1v2h-1zM376 207h1v1h-1zM376 209h1v5h-1zM376 235h1v1h-1zM376 266h1v10h-1zM376 281h1v2h-1zM377 241h1v1h-1zM377 256h1v4h-1zM377 276h1v1h-1zM378 228h1v2h-1zM378 246h1v7h-1zM378 278h1v2h-1zM379 280h1v2h-1zM381 256h1v3h-1zM381 260h1v1h-1zM382 217h1v4h-1zM382 279h1v3h-1zM384 213h1v6h-1zM384 221h1v1h-1zM384 228h1v5h-1zM384 276h1v4h-1zM385 205h1v6h-1zM385 266h1v10h-1zM386 222h1v2h-1zM386 278h1v2h-1zM387 262h1v2h-1zM387 265h1v1h-1zM390 246h1v1h-1zM391 227h1v1h-1zM392 280h1v2h-1zM393 228h1v1h-1zM394 208h1v5h-1zM394 214h1v2h-1zM394 219h1v3h-1zM394 223h1v1h-1zM394 227h1v2h-1zM394 230h1v14h-1zM394 245h1v12h-1zM394 258h1v1h-1zM394 260h1v2h-1zM394 264h1v2h-1zM394 272h1v4h-1zM395 263h1v2h-1zM395 277h1v3h-1zM396 207h1v3h-1zM396 211h1v3h-1zM396 216h1v1h-1zM396 219h1v8h-1zM396 240h1v7h-1zM396 248h1v1h-1zM396 277h1v3h-1zM397 214h1v1h-1zM397 233h1v1h-1zM397 248h1v5h-1zM397 264h1v2h-1zM397 279h1v3h-1zM398 225h1v4h-1zM398 234h1v9h-1zM398 244h1v1h-1zM398 257h1v7h-1zM398 265h1v1h-1zM398 276h1v6h-1zM399 205h1v3h-1zM399 210h1v4h-1zM399 229h1v1h-1zM399 232h1v5h-1zM399 255h1v4h-1zM399 263h1v3h-1zM399 277h1v3h-1zM400 205h1v5h-1zM400 212h1v9h-1zM400 223h1v1h-1zM400 232h1v5h-1zM400 279h1v3h-1zM401 254h1v1h-1zM401 256h1v2h-1zM401 276h1v5h-1zM403 207h1v5h-1zM403 213h1v3h-1zM403 218h1v1h-1zM403 222h1v1h-1zM403 225h1v4h-1zM403 230h1v3h-1zM403 239h1v3h-1zM403 243h1v1h-1zM403 246h1v3h-1zM403 250h1v4h-1zM403 261h1v3h-1zM403 265h1v3h-1zM403 269h1v1h-1zM403 276h1v1h-1zM404 278h1v3h-1zM405 281h1v2h-1zM406 279h1v3h-1zM407 257h1v4h-1zM407 276h1v1h-1zM407 278h1v2h-1zM408 279h1v1h-1zM409 222h1v1h-1zM409 224h1v6h-1zM409 263h1v3h-1zM410 220h1v5h-1zM410 261h1v1h-1zM411 221h1v2h-1zM411 232h1v7h-1zM411 246h1v1h-1zM411 253h1v3h-1zM412 207h1v9h-1zM412 217h1v1h-1zM412 231h1v3h-1zM412 235h1v6h-1zM412 249h1v6h-1zM412 259h1v1h-1zM412 266h1v4h-1zM413 220h1v1h-1zM416 219h1v1h-1zM416 236h1v5h-1zM417 251h1v1h-1zM418 207h1v6h-1zM418 265h1v1h-1zM419 222h1v3h-1zM419 239h1v1h-1zM419 241h1v1h-1zM419 243h1v2h-1zM419 248h1v2h-1zM419 257h1v1h-1zM420 208h1v6h-1zM420 221h1v5h-1zM420 231h1v6h-1zM420 243h1v4h-1zM420 253h1v11h-1zM421 220h1v4h-1zM421 266h1v4h-1zM422 244h1v1h-1zM422 249h1v11h-1zM423 209h1v1h-1zM423 212h1v3h-1zM423 253h1v2h-1zM424 224h1v1h-1zM424 243h1v2h-1zM424 257h1v1h-1zM425 218h1v7h-1zM425 226h1v1h-1zM425 243h1v1h-1zM425 257h1v3h-1zM426 239h1v5h-1zM429 219h1v3h-1zM429 261h1v1h-1zM430 213h1v1h-1zM430 227h1v8h-1zM430 266h1v2h-1zM431 210h1v2h-1zM431 228h1v5h-1zM431 251h1v6h-1zM432 220h1v2h-1zM432 228h1v1h-1zM432 242h1v1h-1zM432 251h1v1h-1zM432 265h1v1h-1zM433 207h1v6h-1zM433 235h1v2h-1zM433 238h1v2h-1zM434 252h1v1h-1zM434 259h1v6h-1zM436 250h1v4h-1zM437 236h1v1h-1zM437 254h1v9h-1zM438 208h1v2h-1zM438 211h1v1h-1zM438 232h1v4h-1zM438 237h1v1h-1zM438 239h1v4h-1zM438 261h1v4h-1zM440 208h1v1h-1zM440 210h1v1h-1zM440 215h1v1h-1zM440 219h1v2h-1zM440 225h1v1h-1zM440 227h1v4h-1zM440 232h1v1h-1zM440 235h1v2h-1zM440 239h1v5h-1zM440 257h1v9h-1zM440 267h1v1h-1zM442 210h1v1h-1zM442 249h1v1h-1zM442 251h1v2h-1zM451 201h1v1h-1zM454 201h1v1h-1zM459 201h1v1h-1zM478 201h1v1h-1zM486 201h1v1h-1zM488 200h1v2h-1zM489 201h1v1h-1zM494 200h1v2h-1zM498 201h1v1h-1zM500 201h1v1h-1zM504 200h1v2h-1zM505 201h1v1h-1zM506 201h1v1h-1zM512 201h1v1h-1zM515 201h1v1h-1zM522 201h1v1h-1zM523 201h1v1h-1zM532 201h1v1h-1zM534 201h1v1h-1zM535 206h1v65h-1zM547 269h1v2h-1zM548 270h1v1h-1zM549 270h1v1h-1zM557 270h1v1h-1zM576 265h1v1h-1zM594 258h1v1h-1zM594 260h1v1h-1zM602 221h1v5h-1zM602 238h1v5h-1zM602 282h1v3h-1zM603 230h1v2h-1zM603 281h1v3h-1zM604 242h1v2h-1zM604 284h1v1h-1zM605 212h1v3h-1zM605 233h1v3h-1zM605 237h1v2h-1zM605 244h1v22h-1zM605 267h1v2h-1zM605 274h1v1h-1zM605 276h1v5h-1zM608 237h1v4h-1zM608 280h1v1h-1zM609 283h1v1h-1zM610 215h1v3h-1zM611 281h1v1h-1zM612 250h1v1h-1zM612 252h1v1h-1zM612 280h1v3h-1zM613 281h1v1h-1zM614 215h1v27h-1zM614 258h1v1h-1zM614 266h1v3h-1zM614 272h1v1h-1zM614 276h1v3h-1zM614 283h1v2h-1zM615 283h1v1h-1zM616 226h1v6h-1zM616 279h1v1h-1zM616 283h1v2h-1zM617 282h1v2h-1zM618 240h1v6h-1zM618 263h1v1h-1zM618 266h1v10h-1zM619 225h1v2h-1zM619 250h1v1h-1zM619 265h1v1h-1zM619 282h1v4h-1zM620 236h1v3h-1zM620 262h1v1h-1zM621 219h1v1h-1zM621 221h1v1h-1zM621 238h1v3h-1zM621 259h1v7h-1zM621 281h1v3h-1zM622 240h1v2h-1zM622 280h1v1h-1zM623 212h1v1h-1zM623 254h1v5h-1zM623 280h1v4h-1zM624 218h1v7h-1zM624 232h1v1h-1zM624 235h1v7h-1zM624 261h1v5h-1zM624 267h1v12h-1zM624 281h1v2h-1zM625 214h1v9h-1zM625 236h1v10h-1zM625 253h1v13h-1zM625 281h1v3h-1zM626 212h1v6h-1zM626 220h1v2h-1zM626 224h1v1h-1zM626 266h1v1h-1zM626 276h1v5h-1zM626 282h1v3h-1zM627 254h1v1h-1zM627 256h1v2h-1zM627 261h1v2h-1zM627 276h1v1h-1zM628 283h1v2h-1zM633 212h1v8h-1zM633 221h1v1h-1zM633 229h1v3h-1zM633 233h1v1h-1zM633 235h1v1h-1zM633 237h1v18h-1zM633 265h1v1h-1zM633 271h1v5h-1zM634 258h1v2h-1zM634 281h1v2h-1zM635 255h1v3h-1zM635 267h1v9h-1zM635 277h1v1h-1zM635 279h1v1h-1zM636 211h1v1h-1zM636 218h1v2h-1zM636 222h1v2h-1zM636 239h1v2h-1zM636 248h1v1h-1zM636 265h1v1h-1zM636 281h1v1h-1zM637 253h1v1h-1zM637 264h1v2h-1zM637 283h1v3h-1zM638 235h1v1h-1zM639 213h1v1h-1zM640 282h1v1h-1zM641 216h1v5h-1zM641 225h1v6h-1zM641 233h1v2h-1zM641 237h1v2h-1zM641 277h1v5h-1zM641 283h1v3h-1zM642 213h1v1h-1zM642 216h1v6h-1zM642 223h1v1h-1zM642 225h1v2h-1zM642 234h1v2h-1zM642 250h1v1h-1zM642 252h1v10h-1zM642 265h1v4h-1zM642 272h1v1h-1zM642 275h1v1h-1zM642 284h1v2h-1zM643 231h1v3h-1zM643 280h1v3h-1zM645 276h1v1h-1zM647 231h1v7h-1zM647 280h1v3h-1zM648 214h1v1h-1zM648 250h1v7h-1zM649 222h1v2h-1zM649 225h1v2h-1zM649 280h1v3h-1zM650 231h1v1h-1zM650 234h1v1h-1zM651 217h1v9h-1zM651 238h1v1h-1zM651 240h1v1h-1zM651 242h1v2h-1zM651 245h1v3h-1zM651 258h1v4h-1zM651 263h1v13h-1zM651 283h1v2h-1zM652 280h1v3h-1zM653 231h1v3h-1zM653 250h1v1h-1zM653 253h1v1h-1zM654 238h1v1h-1zM654 281h1v2h-1zM655 244h1v2h-1zM655 247h1v1h-1zM655 253h1v1h-1zM655 255h1v1h-1zM655 257h1v1h-1zM655 283h1v3h-1zM656 250h1v1h-1zM656 258h1v1h-1zM656 263h1v3h-1zM656 276h1v2h-1zM656 280h1v3h-1zM657 225h1v10h-1zM657 238h1v2h-1zM657 241h1v2h-1zM657 283h1v3h-1zM658 213h1v2h-1zM658 216h1v3h-1zM658 251h1v2h-1zM659 212h1v1h-1zM659 243h1v1h-1zM660 251h1v1h-1zM660 260h1v4h-1zM660 266h1v10h-1zM660 277h1v4h-1zM660 282h1v2h-1zM661 276h1v3h-1zM661 282h1v3h-1zM662 220h1v7h-1zM662 229h1v1h-1zM662 239h1v3h-1zM662 276h1v7h-1zM663 218h1v2h-1zM663 231h1v12h-1zM663 244h1v2h-1zM663 251h1v13h-1zM663 266h1v3h-1zM663 271h1v5h-1zM664 229h1v1h-1zM664 260h1v1h-1zM664 281h1v1h-1zM665 260h1v6h-1zM665 283h1v3h-1zM666 208h1v5h-1zM666 232h1v3h-1zM666 244h1v6h-1zM666 280h1v3h-1zM667 217h1v1h-1zM667 224h1v5h-1zM667 230h1v1h-1zM667 241h1v6h-1zM667 248h1v1h-1zM667 250h1v2h-1zM667 279h1v3h-1zM668 230h1v1h-1zM668 247h1v1h-1zM668 259h1v3h-1zM669 204h1v2h-1zM669 215h1v2h-1zM669 248h1v2h-1zM669 251h1v1h-1zM669 266h1v10h-1zM669 281h1v1h-1zM670 209h1v1h-1zM670 241h1v2h-1zM670 244h1v1h-1zM670 255h1v7h-1zM670 263h1v1h-1zM670 276h1v2h-1zM670 279h1v3h-1zM671 218h1v1h-1zM671 249h1v2h-1zM671 253h1v1h-1zM671 258h1v8h-1zM671 280h1v1h-1zM672 209h1v5h-1zM672 237h1v2h-1zM672 240h1v3h-1zM672 277h1v3h-1zM673 208h1v3h-1zM673 212h1v2h-1zM673 225h1v8h-1zM673 245h1v3h-1zM673 257h1v6h-1zM673 279h1v4h-1zM674 206h1v5h-1zM674 213h1v4h-1zM674 232h1v2h-1zM674 237h1v1h-1zM674 248h1v2h-1zM674 278h1v3h-1zM675 242h1v3h-1zM675 261h1v5h-1zM675 279h1v3h-1zM676 224h1v1h-1zM676 255h1v6h-1zM676 277h1v3h-1zM677 205h1v6h-1zM677 224h1v1h-1zM677 255h1v1h-1zM677 278h1v3h-1zM678 203h1v2h-1zM678 206h1v5h-1zM678 222h1v8h-1zM678 232h1v1h-1zM678 242h1v1h-1zM678 251h1v8h-1zM678 266h1v5h-1zM678 274h1v4h-1zM678 279h1v2h-1zM679 280h1v1h-1zM680 225h1v1h-1zM681 265h1v1h-1zM682 229h1v4h-1zM682 237h1v5h-1zM682 249h1v4h-1zM682 254h1v1h-1zM682 256h1v8h-1zM682 277h1v1h-1zM683 211h1v1h-1zM683 213h1v1h-1zM683 218h1v1h-1zM683 221h1v4h-1zM683 226h1v2h-1zM683 248h1v10h-1zM683 282h1v1h-1zM684 215h1v1h-1zM684 218h1v1h-1zM684 279h1v1h-1zM684 281h1v1h-1z"/>
<path fill="#767a07" d="M84 206h1v2h-1zM84 211h1v49h-1zM84 264h1v2h-1zM84 276h1v3h-1zM84 280h1v2h-1zM85 211h1v47h-1zM85 276h1v5h-1zM86 208h1v6h-1zM86 220h1v1h-1zM86 222h1v1h-1zM86 228h1v23h-1zM86 262h1v4h-1zM86 276h1v4h-1zM87 206h1v7h-1zM87 217h1v19h-1zM87 243h1v1h-1zM87 245h1v1h-1zM87 248h1v16h-1zM87 265h1v1h-1zM87 276h1v1h-1zM87 279h1v1h-1zM88 206h1v26h-1zM88 236h1v21h-1zM88 258h1v8h-1zM88 276h1v4h-1zM89 207h1v15h-1zM89 225h1v26h-1zM90 207h1v4h-1zM90 217h1v13h-1zM90 231h1v4h-1zM90 243h1v2h-1zM90 251h1v4h-1zM90 258h1v8h-1zM90 267h1v3h-1zM91 207h1v7h-1zM91 215h1v11h-1zM91 232h1v34h-1zM91 267h1v3h-1zM92 205h1v2h-1zM93 207h1v6h-1zM93 214h1v6h-1zM93 223h1v8h-1zM93 232h1v17h-1zM93 257h1v9h-1zM93 270h1v1h-1zM94 207h1v16h-1zM94 225h1v16h-1zM94 242h1v8h-1zM94 251h1v6h-1zM94 262h1v4h-1zM94 267h1v3h-1zM95 207h1v6h-1zM95 215h1v1h-1zM95 218h1v12h-1zM95 231h1v10h-1zM95 243h1v1h-1zM95 245h1v18h-1zM95 264h1v2h-1zM95 267h1v3h-1zM96 207h1v19h-1zM96 228h1v2h-1zM96 231h1v8h-1zM96 243h1v20h-1zM96 265h1v1h-1zM96 267h1v4h-1zM97 212h1v6h-1zM97 219h1v3h-1zM97 224h1v1h-1zM97 226h1v6h-1zM97 233h1v16h-1zM97 252h1v5h-1zM97 266h1v5h-1zM98 207h1v23h-1zM98 232h1v11h-1zM98 244h1v1h-1zM98 252h1v14h-1zM98 267h1v5h-1zM99 208h1v27h-1zM99 241h1v2h-1zM99 246h1v15h-1zM99 263h1v1h-1zM100 207h1v1h-1zM100 210h1v16h-1zM100 235h1v17h-1zM100 253h1v1h-1zM100 257h1v2h-1zM100 271h1v1h-1zM101 269h1v2h-1zM102 207h1v13h-1zM102 223h1v26h-1zM102 250h1v12h-1zM102 264h1v2h-1zM102 267h1v3h-1zM103 209h1v8h-1zM103 220h1v1h-1zM103 224h1v19h-1zM103 245h1v21h-1zM103 268h1v2h-1zM104 207h1v9h-1zM104 217h1v5h-1zM104 225h1v1h-1zM104 227h1v16h-1zM104 246h1v20h-1zM104 267h1v4h-1zM105 207h1v4h-1zM105 212h1v19h-1zM105 232h1v8h-1zM105 241h1v1h-1zM105 243h1v17h-1zM105 263h1v4h-1zM105 268h1v3h-1zM106 211h1v29h-1zM106 247h1v10h-1zM106 259h1v7h-1zM107 207h1v2h-1zM107 212h1v2h-1zM107 219h1v11h-1zM107 238h1v9h-1zM107 253h1v1h-1zM107 258h1v1h-1zM107 261h1v5h-1zM107 268h1v4h-1zM108 207h1v6h-1zM108 217h1v18h-1zM108 237h1v9h-1zM108 247h1v7h-1zM108 257h1v10h-1zM108 269h1v3h-1zM109 207h1v6h-1zM109 216h1v43h-1zM109 260h1v1h-1zM109 263h1v3h-1zM109 267h1v3h-1zM110 205h1v2h-1zM110 266h1v1h-1zM110 270h1v2h-1zM111 207h1v2h-1zM111 215h1v27h-1zM111 243h1v1h-1zM111 246h1v1h-1zM111 249h1v12h-1zM111 265h1v1h-1zM111 267h1v3h-1zM112 207h1v33h-1zM112 241h1v1h-1zM112 253h1v13h-1zM112 270h1v1h-1zM113 207h1v5h-1zM113 248h1v1h-1zM113 250h1v3h-1zM113 256h1v8h-1zM113 267h1v3h-1zM114 207h1v7h-1zM114 215h1v2h-1zM114 218h1v4h-1zM114 223h1v30h-1zM114 254h1v2h-1zM114 263h1v3h-1zM114 269h1v3h-1zM115 207h1v7h-1zM115 220h1v11h-1zM115 232h1v4h-1zM115 239h1v14h-1zM115 254h1v12h-1zM115 271h1v2h-1zM116 208h1v14h-1zM116 223h1v1h-1zM116 236h1v1h-1zM116 238h1v1h-1zM116 240h1v4h-1zM116 250h1v6h-1zM116 264h1v2h-1zM116 269h1v1h-1zM116 271h1v1h-1zM117 207h1v10h-1zM117 218h1v48h-1zM117 267h1v3h-1zM118 207h1v11h-1zM118 224h1v11h-1zM118 241h1v27h-1zM118 269h1v3h-1zM119 203h1v1h-1zM119 269h1v2h-1zM120 207h1v41h-1zM120 249h1v17h-1zM120 267h1v3h-1zM121 211h1v2h-1zM121 214h1v33h-1zM121 249h1v17h-1zM122 212h1v9h-1zM122 224h1v31h-1zM122 256h1v8h-1zM122 265h1v1h-1zM199 220h1v1h-1zM200 217h1v1h-1zM254 258h1v8h-1zM256 257h1v9h-1zM261 258h1v3h-1zM265 263h1v1h-1zM265 265h1v1h-1zM274 255h1v11h-1zM281 210h1v2h-1zM281 213h1v1h-1zM281 215h1v30h-1zM281 248h1v17h-1zM281 276h1v3h-1zM281 281h1v3h-1zM282 214h1v23h-1zM282 238h1v14h-1zM282 253h1v3h-1zM282 257h1v1h-1zM282 260h1v6h-1zM282 268h1v2h-1zM282 276h1v1h-1zM282 278h1v7h-1zM283 212h1v3h-1zM283 216h1v1h-1zM283 218h1v24h-1zM283 247h1v25h-1zM283 273h1v3h-1zM283 280h1v3h-1zM284 211h1v9h-1zM284 226h1v1h-1zM284 234h1v3h-1zM284 239h1v1h-1zM284 243h1v6h-1zM284 257h1v1h-1zM284 259h1v6h-1zM284 268h1v1h-1zM284 275h1v1h-1zM285 282h1v2h-1zM286 214h1v8h-1zM286 226h1v16h-1zM286 244h1v2h-1zM286 247h1v7h-1zM286 256h1v10h-1zM286 271h1v1h-1zM286 276h1v4h-1zM286 281h1v2h-1zM287 213h1v31h-1zM287 245h1v2h-1zM287 250h1v16h-1zM287 276h1v7h-1zM288 211h1v23h-1zM288 240h1v4h-1zM288 250h1v16h-1zM288 276h1v6h-1zM289 212h1v10h-1zM289 223h1v17h-1zM289 242h1v1h-1zM289 246h1v20h-1zM289 276h1v4h-1zM289 282h1v1h-1zM290 213h1v11h-1zM290 229h1v13h-1zM290 243h1v21h-1zM290 276h1v6h-1zM290 283h1v1h-1zM291 213h1v8h-1zM291 230h1v31h-1zM291 264h1v2h-1zM291 276h1v4h-1zM291 281h1v2h-1zM292 211h1v3h-1zM292 218h1v32h-1zM292 251h1v2h-1zM292 255h1v8h-1zM292 266h1v1h-1zM292 276h1v6h-1zM292 283h1v3h-1zM293 211h1v39h-1zM293 255h1v11h-1zM294 267h1v3h-1zM294 271h1v1h-1zM295 214h1v52h-1zM295 273h1v2h-1zM295 276h1v6h-1zM296 211h1v9h-1zM296 221h1v21h-1zM296 274h1v4h-1zM296 279h1v1h-1zM297 210h1v11h-1zM297 229h1v4h-1zM297 234h1v10h-1zM297 251h1v5h-1zM297 259h1v7h-1zM297 276h1v4h-1zM298 214h1v22h-1zM298 237h1v12h-1zM298 253h1v6h-1zM298 263h1v4h-1zM298 272h1v1h-1zM299 218h1v22h-1zM299 244h1v18h-1zM299 272h1v3h-1zM299 276h1v2h-1zM299 283h1v3h-1zM300 214h1v6h-1zM300 227h1v2h-1zM300 232h1v3h-1zM300 238h1v22h-1zM300 265h1v1h-1zM300 276h1v3h-1zM300 280h1v2h-1zM301 210h1v11h-1zM301 227h1v25h-1zM301 253h1v7h-1zM301 261h1v3h-1zM301 266h1v2h-1zM301 276h1v5h-1zM301 282h1v1h-1zM302 212h1v4h-1zM302 222h1v2h-1zM302 266h1v2h-1zM302 278h1v5h-1zM302 285h1v1h-1zM303 270h1v2h-1zM303 282h1v1h-1zM304 212h1v3h-1zM304 216h1v2h-1zM304 219h1v19h-1zM304 239h1v9h-1zM304 251h1v15h-1zM304 269h1v1h-1zM304 271h1v1h-1zM304 276h1v4h-1zM304 281h1v2h-1zM305 216h1v5h-1zM305 232h1v20h-1zM305 254h1v1h-1zM305 256h1v10h-1zM305 269h1v1h-1zM305 282h1v3h-1zM306 212h1v12h-1zM306 226h1v14h-1zM306 241h1v13h-1zM306 255h1v3h-1zM306 260h1v1h-1zM306 265h1v1h-1zM306 276h1v9h-1zM307 211h1v15h-1zM307 227h1v20h-1zM307 248h1v1h-1zM307 250h1v9h-1zM307 260h1v6h-1zM307 276h1v3h-1zM307 284h1v2h-1zM308 210h1v2h-1zM308 214h1v16h-1zM308 231h1v35h-1zM308 267h1v1h-1zM308 276h1v1h-1zM308 278h1v5h-1zM309 208h1v7h-1zM309 218h1v15h-1zM309 234h1v1h-1zM309 236h1v4h-1zM309 241h1v8h-1zM309 250h1v1h-1zM309 259h1v2h-1zM309 266h1v1h-1zM309 276h1v5h-1zM310 212h1v16h-1zM310 230h1v2h-1zM310 233h1v2h-1zM310 237h1v2h-1zM310 241h1v10h-1zM310 252h1v9h-1zM310 262h1v4h-1zM310 276h1v6h-1zM311 214h1v16h-1zM311 231h1v1h-1zM311 234h1v5h-1zM311 242h1v12h-1zM311 255h1v11h-1zM311 276h1v7h-1zM311 284h1v1h-1zM312 211h1v1h-1zM312 271h1v4h-1zM313 210h1v15h-1zM313 276h1v8h-1zM314 208h1v42h-1zM314 253h1v6h-1zM314 260h1v1h-1zM314 263h1v3h-1zM314 268h1v1h-1zM314 276h1v4h-1zM315 211h1v6h-1zM315 219h1v1h-1zM315 221h1v4h-1zM315 226h1v2h-1zM315 229h1v33h-1zM315 265h1v1h-1zM315 276h1v5h-1zM316 210h1v9h-1zM316 227h1v24h-1zM316 254h1v11h-1zM316 276h1v7h-1zM316 285h1v1h-1zM317 212h1v2h-1zM317 215h1v11h-1zM317 239h1v24h-1zM317 265h1v1h-1zM317 283h1v2h-1zM318 212h1v1h-1zM318 214h1v15h-1zM318 230h1v10h-1zM318 251h1v15h-1zM318 276h1v10h-1zM319 210h1v11h-1zM319 223h1v15h-1zM319 244h1v12h-1zM319 257h1v9h-1zM319 268h1v3h-1zM319 276h1v3h-1zM319 280h1v1h-1zM320 212h1v36h-1zM320 253h1v13h-1zM320 270h1v2h-1zM320 277h1v6h-1zM321 266h1v6h-1zM322 210h1v33h-1zM322 246h1v1h-1zM322 248h1v4h-1zM322 266h1v2h-1zM323 209h1v10h-1zM323 220h1v3h-1zM323 225h1v21h-1zM323 251h1v6h-1zM323 258h1v8h-1zM323 270h1v11h-1zM324 207h1v1h-1zM324 209h1v18h-1zM324 232h1v6h-1zM324 245h1v3h-1zM324 254h1v12h-1zM324 268h1v1h-1zM324 273h1v1h-1zM324 275h1v1h-1zM324 277h1v1h-1zM324 279h1v4h-1zM325 212h1v16h-1zM325 229h1v8h-1zM325 239h1v19h-1zM325 260h1v6h-1zM325 275h1v1h-1zM325 277h1v3h-1zM326 208h1v2h-1zM326 226h1v9h-1zM326 245h1v12h-1zM326 261h1v3h-1zM327 208h1v5h-1zM327 215h1v1h-1zM327 217h1v13h-1zM327 231h1v14h-1zM327 246h1v3h-1zM327 254h1v12h-1zM327 275h1v2h-1zM327 278h1v2h-1zM328 209h1v6h-1zM328 224h1v1h-1zM328 226h1v3h-1zM328 231h1v1h-1zM328 233h1v1h-1zM328 235h1v1h-1zM328 238h1v20h-1zM328 260h1v1h-1zM328 262h1v4h-1zM328 277h1v4h-1zM329 209h1v22h-1zM329 233h1v33h-1zM329 276h1v8h-1zM330 283h1v1h-1zM331 209h1v12h-1zM331 224h1v1h-1zM331 227h1v6h-1zM331 235h1v8h-1zM331 244h1v1h-1zM331 252h1v12h-1zM331 276h1v2h-1zM331 279h1v4h-1zM332 209h1v11h-1zM332 221h1v34h-1zM332 257h1v9h-1zM332 276h1v7h-1zM333 208h1v13h-1zM333 231h1v13h-1zM333 245h1v2h-1zM333 254h1v8h-1zM333 263h1v3h-1zM333 271h1v10h-1zM334 208h1v2h-1zM334 214h1v1h-1zM334 220h1v9h-1zM334 237h1v1h-1zM334 239h1v10h-1zM334 257h1v7h-1zM334 265h1v1h-1zM334 270h1v1h-1zM334 272h1v9h-1zM335 207h1v10h-1zM335 221h1v25h-1zM335 247h1v19h-1zM335 267h1v2h-1zM335 276h1v6h-1zM336 210h1v12h-1zM336 229h1v10h-1zM336 241h1v1h-1zM336 244h1v13h-1zM336 258h1v1h-1zM336 260h1v6h-1zM336 267h1v2h-1zM336 276h1v6h-1zM337 209h1v16h-1zM337 238h1v7h-1zM337 247h1v7h-1zM337 261h1v1h-1zM337 263h1v1h-1zM337 276h1v2h-1zM337 281h1v3h-1zM338 209h1v1h-1zM338 219h1v11h-1zM338 240h1v1h-1zM338 242h1v6h-1zM338 249h1v1h-1zM338 252h1v5h-1zM338 259h1v2h-1zM338 264h1v2h-1zM338 276h1v2h-1zM338 280h1v4h-1zM339 266h1v10h-1zM339 281h1v2h-1zM340 208h1v2h-1zM340 212h1v4h-1zM340 226h1v5h-1zM340 237h1v8h-1zM340 246h1v2h-1zM340 252h1v1h-1zM340 254h1v3h-1zM340 259h1v7h-1zM340 276h1v3h-1zM340 280h1v3h-1zM341 210h1v2h-1zM341 218h1v20h-1zM341 240h1v8h-1zM341 249h1v17h-1zM341 276h1v1h-1zM341 278h1v7h-1zM342 210h1v9h-1zM342 220h1v3h-1zM342 224h1v20h-1zM342 245h1v1h-1zM342 247h1v11h-1zM342 259h1v7h-1zM342 276h1v5h-1zM343 208h1v12h-1zM343 222h1v40h-1zM344 209h1v2h-1zM344 216h1v21h-1zM344 238h1v5h-1zM344 244h1v18h-1zM344 263h1v5h-1zM344 277h1v1h-1zM344 280h1v1h-1zM345 206h1v36h-1zM345 243h1v1h-1zM345 246h1v12h-1zM345 260h1v6h-1zM345 276h1v1h-1zM346 209h1v6h-1zM346 218h1v8h-1zM346 232h1v1h-1zM346 234h1v8h-1zM346 243h1v1h-1zM346 245h1v21h-1zM346 276h1v7h-1zM347 208h1v16h-1zM347 225h1v11h-1zM347 239h1v12h-1zM347 253h1v5h-1zM347 262h1v4h-1zM347 276h1v4h-1zM348 204h1v12h-1zM348 217h1v14h-1zM348 232h1v8h-1zM348 241h1v3h-1zM348 246h1v10h-1zM348 260h1v2h-1zM348 266h1v2h-1zM348 274h1v1h-1zM348 276h1v6h-1zM350 208h1v41h-1zM350 254h1v10h-1zM350 276h1v4h-1zM351 207h1v4h-1zM351 217h1v5h-1zM351 225h1v2h-1zM351 233h1v4h-1zM351 243h1v7h-1zM351 255h1v1h-1zM351 257h1v2h-1zM351 276h1v5h-1zM352 208h1v7h-1zM352 222h1v20h-1zM352 244h1v5h-1zM352 254h1v12h-1zM352 276h1v7h-1zM353 205h1v28h-1zM353 237h1v17h-1zM353 255h1v11h-1zM353 268h1v3h-1zM353 276h1v2h-1zM353 279h1v1h-1zM354 207h1v29h-1zM354 237h1v14h-1zM354 255h1v9h-1zM354 266h1v2h-1zM354 270h1v2h-1zM354 274h1v4h-1zM354 280h1v1h-1zM355 206h1v12h-1zM355 219h1v8h-1zM355 228h1v2h-1zM355 231h1v1h-1zM355 233h1v4h-1zM355 242h1v16h-1zM355 265h1v6h-1zM355 276h1v3h-1zM356 208h1v6h-1zM356 219h1v6h-1zM356 226h1v20h-1zM356 247h1v13h-1zM356 264h1v1h-1zM356 266h1v3h-1zM356 277h1v5h-1zM357 206h1v2h-1zM357 221h1v3h-1zM357 226h1v1h-1zM357 230h1v6h-1zM357 237h1v2h-1zM357 241h1v1h-1zM357 247h1v1h-1zM357 262h1v4h-1zM357 271h1v2h-1zM357 274h1v2h-1zM357 278h1v2h-1zM358 206h1v2h-1zM358 281h1v2h-1zM359 205h1v7h-1zM359 214h1v13h-1zM359 228h1v14h-1zM359 245h1v21h-1zM359 276h1v3h-1zM360 204h1v1h-1zM360 206h1v19h-1zM360 229h1v8h-1zM360 238h1v6h-1zM360 248h1v1h-1zM360 250h1v16h-1zM360 276h1v1h-1zM360 278h1v1h-1zM361 208h1v8h-1zM361 225h1v2h-1zM361 228h1v7h-1zM361 240h1v26h-1zM361 274h1v1h-1zM361 276h1v1h-1zM362 208h1v58h-1zM362 273h1v3h-1zM363 208h1v11h-1zM363 220h1v6h-1zM363 230h1v19h-1zM363 250h1v1h-1zM363 252h1v4h-1zM363 259h1v1h-1zM363 261h1v5h-1zM363 276h1v2h-1zM364 207h1v23h-1zM364 236h1v18h-1zM364 259h1v2h-1zM364 264h1v2h-1zM364 276h1v4h-1zM365 206h1v12h-1zM365 224h1v2h-1zM365 233h1v1h-1zM365 237h1v1h-1zM365 244h1v9h-1zM365 266h1v7h-1zM366 208h1v3h-1zM366 212h1v2h-1zM366 216h1v1h-1zM366 218h1v1h-1zM366 220h1v14h-1zM366 235h1v31h-1zM366 276h1v6h-1zM367 272h1v2h-1zM367 275h1v1h-1zM367 281h1v2h-1zM368 205h1v18h-1zM368 225h1v1h-1zM368 227h1v33h-1zM368 276h1v1h-1zM369 206h1v19h-1zM369 226h1v15h-1zM369 242h1v1h-1zM369 244h1v4h-1zM369 249h1v1h-1zM369 253h1v13h-1zM369 267h1v1h-1zM369 276h1v1h-1zM370 208h1v54h-1zM370 263h1v1h-1zM370 277h1v3h-1zM371 209h1v2h-1zM371 212h1v46h-1zM371 260h1v6h-1zM371 267h1v5h-1zM371 276h1v2h-1zM371 279h1v2h-1zM372 207h1v8h-1zM372 218h1v1h-1zM372 226h1v4h-1zM372 266h1v1h-1zM372 277h1v3h-1zM373 206h1v16h-1zM373 223h1v9h-1zM373 266h1v4h-1zM373 272h1v2h-1zM374 206h1v1h-1zM374 213h1v5h-1zM374 220h1v2h-1zM374 223h1v3h-1zM374 227h1v10h-1zM374 238h1v5h-1zM374 246h1v1h-1zM374 248h1v4h-1zM374 254h1v13h-1zM374 276h1v3h-1zM375 205h1v28h-1zM375 234h1v3h-1zM375 244h1v7h-1zM375 252h1v14h-1zM375 269h1v1h-1zM375 276h1v2h-1zM377 208h1v9h-1zM377 218h1v15h-1zM377 237h1v4h-1zM377 242h1v14h-1zM377 260h1v6h-1zM377 274h1v2h-1zM377 277h1v5h-1zM378 207h1v11h-1zM378 219h1v1h-1zM378 224h1v4h-1zM378 230h1v16h-1zM378 253h1v13h-1zM378 276h1v2h-1zM379 206h1v2h-1zM379 209h1v13h-1zM379 224h1v35h-1zM379 265h1v1h-1zM379 273h1v7h-1zM379 282h1v1h-1zM380 204h1v12h-1zM380 218h1v6h-1zM380 226h1v27h-1zM380 264h1v2h-1zM380 276h1v4h-1zM381 211h1v12h-1zM381 224h1v1h-1zM381 226h1v7h-1zM381 234h1v22h-1zM381 259h1v1h-1zM381 261h1v5h-1zM381 277h1v3h-1zM382 206h1v11h-1zM382 221h1v3h-1zM382 225h1v1h-1zM382 228h1v2h-1zM382 232h1v8h-1zM382 241h1v1h-1zM382 244h1v20h-1zM382 276h1v3h-1zM383 206h1v2h-1zM383 218h1v2h-1zM383 229h1v2h-1zM383 232h1v6h-1zM383 240h1v10h-1zM383 251h1v14h-1zM383 279h1v3h-1zM384 207h1v6h-1zM384 219h1v2h-1zM384 222h1v6h-1zM384 233h1v33h-1zM385 279h1v2h-1zM386 207h1v15h-1zM386 224h1v13h-1zM386 239h1v27h-1zM386 276h1v2h-1zM387 211h1v34h-1zM387 246h1v16h-1zM387 264h1v1h-1zM387 276h1v1h-1zM387 279h1v3h-1zM388 209h1v40h-1zM388 250h1v16h-1zM388 276h1v7h-1zM389 214h1v35h-1zM389 257h1v5h-1zM389 265h1v1h-1zM389 276h1v5h-1zM390 207h1v5h-1zM390 213h1v1h-1zM390 215h1v14h-1zM390 232h1v14h-1zM390 247h1v19h-1zM390 279h1v1h-1zM390 281h1v1h-1zM391 207h1v3h-1zM391 216h1v11h-1zM391 228h1v5h-1zM391 236h1v30h-1zM391 276h1v2h-1zM391 279h1v3h-1zM392 206h1v4h-1zM392 214h1v35h-1zM392 250h1v4h-1zM392 256h1v3h-1zM392 260h1v6h-1zM392 276h1v4h-1zM392 282h1v1h-1zM393 204h1v8h-1zM393 218h1v10h-1zM393 229h1v3h-1zM393 243h1v8h-1zM393 256h1v1h-1zM393 259h1v6h-1zM393 276h1v5h-1zM394 206h1v2h-1zM394 266h1v6h-1zM394 279h1v2h-1zM395 208h1v4h-1zM395 218h1v5h-1zM395 224h1v1h-1zM395 229h1v2h-1zM395 232h1v4h-1zM395 237h1v20h-1zM395 260h1v3h-1zM395 265h1v1h-1zM395 276h1v1h-1zM396 205h1v2h-1zM396 210h1v1h-1zM396 214h1v2h-1zM396 217h1v2h-1zM396 227h1v13h-1zM396 247h1v1h-1zM396 249h1v18h-1zM396 270h1v1h-1zM396 274h1v3h-1zM397 206h1v8h-1zM397 215h1v12h-1zM397 228h1v5h-1zM397 234h1v14h-1zM397 253h1v11h-1zM397 266h1v5h-1zM397 276h1v3h-1zM398 208h1v17h-1zM398 229h1v5h-1zM398 243h1v1h-1zM398 245h1v12h-1zM398 264h1v1h-1zM398 266h1v10h-1zM399 203h1v2h-1zM399 208h1v2h-1zM399 214h1v15h-1zM399 230h1v2h-1zM399 237h1v18h-1zM399 259h1v4h-1zM399 266h1v3h-1zM399 276h1v1h-1zM400 204h1v1h-1zM400 210h1v2h-1zM400 221h1v2h-1zM400 224h1v8h-1zM400 237h1v27h-1zM400 265h1v1h-1zM400 270h1v4h-1zM400 276h1v3h-1zM401 207h1v22h-1zM401 233h1v21h-1zM401 255h1v1h-1zM401 258h1v8h-1zM401 272h1v4h-1zM402 204h1v4h-1zM402 212h1v16h-1zM402 235h1v1h-1zM402 240h1v2h-1zM402 245h1v1h-1zM402 257h1v11h-1zM402 276h1v5h-1zM403 205h1v2h-1zM403 268h1v1h-1zM403 270h1v6h-1zM403 278h1v2h-1zM404 203h1v46h-1zM404 262h1v4h-1zM404 276h1v2h-1zM405 208h1v9h-1zM405 221h1v7h-1zM405 233h1v2h-1zM405 236h1v30h-1zM405 276h1v5h-1zM406 205h1v14h-1zM406 223h1v38h-1zM406 263h1v3h-1zM406 276h1v3h-1zM407 205h1v12h-1zM407 218h1v17h-1zM407 236h1v10h-1zM407 248h1v9h-1zM407 261h1v4h-1zM407 274h1v2h-1zM407 277h1v1h-1zM407 280h1v1h-1zM408 207h1v29h-1zM408 242h1v24h-1zM408 271h1v2h-1zM408 276h1v3h-1zM408 280h1v2h-1zM409 207h1v15h-1zM409 223h1v1h-1zM409 230h1v19h-1zM409 251h1v12h-1zM409 266h1v4h-1zM410 207h1v13h-1zM410 225h1v36h-1zM410 262h1v4h-1zM410 268h1v2h-1zM411 207h1v3h-1zM411 211h1v10h-1zM411 223h1v9h-1zM411 239h1v7h-1zM411 247h1v6h-1zM411 256h1v10h-1zM411 268h1v3h-1zM412 270h1v2h-1zM413 207h1v1h-1zM413 211h1v1h-1zM413 214h1v6h-1zM413 221h1v6h-1zM413 228h1v2h-1zM413 233h1v2h-1zM413 236h1v18h-1zM413 256h1v10h-1zM414 207h1v13h-1zM414 221h1v10h-1zM414 232h1v2h-1zM414 235h1v16h-1zM414 256h1v10h-1zM414 270h1v2h-1zM415 207h1v19h-1zM415 228h1v10h-1zM415 244h1v8h-1zM415 254h1v12h-1zM415 271h1v2h-1zM416 207h1v12h-1zM416 220h1v16h-1zM416 241h1v24h-1zM416 267h1v1h-1zM416 269h1v1h-1zM417 207h1v19h-1zM417 228h1v23h-1zM417 252h1v14h-1zM418 213h1v5h-1zM418 219h1v46h-1zM418 267h1v3h-1zM419 207h1v15h-1zM419 225h1v14h-1zM419 240h1v1h-1zM419 242h1v1h-1zM419 245h1v3h-1zM419 250h1v7h-1zM419 258h1v8h-1zM419 267h1v3h-1zM420 207h1v1h-1zM420 214h1v7h-1zM420 226h1v5h-1zM420 237h1v6h-1zM420 247h1v6h-1zM420 264h1v2h-1zM420 268h1v3h-1zM421 204h1v3h-1zM422 207h1v37h-1zM422 245h1v4h-1zM422 260h1v6h-1zM422 269h1v2h-1zM423 207h1v2h-1zM423 210h1v2h-1zM423 215h1v25h-1zM423 241h1v5h-1zM423 251h1v2h-1zM423 255h1v11h-1zM423 270h1v3h-1zM424 207h1v17h-1zM424 225h1v18h-1zM424 245h1v12h-1zM424 258h1v9h-1zM424 268h1v3h-1zM425 207h1v4h-1zM425 212h1v6h-1zM425 225h1v1h-1zM425 227h1v16h-1zM425 244h1v13h-1zM425 260h1v6h-1zM425 267h1v3h-1zM426 207h1v25h-1zM426 235h1v4h-1zM426 244h1v22h-1zM426 267h1v3h-1zM427 207h1v27h-1zM427 237h1v18h-1zM427 261h1v5h-1zM427 271h1v2h-1zM428 213h1v4h-1zM428 218h1v2h-1zM428 223h1v1h-1zM428 226h1v1h-1zM428 230h1v8h-1zM428 242h1v13h-1zM428 256h1v1h-1zM428 259h1v2h-1zM428 269h1v3h-1zM429 207h1v12h-1zM429 222h1v23h-1zM429 246h1v15h-1zM429 262h1v4h-1zM429 267h1v1h-1zM429 269h1v1h-1zM430 205h1v2h-1zM430 268h1v2h-1zM431 207h1v3h-1zM431 212h1v16h-1zM431 233h1v18h-1zM431 257h1v9h-1zM431 270h1v3h-1zM432 207h1v13h-1zM432 222h1v6h-1zM432 267h1v3h-1zM433 213h1v22h-1zM433 237h1v1h-1zM433 240h1v3h-1zM433 247h1v11h-1zM433 259h1v1h-1zM433 263h1v3h-1zM433 267h1v3h-1zM434 207h1v28h-1zM434 236h1v16h-1zM434 253h1v6h-1zM434 265h1v1h-1zM434 267h1v1h-1zM435 207h1v21h-1zM435 229h1v37h-1zM436 207h1v11h-1zM436 219h1v31h-1zM436 254h1v12h-1zM436 269h1v1h-1zM436 271h1v1h-1zM437 207h1v29h-1zM437 237h1v17h-1zM437 263h1v3h-1zM437 267h1v3h-1zM438 207h1v1h-1zM438 210h1v1h-1zM438 212h1v20h-1zM438 236h1v1h-1zM438 238h1v1h-1zM438 243h1v18h-1zM438 265h1v2h-1zM438 270h1v3h-1zM439 215h1v37h-1zM439 253h1v9h-1zM439 263h1v3h-1zM439 271h1v2h-1zM440 266h1v1h-1zM440 268h1v2h-1zM441 207h1v8h-1zM441 216h1v2h-1zM441 219h1v5h-1zM441 230h1v2h-1zM441 237h1v9h-1zM441 249h1v17h-1zM441 269h1v1h-1zM442 207h1v3h-1zM442 211h1v6h-1zM442 218h1v18h-1zM442 239h1v10h-1zM442 250h1v1h-1zM442 253h1v10h-1zM442 265h1v1h-1zM513 222h1v1h-1zM516 220h1v1h-1zM520 218h1v1h-1zM521 217h1v2h-1zM576 258h1v7h-1zM585 257h1v9h-1zM594 259h1v1h-1zM594 261h1v5h-1zM602 212h1v9h-1zM602 226h1v12h-1zM602 243h1v23h-1zM602 267h1v6h-1zM602 276h1v6h-1zM603 210h1v20h-1zM603 232h1v8h-1zM603 241h1v9h-1zM603 254h1v12h-1zM603 276h1v5h-1zM604 211h1v1h-1zM604 213h1v22h-1zM604 238h1v4h-1zM604 244h1v5h-1zM604 250h1v5h-1zM604 256h1v10h-1zM604 276h1v8h-1zM605 266h1v1h-1zM605 269h1v5h-1zM605 275h1v1h-1zM605 282h1v2h-1zM606 229h1v8h-1zM606 242h1v3h-1zM606 247h1v7h-1zM606 261h1v5h-1zM606 276h1v1h-1zM606 280h1v3h-1zM607 214h1v31h-1zM607 250h1v12h-1zM607 264h1v2h-1zM607 276h1v8h-1zM608 214h1v14h-1zM608 229h1v8h-1zM608 241h1v20h-1zM608 276h1v4h-1zM608 281h1v2h-1zM609 212h1v4h-1zM609 217h1v2h-1zM609 220h1v14h-1zM609 235h1v9h-1zM609 252h1v13h-1zM609 276h1v7h-1zM610 213h1v2h-1zM610 218h1v50h-1zM610 269h1v3h-1zM610 276h1v8h-1zM611 210h1v16h-1zM611 227h1v3h-1zM611 231h1v38h-1zM611 276h1v5h-1zM611 282h1v1h-1zM612 213h1v37h-1zM612 251h1v1h-1zM612 253h1v13h-1zM612 276h1v4h-1zM613 210h1v13h-1zM613 226h1v19h-1zM613 250h1v11h-1zM613 263h1v3h-1zM613 276h1v5h-1zM613 282h1v2h-1zM614 209h1v2h-1zM614 269h1v3h-1zM614 273h1v3h-1zM615 212h1v40h-1zM615 253h1v13h-1zM615 270h1v1h-1zM615 277h1v6h-1zM615 284h1v1h-1zM616 211h1v7h-1zM616 219h1v7h-1zM616 232h1v34h-1zM616 276h1v3h-1zM616 280h1v3h-1zM616 285h1v1h-1zM617 211h1v4h-1zM617 222h1v25h-1zM617 248h1v18h-1zM617 276h1v4h-1zM617 281h1v1h-1zM618 213h1v15h-1zM618 229h1v6h-1zM619 210h1v15h-1zM619 227h1v16h-1zM619 244h1v6h-1zM619 251h1v10h-1zM619 263h1v2h-1zM619 266h1v2h-1zM619 276h1v6h-1zM620 211h1v25h-1zM620 239h1v23h-1zM620 263h1v3h-1zM620 270h1v13h-1zM621 212h1v7h-1zM621 220h1v1h-1zM621 222h1v5h-1zM621 228h1v10h-1zM621 241h1v18h-1zM621 266h1v15h-1zM622 212h1v28h-1zM622 242h1v28h-1zM622 276h1v4h-1zM622 281h1v2h-1zM623 211h1v1h-1zM623 213h1v41h-1zM623 259h1v7h-1zM623 276h1v4h-1zM624 266h1v1h-1zM625 210h1v4h-1zM625 223h1v13h-1zM625 246h1v7h-1zM625 266h1v2h-1zM625 269h1v2h-1zM625 276h1v5h-1zM626 210h1v2h-1zM626 218h1v2h-1zM626 222h1v2h-1zM626 225h1v12h-1zM626 267h1v2h-1zM626 273h1v3h-1zM626 281h1v1h-1zM627 214h1v40h-1zM627 255h1v1h-1zM627 258h1v3h-1zM627 263h1v3h-1zM627 277h1v8h-1zM628 212h1v20h-1zM628 237h1v1h-1zM628 244h1v9h-1zM628 254h1v3h-1zM628 276h1v7h-1zM628 285h1v1h-1zM629 217h1v7h-1zM629 247h1v2h-1zM629 264h1v2h-1zM629 280h1v3h-1zM630 231h1v7h-1zM630 240h1v2h-1zM630 249h1v3h-1zM630 277h1v1h-1zM630 281h1v3h-1zM631 212h1v1h-1zM631 224h1v4h-1zM631 229h1v15h-1zM631 247h1v1h-1zM631 276h1v9h-1zM632 218h1v8h-1zM632 227h1v6h-1zM632 235h1v8h-1zM632 244h1v2h-1zM632 249h1v4h-1zM632 254h1v2h-1zM632 276h1v7h-1zM633 266h1v5h-1zM633 281h1v2h-1zM634 211h1v8h-1zM634 223h1v7h-1zM634 236h1v22h-1zM634 260h1v6h-1zM634 276h1v5h-1zM634 283h1v1h-1zM635 209h1v2h-1zM635 217h1v15h-1zM635 234h1v1h-1zM635 236h1v19h-1zM635 258h1v9h-1zM636 208h1v3h-1zM636 212h1v6h-1zM636 220h1v2h-1zM636 224h1v15h-1zM636 241h1v7h-1zM636 249h1v16h-1zM636 266h1v5h-1zM636 276h1v5h-1zM636 282h1v2h-1zM637 210h1v29h-1zM637 244h1v9h-1zM637 254h1v10h-1zM637 266h1v17h-1zM638 211h1v11h-1zM638 227h1v8h-1zM638 236h1v4h-1zM638 249h1v1h-1zM638 252h1v1h-1zM638 254h1v1h-1zM638 256h1v1h-1zM638 261h1v5h-1zM638 276h1v8h-1zM639 209h1v4h-1zM639 214h1v10h-1zM639 226h1v13h-1zM639 244h1v1h-1zM639 254h1v1h-1zM639 259h1v1h-1zM639 261h1v5h-1zM639 276h1v3h-1zM639 282h1v3h-1zM640 208h1v6h-1zM640 224h1v3h-1zM640 228h1v27h-1zM640 256h1v7h-1zM640 265h1v1h-1zM640 276h1v6h-1zM640 283h1v2h-1zM641 207h1v9h-1zM641 221h1v4h-1zM641 231h1v2h-1zM641 235h1v2h-1zM641 239h1v27h-1zM641 267h1v2h-1zM641 270h1v1h-1zM641 276h1v1h-1zM641 282h1v1h-1zM642 269h1v3h-1zM642 273h1v2h-1zM643 209h1v22h-1zM643 234h1v32h-1zM643 276h1v4h-1zM644 214h1v7h-1zM644 224h1v9h-1zM644 239h1v6h-1zM644 251h1v4h-1zM644 256h1v2h-1zM644 259h1v7h-1zM644 276h1v9h-1zM645 211h1v18h-1zM645 230h1v1h-1zM645 232h1v1h-1zM645 239h1v27h-1zM645 273h1v3h-1zM645 277h1v3h-1zM645 282h1v2h-1zM646 209h1v2h-1zM646 214h1v33h-1zM646 251h1v12h-1zM646 264h1v2h-1zM646 268h1v1h-1zM646 278h1v2h-1zM646 281h1v3h-1zM647 213h1v1h-1zM647 215h1v16h-1zM647 238h1v24h-1zM647 263h1v3h-1zM647 269h1v1h-1zM647 271h1v1h-1zM647 273h1v2h-1zM647 276h1v4h-1zM648 211h1v3h-1zM648 215h1v35h-1zM648 257h1v9h-1zM648 276h1v3h-1zM648 280h1v3h-1zM649 208h1v1h-1zM649 210h1v1h-1zM649 212h1v10h-1zM649 224h1v1h-1zM649 227h1v40h-1zM649 268h1v4h-1zM649 276h1v4h-1zM650 210h1v10h-1zM650 224h1v7h-1zM650 232h1v2h-1zM650 235h1v31h-1zM650 273h1v1h-1zM650 276h1v9h-1zM652 210h1v10h-1zM652 229h1v39h-1zM652 276h1v4h-1zM653 210h1v10h-1zM653 222h1v9h-1zM653 234h1v16h-1zM653 251h1v2h-1zM653 254h1v10h-1zM653 276h1v9h-1zM654 209h1v14h-1zM654 225h1v1h-1zM654 227h1v1h-1zM654 229h1v9h-1zM654 239h1v16h-1zM654 257h1v9h-1zM654 276h1v5h-1zM654 283h1v1h-1zM655 206h1v38h-1zM655 246h1v1h-1zM655 248h1v5h-1zM655 254h1v1h-1zM655 256h1v1h-1zM655 258h1v8h-1zM655 272h1v11h-1zM656 205h1v27h-1zM656 233h1v17h-1zM656 251h1v7h-1zM656 259h1v4h-1zM656 266h1v10h-1zM656 278h1v2h-1zM657 208h1v17h-1zM657 235h1v3h-1zM657 240h1v1h-1zM657 243h1v23h-1zM657 276h1v7h-1zM658 209h1v4h-1zM658 215h1v1h-1zM658 219h1v15h-1zM658 235h1v1h-1zM658 240h1v11h-1zM658 253h1v13h-1zM658 276h1v10h-1zM659 209h1v3h-1zM659 213h1v30h-1zM659 244h1v22h-1zM659 276h1v8h-1zM660 208h1v2h-1zM661 210h1v56h-1zM661 271h1v5h-1zM661 279h1v3h-1zM662 209h1v11h-1zM662 227h1v2h-1zM662 230h1v9h-1zM662 242h1v24h-1zM662 283h1v2h-1zM663 208h1v10h-1zM663 220h1v8h-1zM663 269h1v2h-1zM664 209h1v1h-1zM664 211h1v3h-1zM664 220h1v9h-1zM664 230h1v4h-1zM664 236h1v12h-1zM664 249h1v1h-1zM664 252h1v8h-1zM664 261h1v5h-1zM664 271h1v1h-1zM664 276h1v5h-1zM664 282h1v2h-1zM665 208h1v52h-1zM665 266h1v2h-1zM665 276h1v7h-1zM666 207h1v1h-1zM666 213h1v13h-1zM666 227h1v5h-1zM666 235h1v3h-1zM666 239h1v5h-1zM666 250h1v16h-1zM666 276h1v4h-1zM667 206h1v11h-1zM667 218h1v6h-1zM667 229h1v1h-1zM667 231h1v10h-1zM667 247h1v1h-1zM667 249h1v1h-1zM667 252h1v13h-1zM667 269h1v4h-1zM667 276h1v3h-1zM668 206h1v24h-1zM668 231h1v5h-1zM668 237h1v10h-1zM668 248h1v11h-1zM668 262h1v4h-1zM668 276h1v7h-1zM669 282h1v1h-1zM670 207h1v2h-1zM670 210h1v31h-1zM670 243h1v1h-1zM670 245h1v10h-1zM670 262h1v1h-1zM670 264h1v5h-1zM670 270h1v1h-1zM670 272h1v4h-1zM670 278h1v1h-1zM671 208h1v10h-1zM671 219h1v30h-1zM671 251h1v2h-1zM671 254h1v4h-1zM671 266h1v4h-1zM671 277h1v3h-1zM672 207h1v2h-1zM672 214h1v23h-1zM672 239h1v1h-1zM672 243h1v23h-1zM672 271h1v1h-1zM672 275h1v2h-1zM673 205h1v3h-1zM673 211h1v1h-1zM673 214h1v11h-1zM673 233h1v12h-1zM673 248h1v9h-1zM673 263h1v3h-1zM673 268h1v5h-1zM673 276h1v3h-1zM674 204h1v2h-1zM674 211h1v2h-1zM674 217h1v15h-1zM674 234h1v3h-1zM674 238h1v10h-1zM674 250h1v16h-1zM674 270h1v8h-1zM675 207h1v27h-1zM675 237h1v5h-1zM675 245h1v16h-1zM675 266h1v5h-1zM675 272h1v1h-1zM675 276h1v3h-1zM676 207h1v17h-1zM676 225h1v30h-1zM676 261h1v5h-1zM676 270h1v2h-1zM676 276h1v1h-1zM677 225h1v9h-1zM677 235h1v20h-1zM677 256h1v8h-1zM677 271h1v1h-1zM677 276h1v2h-1zM678 271h1v3h-1zM679 209h1v19h-1zM679 233h1v7h-1zM679 242h1v1h-1zM679 245h1v21h-1zM679 277h1v3h-1zM680 207h1v18h-1zM680 226h1v14h-1zM680 241h1v24h-1zM680 276h1v5h-1zM681 207h1v19h-1zM681 232h1v18h-1zM681 251h1v14h-1zM681 266h1v1h-1zM681 275h1v3h-1zM682 205h1v24h-1zM682 233h1v4h-1zM682 242h1v7h-1zM682 253h1v1h-1zM682 255h1v1h-1zM682 264h1v2h-1zM682 273h1v1h-1zM682 275h1v2h-1zM682 278h1v2h-1zM683 207h1v4h-1zM683 212h1v1h-1zM683 214h1v4h-1zM683 219h1v2h-1zM683 225h1v1h-1zM683 228h1v20h-1zM683 258h1v8h-1zM683 268h1v6h-1zM683 276h1v6h-1zM684 209h1v6h-1zM684 216h1v2h-1zM684 219h1v47h-1zM684 271h1v2h-1zM684 276h1v3h-1zM684 280h1v1h-1z"/>
<path fill="#8d9208" d="M84 202h1v1h-1zM84 204h1v2h-1zM84 208h1v3h-1zM84 260h1v4h-1zM84 266h1v2h-1zM84 269h1v1h-1zM84 271h1v5h-1zM85 206h1v5h-1zM85 258h1v18h-1zM86 204h1v4h-1zM86 214h1v6h-1zM86 221h1v1h-1zM86 223h1v5h-1zM86 251h1v11h-1zM86 266h1v10h-1zM87 204h1v2h-1zM87 213h1v4h-1zM87 236h1v7h-1zM87 244h1v1h-1zM87 246h1v2h-1zM87 264h1v1h-1zM87 266h1v10h-1zM88 203h1v3h-1zM88 232h1v4h-1zM88 257h1v1h-1zM88 266h1v10h-1zM90 266h1v1h-1zM91 204h1v1h-1zM91 266h1v1h-1zM93 213h1v1h-1zM93 231h1v1h-1zM93 249h1v8h-1zM93 266h1v4h-1zM93 271h1v2h-1zM94 223h1v2h-1zM94 241h1v1h-1zM94 250h1v1h-1zM94 257h1v5h-1zM94 266h1v1h-1zM95 213h1v2h-1zM95 216h1v2h-1zM95 266h1v1h-1zM96 204h1v1h-1zM96 266h1v1h-1zM97 205h1v2h-1zM98 230h1v2h-1zM98 243h1v1h-1zM98 245h1v7h-1zM98 266h1v1h-1zM99 207h1v1h-1zM99 235h1v6h-1zM99 243h1v3h-1zM99 261h1v2h-1zM99 264h1v2h-1zM99 267h1v3h-1zM100 208h1v2h-1zM100 226h1v9h-1zM100 252h1v1h-1zM100 254h1v3h-1zM100 259h1v7h-1zM100 268h1v3h-1zM101 204h1v3h-1zM102 249h1v1h-1zM102 262h1v2h-1zM102 266h1v1h-1zM103 217h1v3h-1zM103 221h1v3h-1zM103 243h1v2h-1zM103 266h1v2h-1zM103 270h1v1h-1zM104 222h1v3h-1zM104 226h1v1h-1zM104 243h1v3h-1zM104 266h1v1h-1zM105 231h1v1h-1zM105 267h1v1h-1zM106 206h1v1h-1zM106 266h1v5h-1zM107 266h1v2h-1zM108 267h1v2h-1zM109 266h1v1h-1zM111 266h1v1h-1zM112 266h1v4h-1zM112 271h1v2h-1zM113 206h1v1h-1zM113 249h1v1h-1zM113 253h1v3h-1zM113 264h1v3h-1zM114 266h1v3h-1zM115 214h1v6h-1zM115 231h1v1h-1zM115 266h1v5h-1zM116 205h1v2h-1zM116 266h1v3h-1zM116 270h1v1h-1zM117 204h1v1h-1zM117 266h1v1h-1zM118 268h1v1h-1zM119 204h1v3h-1zM120 266h1v1h-1zM121 205h1v1h-1zM121 247h1v2h-1zM121 266h1v7h-1zM122 207h1v5h-1zM122 255h1v1h-1zM122 264h1v1h-1zM122 266h1v5h-1zM191 217h1v1h-1zM191 219h1v2h-1zM192 211h1v3h-1zM192 215h1v2h-1zM192 220h1v1h-1zM192 222h1v1h-1zM192 224h1v1h-1zM193 207h1v5h-1zM193 214h1v2h-1zM193 219h1v1h-1zM193 221h1v3h-1zM193 225h1v1h-1zM194 223h1v3h-1zM195 218h1v1h-1zM195 220h1v4h-1zM196 207h1v4h-1zM196 217h1v2h-1zM197 215h1v6h-1zM198 217h1v6h-1zM199 215h1v5h-1zM199 221h1v3h-1zM200 211h1v1h-1zM200 214h1v3h-1zM248 248h1v7h-1zM248 261h1v1h-1zM249 257h1v7h-1zM250 259h1v1h-1zM250 262h1v4h-1zM251 255h1v7h-1zM251 263h1v1h-1zM252 262h1v4h-1zM253 261h1v1h-1zM254 257h1v1h-1zM254 275h1v3h-1zM255 261h1v2h-1zM257 261h1v2h-1zM258 257h1v2h-1zM258 261h1v5h-1zM259 256h1v10h-1zM260 261h1v5h-1zM261 255h1v3h-1zM261 261h1v5h-1zM262 259h1v7h-1zM264 256h1v10h-1zM265 277h1v1h-1zM266 263h1v1h-1zM267 265h1v1h-1zM268 259h1v2h-1zM269 255h1v1h-1zM269 262h1v4h-1zM270 259h1v1h-1zM272 260h1v1h-1zM274 275h1v1h-1zM275 258h1v7h-1zM276 255h1v2h-1zM276 264h1v2h-1zM276 277h1v2h-1zM277 258h1v8h-1zM278 255h1v11h-1zM279 257h1v9h-1zM280 263h1v2h-1zM281 245h1v3h-1zM281 266h1v10h-1zM281 279h1v2h-1zM282 212h1v2h-1zM282 256h1v1h-1zM282 258h1v2h-1zM282 266h1v2h-1zM282 270h1v6h-1zM283 272h1v1h-1zM284 210h1v1h-1zM284 266h1v2h-1zM284 269h1v6h-1zM285 210h1v2h-1zM286 212h1v2h-1zM286 266h1v5h-1zM286 272h1v4h-1zM286 280h1v1h-1zM287 211h1v2h-1zM287 266h1v10h-1zM288 234h1v6h-1zM288 266h1v10h-1zM289 210h1v2h-1zM289 222h1v1h-1zM289 240h1v2h-1zM289 243h1v3h-1zM289 266h1v7h-1zM289 274h1v2h-1zM290 211h1v2h-1zM290 224h1v5h-1zM290 242h1v1h-1zM290 264h1v2h-1zM290 267h1v1h-1zM290 275h1v1h-1zM291 211h1v2h-1zM291 266h1v8h-1zM291 275h1v1h-1zM292 267h1v9h-1zM292 282h1v1h-1zM293 210h1v1h-1zM294 210h1v2h-1zM295 212h1v2h-1zM295 266h1v7h-1zM295 275h1v1h-1zM296 210h1v1h-1zM296 267h1v7h-1zM297 221h1v8h-1zM297 233h1v1h-1zM297 244h1v7h-1zM297 266h1v10h-1zM298 212h1v2h-1zM298 236h1v1h-1zM298 249h1v4h-1zM298 259h1v4h-1zM298 267h1v4h-1zM299 213h1v5h-1zM299 240h1v4h-1zM299 262h1v4h-1zM299 268h1v4h-1zM299 275h1v1h-1zM299 278h1v5h-1zM300 212h1v2h-1zM300 220h1v7h-1zM300 235h1v3h-1zM300 260h1v5h-1zM300 266h1v3h-1zM300 273h1v3h-1zM300 279h1v1h-1zM301 252h1v1h-1zM301 260h1v1h-1zM301 268h1v8h-1zM302 271h1v7h-1zM303 210h1v2h-1zM304 210h1v2h-1zM304 215h1v1h-1zM304 218h1v1h-1zM304 238h1v1h-1zM304 248h1v3h-1zM304 266h1v3h-1zM304 270h1v1h-1zM304 272h1v4h-1zM305 213h1v3h-1zM305 221h1v11h-1zM305 252h1v2h-1zM305 255h1v1h-1zM305 266h1v3h-1zM305 270h1v5h-1zM305 276h1v6h-1zM306 210h1v2h-1zM306 224h1v2h-1zM306 240h1v1h-1zM306 254h1v1h-1zM306 258h1v2h-1zM306 261h1v4h-1zM306 266h1v10h-1zM307 226h1v1h-1zM307 266h1v10h-1zM308 266h1v1h-1zM308 268h1v8h-1zM309 215h1v3h-1zM309 233h1v1h-1zM309 235h1v1h-1zM309 267h1v9h-1zM310 210h1v2h-1zM310 228h1v2h-1zM310 232h1v1h-1zM310 235h1v2h-1zM310 239h1v2h-1zM310 266h1v10h-1zM311 211h1v3h-1zM311 230h1v1h-1zM311 232h1v2h-1zM311 239h1v3h-1zM311 254h1v1h-1zM311 266h1v10h-1zM312 212h1v1h-1zM313 208h1v2h-1zM313 273h1v3h-1zM314 259h1v1h-1zM314 261h1v2h-1zM314 266h1v2h-1zM314 269h1v7h-1zM315 209h1v2h-1zM315 217h1v2h-1zM315 220h1v1h-1zM315 225h1v1h-1zM315 228h1v1h-1zM315 262h1v3h-1zM315 266h1v10h-1zM316 208h1v2h-1zM316 219h1v8h-1zM316 265h1v1h-1zM316 271h1v5h-1zM317 209h1v3h-1zM317 226h1v13h-1zM317 266h1v8h-1zM317 276h1v7h-1zM318 209h1v3h-1zM318 213h1v1h-1zM318 240h1v11h-1zM318 266h1v10h-1zM319 208h1v2h-1zM319 256h1v1h-1zM319 266h1v2h-1zM319 271h1v5h-1zM320 209h1v3h-1zM320 266h1v4h-1zM320 272h1v5h-1zM321 207h1v2h-1zM322 208h1v2h-1zM323 207h1v2h-1zM323 266h1v4h-1zM324 208h1v1h-1zM324 266h1v2h-1zM324 269h1v4h-1zM324 274h1v1h-1zM325 208h1v4h-1zM325 258h1v2h-1zM325 266h1v9h-1zM327 245h1v1h-1zM327 266h1v9h-1zM328 207h1v2h-1zM328 266h1v10h-1zM329 266h1v5h-1zM329 273h1v3h-1zM330 207h1v2h-1zM331 207h1v2h-1zM331 221h1v3h-1zM331 225h1v2h-1zM331 233h1v2h-1zM331 243h1v1h-1zM331 245h1v7h-1zM331 264h1v2h-1zM331 271h1v5h-1zM331 278h1v1h-1zM332 208h1v1h-1zM332 266h1v10h-1zM333 266h1v5h-1zM334 266h1v4h-1zM334 271h1v1h-1zM335 205h1v2h-1zM335 246h1v1h-1zM335 266h1v1h-1zM335 269h1v7h-1zM336 207h1v3h-1zM336 222h1v7h-1zM336 239h1v2h-1zM336 242h1v2h-1zM336 257h1v1h-1zM336 259h1v1h-1zM336 266h1v1h-1zM336 269h1v5h-1zM336 275h1v1h-1zM337 225h1v13h-1zM337 254h1v7h-1zM337 262h1v1h-1zM337 264h1v2h-1zM337 271h1v5h-1zM337 278h1v3h-1zM338 207h1v2h-1zM338 210h1v9h-1zM338 230h1v10h-1zM338 241h1v1h-1zM338 248h1v1h-1zM338 250h1v2h-1zM338 257h1v2h-1zM338 261h1v3h-1zM338 266h1v10h-1zM338 278h1v2h-1zM339 207h1v2h-1zM340 216h1v10h-1zM340 231h1v6h-1zM340 245h1v1h-1zM340 248h1v4h-1zM340 253h1v1h-1zM340 257h1v2h-1zM340 266h1v1h-1zM340 272h1v4h-1zM340 279h1v1h-1zM341 207h1v3h-1zM341 212h1v6h-1zM341 238h1v2h-1zM341 248h1v1h-1zM341 266h1v10h-1zM341 277h1v1h-1zM342 209h1v1h-1zM342 244h1v1h-1zM342 246h1v1h-1zM342 266h1v10h-1zM343 220h1v2h-1zM344 237h1v1h-1zM344 268h1v9h-1zM344 278h1v2h-1zM345 202h1v4h-1zM345 258h1v2h-1zM345 266h1v10h-1zM346 206h1v3h-1zM346 215h1v3h-1zM346 226h1v6h-1zM346 233h1v1h-1zM346 242h1v1h-1zM346 244h1v1h-1zM346 267h1v1h-1zM346 272h1v4h-1zM347 205h1v3h-1zM347 224h1v1h-1zM347 236h1v3h-1zM347 251h1v2h-1zM347 258h1v4h-1zM347 266h1v4h-1zM347 272h1v1h-1zM347 275h1v1h-1zM348 202h1v2h-1zM348 231h1v1h-1zM348 256h1v4h-1zM348 268h1v6h-1zM348 275h1v1h-1zM349 202h1v2h-1zM350 206h1v2h-1zM350 264h1v12h-1zM351 205h1v2h-1zM351 211h1v6h-1zM351 222h1v3h-1zM351 227h1v6h-1zM351 237h1v6h-1zM351 250h1v5h-1zM351 256h1v1h-1zM351 259h1v7h-1zM351 267h1v2h-1zM351 271h1v5h-1zM352 205h1v3h-1zM352 215h1v7h-1zM352 242h1v2h-1zM352 249h1v5h-1zM352 266h1v10h-1zM353 203h1v2h-1zM353 233h1v4h-1zM353 254h1v1h-1zM353 266h1v2h-1zM353 271h1v3h-1zM353 275h1v1h-1zM354 205h1v2h-1zM354 268h1v2h-1zM354 272h1v2h-1zM355 204h1v2h-1zM355 271h1v5h-1zM356 204h1v4h-1zM356 225h1v1h-1zM356 269h1v4h-1zM356 275h1v2h-1zM357 204h1v2h-1zM357 266h1v5h-1zM357 273h1v1h-1zM359 201h1v4h-1zM359 212h1v2h-1zM359 227h1v1h-1zM359 242h1v3h-1zM359 266h1v3h-1zM359 270h1v6h-1zM360 202h1v2h-1zM360 205h1v1h-1zM360 225h1v4h-1zM360 237h1v1h-1zM360 244h1v4h-1zM360 249h1v1h-1zM360 266h1v4h-1zM360 273h1v3h-1zM361 204h1v4h-1zM361 266h1v8h-1zM361 275h1v1h-1zM362 204h1v4h-1zM362 266h1v7h-1zM363 204h1v4h-1zM363 219h1v1h-1zM363 226h1v4h-1zM363 249h1v1h-1zM363 251h1v1h-1zM363 256h1v3h-1zM363 260h1v1h-1zM363 266h1v10h-1zM364 203h1v1h-1zM364 205h1v2h-1zM364 230h1v6h-1zM364 254h1v5h-1zM364 261h1v3h-1zM364 266h1v8h-1zM364 275h1v1h-1zM365 200h1v1h-1zM365 202h1v4h-1zM365 218h1v6h-1zM365 226h1v7h-1zM365 234h1v3h-1zM365 238h1v6h-1zM366 205h1v3h-1zM366 211h1v1h-1zM366 214h1v2h-1zM366 217h1v1h-1zM366 219h1v1h-1zM366 234h1v1h-1zM366 266h1v10h-1zM367 202h1v2h-1zM368 202h1v3h-1zM368 223h1v2h-1zM368 226h1v1h-1zM368 260h1v16h-1zM369 204h1v2h-1zM369 225h1v1h-1zM369 241h1v1h-1zM369 243h1v1h-1zM369 266h1v1h-1zM369 268h1v8h-1zM370 204h1v4h-1zM370 262h1v1h-1zM370 264h1v7h-1zM370 272h1v1h-1zM370 274h1v3h-1zM371 206h1v3h-1zM371 211h1v1h-1zM371 258h1v2h-1zM371 266h1v1h-1zM371 272h1v4h-1zM372 205h1v2h-1zM372 215h1v3h-1zM372 219h1v7h-1zM373 202h1v4h-1zM374 202h1v4h-1zM374 207h1v6h-1zM374 218h1v2h-1zM374 222h1v1h-1zM374 226h1v1h-1zM374 243h1v3h-1zM374 247h1v1h-1zM374 252h1v2h-1zM374 267h1v4h-1zM374 273h1v3h-1zM375 201h1v4h-1zM375 266h1v3h-1zM375 270h1v6h-1zM376 202h1v2h-1zM377 204h1v4h-1zM377 217h1v1h-1zM377 233h1v4h-1zM377 266h1v3h-1zM377 271h1v3h-1zM378 203h1v4h-1zM378 218h1v1h-1zM378 220h1v4h-1zM378 266h1v10h-1zM379 204h1v2h-1zM379 208h1v1h-1zM379 222h1v2h-1zM379 259h1v6h-1zM379 266h1v7h-1zM380 202h1v2h-1zM380 216h1v2h-1zM380 224h1v2h-1zM380 253h1v11h-1zM380 266h1v10h-1zM381 206h1v1h-1zM381 208h1v3h-1zM381 223h1v1h-1zM381 225h1v1h-1zM381 233h1v1h-1zM381 266h1v11h-1zM382 204h1v2h-1zM382 224h1v1h-1zM382 226h1v2h-1zM382 230h1v2h-1zM382 240h1v1h-1zM382 242h1v2h-1zM382 264h1v2h-1zM382 268h1v7h-1zM383 204h1v2h-1zM383 208h1v10h-1zM383 220h1v9h-1zM383 231h1v1h-1zM383 238h1v2h-1zM383 250h1v1h-1zM383 265h1v9h-1zM383 276h1v3h-1zM384 205h1v2h-1zM384 266h1v10h-1zM385 203h1v2h-1zM386 203h1v1h-1zM386 205h1v2h-1zM386 237h1v2h-1zM386 266h1v10h-1zM387 204h1v7h-1zM387 245h1v1h-1zM387 266h1v9h-1zM387 277h1v2h-1zM388 207h1v2h-1zM388 249h1v1h-1zM388 266h1v6h-1zM388 274h1v2h-1zM389 204h1v1h-1zM389 206h1v8h-1zM389 249h1v8h-1zM389 262h1v3h-1zM389 266h1v2h-1zM389 269h1v2h-1zM389 272h1v4h-1zM390 204h1v3h-1zM390 212h1v1h-1zM390 214h1v1h-1zM390 229h1v3h-1zM390 266h1v13h-1zM390 280h1v1h-1zM391 205h1v2h-1zM391 210h1v6h-1zM391 233h1v3h-1zM391 266h1v10h-1zM391 278h1v1h-1zM392 204h1v2h-1zM392 210h1v4h-1zM392 249h1v1h-1zM392 254h1v2h-1zM392 259h1v1h-1zM392 266h1v10h-1zM393 202h1v2h-1zM393 212h1v6h-1zM393 232h1v4h-1zM393 238h1v5h-1zM393 251h1v5h-1zM393 257h1v2h-1zM393 265h1v2h-1zM393 271h1v5h-1zM395 204h1v4h-1zM395 212h1v6h-1zM395 223h1v1h-1zM395 225h1v4h-1zM395 231h1v1h-1zM395 236h1v1h-1zM395 257h1v3h-1zM395 266h1v10h-1zM396 203h1v2h-1zM396 267h1v3h-1zM396 271h1v3h-1zM397 202h1v4h-1zM397 227h1v1h-1zM397 271h1v5h-1zM398 204h1v4h-1zM399 201h1v2h-1zM399 269h1v7h-1zM400 200h1v4h-1zM400 264h1v1h-1zM400 266h1v4h-1zM400 274h1v2h-1zM401 203h1v4h-1zM401 229h1v4h-1zM401 266h1v6h-1zM402 202h1v2h-1zM402 208h1v4h-1zM402 228h1v7h-1zM402 236h1v4h-1zM402 242h1v3h-1zM402 246h1v11h-1zM402 268h1v4h-1zM402 274h1v2h-1zM404 200h1v3h-1zM404 249h1v13h-1zM404 266h1v10h-1zM405 217h1v4h-1zM405 228h1v5h-1zM405 235h1v1h-1zM405 266h1v10h-1zM406 202h1v3h-1zM406 219h1v4h-1zM406 261h1v2h-1zM406 266h1v4h-1zM406 273h1v3h-1zM407 201h1v4h-1zM407 217h1v1h-1zM407 235h1v1h-1zM407 246h1v2h-1zM407 265h1v1h-1zM407 267h1v7h-1zM408 205h1v2h-1zM408 236h1v6h-1zM408 266h1v5h-1zM408 273h1v3h-1zM409 249h1v2h-1zM410 266h1v2h-1zM410 270h1v1h-1zM411 210h1v1h-1zM411 266h1v2h-1zM412 205h1v2h-1zM413 208h1v3h-1zM413 212h1v2h-1zM413 227h1v1h-1zM413 230h1v3h-1zM413 235h1v1h-1zM413 254h1v2h-1zM413 266h1v5h-1zM414 220h1v1h-1zM414 231h1v1h-1zM414 234h1v1h-1zM414 251h1v5h-1zM414 266h1v4h-1zM414 272h1v1h-1zM415 226h1v2h-1zM415 238h1v6h-1zM415 252h1v2h-1zM415 266h1v5h-1zM416 265h1v1h-1zM416 268h1v1h-1zM417 226h1v2h-1zM417 266h1v5h-1zM418 206h1v1h-1zM418 218h1v1h-1zM418 266h1v1h-1zM419 266h1v1h-1zM420 206h1v1h-1zM420 266h1v2h-1zM421 270h1v2h-1zM422 266h1v3h-1zM423 240h1v1h-1zM423 246h1v5h-1zM423 266h1v4h-1zM424 267h1v1h-1zM425 211h1v1h-1zM425 266h1v1h-1zM426 232h1v3h-1zM426 266h1v1h-1zM427 234h1v3h-1zM427 255h1v6h-1zM427 266h1v5h-1zM428 207h1v6h-1zM428 217h1v1h-1zM428 220h1v3h-1zM428 224h1v2h-1zM428 227h1v3h-1zM428 238h1v4h-1zM428 255h1v1h-1zM428 257h1v2h-1zM428 261h1v8h-1zM429 245h1v1h-1zM429 266h1v1h-1zM429 268h1v1h-1zM431 266h1v4h-1zM432 266h1v1h-1zM433 243h1v4h-1zM433 258h1v1h-1zM433 260h1v3h-1zM433 266h1v1h-1zM434 235h1v1h-1zM434 266h1v1h-1zM434 268h1v2h-1zM435 228h1v1h-1zM435 266h1v7h-1zM436 218h1v1h-1zM436 266h1v3h-1zM436 270h1v1h-1zM437 266h1v1h-1zM438 267h1v3h-1zM439 207h1v8h-1zM439 252h1v1h-1zM439 262h1v1h-1zM439 266h1v5h-1zM440 204h1v3h-1zM441 215h1v1h-1zM441 218h1v1h-1zM441 224h1v6h-1zM441 232h1v5h-1zM441 246h1v3h-1zM441 266h1v3h-1zM441 270h1v2h-1zM442 205h1v1h-1zM442 217h1v1h-1zM442 236h1v3h-1zM442 263h1v2h-1zM442 268h1v5h-1zM511 217h1v2h-1zM512 213h1v5h-1zM513 215h1v1h-1zM513 218h1v4h-1zM513 223h1v2h-1zM514 223h1v4h-1zM516 219h1v1h-1zM516 221h1v2h-1zM517 207h1v1h-1zM517 209h1v4h-1zM517 220h1v1h-1zM518 219h1v1h-1zM518 222h1v1h-1zM519 206h1v3h-1zM519 215h1v5h-1zM520 208h1v2h-1zM520 213h1v1h-1zM520 217h1v1h-1zM520 219h1v4h-1zM521 209h1v2h-1zM521 212h1v5h-1zM568 248h1v7h-1zM568 262h1v4h-1zM569 264h1v1h-1zM570 259h1v2h-1zM570 265h1v1h-1zM571 259h1v7h-1zM572 259h1v1h-1zM572 261h1v1h-1zM572 263h1v1h-1zM574 260h1v2h-1zM575 258h1v3h-1zM575 265h1v1h-1zM576 266h1v5h-1zM576 277h1v1h-1zM577 258h1v2h-1zM577 263h1v3h-1zM578 257h1v1h-1zM578 259h1v7h-1zM579 260h1v6h-1zM580 256h1v4h-1zM581 257h1v1h-1zM581 259h1v7h-1zM582 258h1v6h-1zM583 256h1v10h-1zM584 259h1v7h-1zM585 276h1v1h-1zM587 261h1v1h-1zM588 265h1v1h-1zM589 257h1v2h-1zM589 260h1v6h-1zM590 262h1v1h-1zM591 256h1v10h-1zM592 262h1v4h-1zM593 262h1v4h-1zM594 256h1v2h-1zM594 276h1v1h-1zM595 257h1v9h-1zM597 258h1v8h-1zM598 258h1v5h-1zM600 258h1v7h-1zM601 257h1v4h-1zM601 262h1v1h-1zM601 264h1v1h-1zM602 266h1v1h-1zM602 273h1v3h-1zM603 240h1v1h-1zM603 250h1v4h-1zM603 266h1v10h-1zM604 212h1v1h-1zM604 235h1v3h-1zM604 249h1v1h-1zM604 255h1v1h-1zM604 266h1v10h-1zM606 211h1v18h-1zM606 237h1v5h-1zM606 245h1v2h-1zM606 254h1v7h-1zM606 266h1v10h-1zM606 277h1v3h-1zM607 212h1v2h-1zM607 245h1v5h-1zM607 262h1v2h-1zM607 266h1v4h-1zM607 274h1v2h-1zM608 212h1v2h-1zM608 228h1v1h-1zM608 261h1v5h-1zM608 269h1v7h-1zM609 210h1v2h-1zM609 216h1v1h-1zM609 219h1v1h-1zM609 234h1v1h-1zM609 244h1v8h-1zM609 265h1v1h-1zM609 269h1v7h-1zM610 211h1v2h-1zM610 268h1v1h-1zM610 272h1v4h-1zM611 226h1v1h-1zM611 230h1v1h-1zM611 269h1v7h-1zM612 212h1v1h-1zM612 266h1v10h-1zM613 223h1v3h-1zM613 245h1v5h-1zM613 261h1v2h-1zM613 266h1v10h-1zM615 252h1v1h-1zM615 266h1v4h-1zM615 271h1v6h-1zM616 218h1v1h-1zM616 266h1v10h-1zM617 215h1v7h-1zM617 247h1v1h-1zM617 266h1v10h-1zM617 280h1v1h-1zM618 212h1v1h-1zM618 228h1v1h-1zM619 243h1v1h-1zM619 261h1v2h-1zM619 268h1v3h-1zM619 272h1v4h-1zM620 266h1v4h-1zM621 227h1v1h-1zM622 270h1v6h-1zM623 210h1v1h-1zM623 266h1v10h-1zM624 211h1v2h-1zM625 268h1v1h-1zM625 271h1v5h-1zM626 269h1v4h-1zM627 212h1v2h-1zM627 266h1v10h-1zM628 210h1v2h-1zM628 232h1v5h-1zM628 238h1v6h-1zM628 253h1v1h-1zM628 257h1v9h-1zM628 270h1v1h-1zM628 272h1v4h-1zM629 212h1v5h-1zM629 224h1v23h-1zM629 249h1v15h-1zM629 266h1v1h-1zM629 273h1v1h-1zM629 276h1v4h-1zM630 211h1v1h-1zM630 213h1v18h-1zM630 238h1v2h-1zM630 242h1v7h-1zM630 252h1v14h-1zM630 267h1v5h-1zM630 273h1v1h-1zM630 276h1v1h-1zM630 278h1v3h-1zM631 210h1v2h-1zM631 213h1v11h-1zM631 228h1v1h-1zM631 244h1v3h-1zM631 248h1v23h-1zM631 275h1v1h-1zM632 211h1v7h-1zM632 226h1v1h-1zM632 233h1v2h-1zM632 243h1v1h-1zM632 246h1v3h-1zM632 253h1v1h-1zM632 256h1v11h-1zM632 269h1v7h-1zM633 210h1v2h-1zM634 207h1v1h-1zM634 209h1v2h-1zM634 219h1v4h-1zM634 230h1v6h-1zM634 266h1v10h-1zM635 206h1v3h-1zM635 211h1v6h-1zM635 232h1v2h-1zM635 235h1v1h-1zM636 207h1v1h-1zM636 271h1v5h-1zM637 208h1v2h-1zM637 239h1v5h-1zM638 209h1v2h-1zM638 222h1v5h-1zM638 240h1v9h-1zM638 250h1v2h-1zM638 253h1v1h-1zM638 255h1v1h-1zM638 257h1v4h-1zM638 266h1v10h-1zM639 207h1v2h-1zM639 224h1v2h-1zM639 239h1v5h-1zM639 245h1v9h-1zM639 255h1v4h-1zM639 260h1v1h-1zM639 266h1v10h-1zM639 279h1v3h-1zM640 207h1v1h-1zM640 214h1v10h-1zM640 227h1v1h-1zM640 255h1v1h-1zM640 263h1v2h-1zM640 266h1v2h-1zM640 274h1v2h-1zM641 266h1v1h-1zM641 269h1v1h-1zM641 271h1v5h-1zM642 209h1v2h-1zM643 207h1v2h-1zM643 266h1v10h-1zM644 207h1v7h-1zM644 221h1v3h-1zM644 233h1v6h-1zM644 245h1v6h-1zM644 255h1v1h-1zM644 258h1v1h-1zM644 266h1v10h-1zM645 209h1v2h-1zM645 229h1v1h-1zM645 231h1v1h-1zM645 233h1v6h-1zM645 266h1v7h-1zM645 280h1v2h-1zM646 207h1v2h-1zM646 211h1v3h-1zM646 247h1v4h-1zM646 263h1v1h-1zM646 266h1v2h-1zM646 269h1v9h-1zM646 280h1v1h-1zM647 209h1v4h-1zM647 214h1v1h-1zM647 262h1v1h-1zM647 266h1v3h-1zM647 270h1v1h-1zM647 272h1v1h-1zM647 275h1v1h-1zM648 209h1v2h-1zM648 266h1v10h-1zM648 279h1v1h-1zM649 209h1v1h-1zM649 211h1v1h-1zM649 267h1v1h-1zM649 272h1v4h-1zM650 208h1v2h-1zM650 220h1v4h-1zM650 266h1v7h-1zM650 274h1v2h-1zM651 207h1v2h-1zM652 208h1v2h-1zM652 220h1v9h-1zM652 268h1v8h-1zM653 208h1v2h-1zM653 220h1v2h-1zM653 264h1v12h-1zM654 207h1v2h-1zM654 223h1v2h-1zM654 226h1v1h-1zM654 228h1v1h-1zM654 255h1v2h-1zM654 266h1v10h-1zM655 266h1v6h-1zM656 232h1v1h-1zM657 266h1v10h-1zM658 207h1v2h-1zM658 234h1v1h-1zM658 236h1v4h-1zM658 266h1v10h-1zM659 207h1v2h-1zM659 266h1v10h-1zM661 208h1v2h-1zM661 266h1v5h-1zM662 207h1v2h-1zM662 266h1v10h-1zM664 210h1v1h-1zM664 214h1v6h-1zM664 234h1v2h-1zM664 248h1v1h-1zM664 250h1v2h-1zM664 266h1v5h-1zM664 272h1v4h-1zM665 206h1v2h-1zM665 268h1v8h-1zM666 203h1v4h-1zM666 226h1v1h-1zM666 238h1v1h-1zM666 266h1v10h-1zM667 202h1v4h-1zM667 265h1v4h-1zM667 273h1v3h-1zM668 202h1v4h-1zM668 236h1v1h-1zM668 266h1v10h-1zM669 202h1v2h-1zM670 203h1v4h-1zM670 269h1v1h-1zM670 271h1v1h-1zM671 206h1v2h-1zM671 270h1v5h-1zM671 276h1v1h-1zM672 205h1v2h-1zM672 266h1v5h-1zM672 272h1v3h-1zM673 203h1v2h-1zM673 266h1v2h-1zM673 273h1v3h-1zM674 202h1v2h-1zM674 266h1v4h-1zM675 203h1v4h-1zM675 234h1v3h-1zM675 271h1v1h-1zM675 273h1v3h-1zM676 204h1v3h-1zM676 266h1v4h-1zM676 272h1v4h-1zM677 203h1v2h-1zM677 234h1v1h-1zM677 264h1v2h-1zM677 267h1v4h-1zM677 272h1v4h-1zM678 201h1v2h-1zM679 206h1v3h-1zM679 228h1v5h-1zM679 240h1v2h-1zM679 243h1v2h-1zM679 266h1v9h-1zM679 276h1v1h-1zM680 203h1v4h-1zM680 240h1v1h-1zM680 265h1v1h-1zM680 271h1v5h-1zM681 203h1v4h-1zM681 226h1v6h-1zM681 250h1v1h-1zM681 267h1v8h-1zM682 202h1v3h-1zM682 266h1v7h-1zM682 274h1v1h-1zM683 203h1v4h-1zM683 266h1v2h-1zM683 274h1v2h-1zM684 205h1v4h-1zM684 266h1v5h-1zM684 273h1v3h-1z"/>
<path fill="#a5aa09" d="M84 203h1v1h-1zM84 268h1v1h-1zM84 270h1v1h-1zM85 204h1v2h-1zM87 202h1v2h-1zM88 202h1v1h-1zM89 203h1v4h-1zM90 203h1v1h-1zM90 205h1v2h-1zM91 202h1v2h-1zM91 205h1v2h-1zM92 203h1v2h-1zM93 205h1v2h-1zM94 205h1v2h-1zM95 200h1v7h-1zM96 202h1v2h-1zM96 205h1v2h-1zM97 203h1v2h-1zM98 202h1v5h-1zM99 201h1v1h-1zM99 203h1v4h-1zM99 266h1v1h-1zM100 205h1v2h-1zM100 266h1v2h-1zM102 205h1v2h-1zM103 203h1v4h-1zM104 203h1v1h-1zM104 205h1v2h-1zM105 203h1v4h-1zM106 203h1v3h-1zM107 205h1v2h-1zM108 204h1v3h-1zM109 205h1v2h-1zM110 203h1v2h-1zM111 205h1v2h-1zM112 204h1v3h-1zM113 203h1v3h-1zM114 203h1v4h-1zM115 205h1v2h-1zM116 203h1v2h-1zM117 202h1v2h-1zM117 205h1v2h-1zM118 200h1v7h-1zM119 201h1v2h-1zM120 205h1v2h-1zM121 204h1v1h-1zM121 206h1v1h-1zM122 203h1v4h-1zM190 215h1v3h-1zM191 210h1v4h-1zM191 215h1v2h-1zM191 218h1v1h-1zM192 208h1v3h-1zM192 214h1v1h-1zM192 217h1v3h-1zM192 221h1v1h-1zM192 223h1v1h-1zM193 206h1v1h-1zM193 212h1v2h-1zM193 216h1v3h-1zM193 220h1v1h-1zM193 224h1v1h-1zM194 214h1v6h-1zM194 222h1v1h-1zM195 209h1v6h-1zM195 216h1v2h-1zM195 219h1v1h-1zM196 206h1v1h-1zM196 211h1v4h-1zM196 216h1v1h-1zM197 211h1v4h-1zM198 206h1v5h-1zM198 213h1v4h-1zM198 223h1v1h-1zM199 206h1v9h-1zM200 206h1v5h-1zM200 212h1v2h-1zM248 255h1v1h-1zM248 257h1v4h-1zM248 262h1v4h-1zM249 255h1v2h-1zM249 264h1v2h-1zM250 255h1v4h-1zM250 260h1v2h-1zM251 262h1v1h-1zM251 264h1v2h-1zM251 276h1v1h-1zM252 259h1v3h-1zM253 257h1v4h-1zM253 262h1v4h-1zM254 266h1v3h-1zM254 273h1v2h-1zM255 258h1v3h-1zM255 263h1v3h-1zM256 255h1v2h-1zM256 266h1v10h-1zM257 255h1v1h-1zM257 257h1v4h-1zM257 263h1v3h-1zM258 255h1v2h-1zM258 259h1v2h-1zM258 275h1v5h-1zM259 254h1v2h-1zM260 257h1v4h-1zM261 276h1v3h-1zM262 257h1v2h-1zM262 274h1v3h-1zM263 256h1v10h-1zM263 274h1v3h-1zM264 254h1v2h-1zM265 254h1v2h-1zM265 266h1v11h-1zM266 256h1v7h-1zM266 264h1v2h-1zM267 258h1v7h-1zM268 257h1v2h-1zM268 261h1v5h-1zM269 253h1v2h-1zM269 256h1v6h-1zM270 257h1v2h-1zM270 260h1v6h-1zM271 259h1v7h-1zM272 257h1v3h-1zM272 261h1v5h-1zM273 255h1v1h-1zM273 257h1v9h-1zM274 253h1v2h-1zM274 266h1v9h-1zM275 256h1v2h-1zM275 265h1v1h-1zM276 253h1v2h-1zM276 257h1v7h-1zM276 266h1v7h-1zM276 274h1v3h-1zM277 256h1v2h-1zM278 253h1v2h-1zM278 277h1v3h-1zM279 255h1v2h-1zM280 257h1v6h-1zM280 265h1v1h-1zM289 273h1v1h-1zM290 266h1v1h-1zM290 268h1v7h-1zM291 274h1v1h-1zM299 211h1v2h-1zM299 266h1v2h-1zM300 269h1v4h-1zM305 212h1v1h-1zM305 275h1v1h-1zM316 266h1v5h-1zM317 274h1v2h-1zM329 271h1v2h-1zM331 266h1v5h-1zM336 274h1v1h-1zM337 266h1v5h-1zM340 267h1v5h-1zM346 204h1v2h-1zM346 266h1v1h-1zM346 268h1v4h-1zM347 204h1v1h-1zM347 270h1v2h-1zM347 273h1v2h-1zM350 204h1v2h-1zM351 203h1v2h-1zM351 266h1v1h-1zM351 269h1v2h-1zM352 204h1v1h-1zM353 201h1v2h-1zM353 274h1v1h-1zM354 203h1v2h-1zM356 273h1v2h-1zM358 204h1v2h-1zM359 269h1v1h-1zM360 270h1v3h-1zM364 204h1v1h-1zM364 274h1v1h-1zM365 201h1v1h-1zM366 204h1v1h-1zM369 202h1v2h-1zM370 271h1v1h-1zM370 273h1v1h-1zM371 204h1v2h-1zM372 203h1v2h-1zM374 271h1v2h-1zM377 269h1v2h-1zM379 202h1v2h-1zM381 204h1v2h-1zM381 207h1v1h-1zM382 266h1v2h-1zM382 275h1v1h-1zM383 202h1v2h-1zM383 274h1v2h-1zM384 203h1v2h-1zM386 204h1v1h-1zM387 202h1v2h-1zM387 275h1v1h-1zM388 203h1v4h-1zM388 272h1v2h-1zM389 202h1v2h-1zM389 205h1v1h-1zM389 268h1v1h-1zM389 271h1v1h-1zM390 203h1v1h-1zM391 203h1v2h-1zM392 202h1v2h-1zM393 200h1v2h-1zM393 236h1v2h-1zM393 267h1v4h-1zM394 204h1v2h-1zM402 200h1v2h-1zM402 272h1v2h-1zM403 203h1v2h-1zM405 204h1v4h-1zM406 270h1v3h-1zM407 266h1v1h-1zM408 203h1v2h-1zM409 203h1v4h-1zM410 204h1v3h-1zM411 203h1v4h-1zM413 202h1v5h-1zM414 201h1v1h-1zM414 203h1v4h-1zM415 204h1v3h-1zM416 203h1v4h-1zM416 266h1v1h-1zM417 204h1v3h-1zM418 203h1v3h-1zM419 203h1v4h-1zM420 201h1v5h-1zM421 202h1v2h-1zM422 203h1v4h-1zM423 203h1v4h-1zM424 202h1v5h-1zM425 201h1v1h-1zM425 203h1v4h-1zM426 204h1v3h-1zM427 205h1v2h-1zM428 199h1v7h-1zM429 201h1v6h-1zM431 202h1v5h-1zM432 202h1v5h-1zM433 203h1v4h-1zM434 203h1v4h-1zM435 203h1v4h-1zM436 205h1v2h-1zM437 204h1v3h-1zM438 204h1v3h-1zM439 205h1v2h-1zM441 204h1v3h-1zM442 203h1v2h-1zM442 206h1v1h-1zM442 266h1v2h-1zM511 206h1v1h-1zM511 208h1v6h-1zM511 215h1v2h-1zM512 206h1v1h-1zM512 208h1v5h-1zM512 218h1v2h-1zM512 222h1v1h-1zM513 206h1v2h-1zM513 210h1v2h-1zM513 213h1v2h-1zM513 216h1v2h-1zM514 213h1v4h-1zM514 218h1v5h-1zM515 206h1v4h-1zM515 215h1v3h-1zM515 222h1v3h-1zM516 206h1v4h-1zM516 217h1v2h-1zM517 206h1v1h-1zM517 208h1v1h-1zM517 213h1v3h-1zM517 217h1v3h-1zM518 214h1v5h-1zM518 220h1v2h-1zM519 209h1v6h-1zM519 220h1v5h-1zM520 206h1v2h-1zM520 210h1v3h-1zM520 214h1v3h-1zM521 207h1v2h-1zM521 211h1v1h-1zM568 255h1v1h-1zM568 257h1v5h-1zM568 277h1v1h-1zM569 255h1v9h-1zM569 265h1v1h-1zM570 257h1v2h-1zM570 261h1v4h-1zM571 257h1v2h-1zM571 275h1v1h-1zM572 257h1v2h-1zM572 260h1v1h-1zM572 262h1v1h-1zM572 264h1v2h-1zM572 276h1v1h-1zM573 257h1v9h-1zM574 256h1v4h-1zM574 262h1v4h-1zM575 256h1v2h-1zM575 261h1v4h-1zM576 256h1v2h-1zM576 271h1v6h-1zM577 256h1v2h-1zM577 260h1v3h-1zM578 255h1v2h-1zM578 258h1v1h-1zM579 255h1v5h-1zM580 260h1v6h-1zM581 258h1v1h-1zM582 256h1v2h-1zM582 264h1v2h-1zM583 254h1v2h-1zM584 255h1v4h-1zM585 255h1v2h-1zM585 266h1v10h-1zM586 259h1v7h-1zM587 256h1v5h-1zM587 262h1v4h-1zM588 255h1v10h-1zM588 275h1v3h-1zM589 255h1v2h-1zM589 259h1v1h-1zM590 253h1v9h-1zM590 263h1v3h-1zM592 256h1v6h-1zM593 255h1v7h-1zM594 266h1v5h-1zM594 272h1v4h-1zM595 255h1v2h-1zM596 257h1v9h-1zM597 256h1v2h-1zM598 256h1v2h-1zM598 263h1v3h-1zM599 259h1v7h-1zM600 256h1v2h-1zM600 265h1v1h-1zM601 255h1v2h-1zM601 261h1v1h-1zM601 263h1v1h-1zM601 265h1v1h-1zM605 210h1v2h-1zM607 211h1v1h-1zM607 270h1v4h-1zM608 266h1v3h-1zM609 266h1v3h-1zM619 271h1v1h-1zM628 266h1v4h-1zM628 271h1v1h-1zM629 211h1v1h-1zM629 267h1v6h-1zM629 274h1v2h-1zM630 212h1v1h-1zM630 266h1v1h-1zM630 272h1v1h-1zM630 274h1v2h-1zM631 271h1v4h-1zM632 267h1v2h-1zM634 208h1v1h-1zM635 205h1v1h-1zM640 268h1v6h-1zM671 204h1v2h-1zM671 275h1v1h-1zM672 203h1v2h-1zM676 203h1v1h-1zM677 266h1v1h-1zM679 204h1v2h-1zM679 275h1v1h-1zM680 266h1v5h-1zM684 203h1v2h-1z"/>
<path fill="#bcc30b" d="M89 201h1v2h-1zM90 204h1v1h-1zM93 203h1v2h-1zM94 203h1v2h-1zM99 202h1v1h-1zM100 203h1v2h-1zM101 202h1v2h-1zM102 203h1v2h-1zM103 201h1v2h-1zM104 204h1v1h-1zM105 201h1v2h-1zM106 201h1v2h-1zM107 203h1v2h-1zM108 202h1v2h-1zM109 203h1v2h-1zM111 203h1v2h-1zM112 203h1v1h-1zM114 201h1v2h-1zM115 203h1v2h-1zM120 203h1v2h-1zM121 203h1v1h-1zM122 199h1v4h-1zM190 209h1v6h-1zM191 206h1v4h-1zM191 214h1v1h-1zM192 206h1v2h-1zM194 207h1v7h-1zM194 220h1v2h-1zM195 206h1v3h-1zM195 215h1v1h-1zM196 215h1v1h-1zM197 207h1v4h-1zM198 211h1v2h-1zM248 256h1v1h-1zM249 269h1v6h-1zM249 276h1v3h-1zM250 272h1v6h-1zM251 270h1v6h-1zM251 277h1v2h-1zM252 257h1v2h-1zM252 274h1v1h-1zM252 276h1v3h-1zM253 256h1v1h-1zM253 276h1v3h-1zM254 256h1v1h-1zM254 269h1v4h-1zM255 256h1v2h-1zM255 274h1v3h-1zM256 276h1v2h-1zM257 256h1v1h-1zM258 266h1v2h-1zM259 266h1v8h-1zM259 276h1v1h-1zM259 278h1v1h-1zM260 269h1v11h-1zM261 266h1v10h-1zM262 272h1v2h-1zM263 269h1v5h-1zM264 267h1v5h-1zM264 277h1v3h-1zM265 278h1v2h-1zM266 254h1v2h-1zM266 272h1v8h-1zM267 256h1v2h-1zM267 267h1v5h-1zM267 275h1v1h-1zM268 275h1v1h-1zM269 266h1v13h-1zM270 267h1v4h-1zM270 275h1v5h-1zM271 257h1v2h-1zM271 267h1v1h-1zM271 269h1v4h-1zM271 275h1v3h-1zM272 276h1v3h-1zM273 256h1v1h-1zM273 274h1v2h-1zM274 276h1v2h-1zM275 279h1v1h-1zM276 273h1v1h-1zM277 266h1v2h-1zM277 276h1v3h-1zM278 273h1v4h-1zM279 266h1v6h-1zM279 273h1v4h-1zM280 272h1v1h-1zM280 275h1v3h-1zM409 202h1v1h-1zM410 202h1v2h-1zM412 203h1v2h-1zM414 202h1v1h-1zM415 203h1v1h-1zM417 202h1v2h-1zM418 201h1v2h-1zM419 202h1v1h-1zM420 199h1v2h-1zM423 201h1v2h-1zM425 202h1v1h-1zM426 202h1v2h-1zM427 203h1v2h-1zM428 206h1v1h-1zM430 203h1v2h-1zM434 202h1v1h-1zM435 201h1v2h-1zM436 203h1v2h-1zM437 202h1v2h-1zM438 203h1v1h-1zM439 203h1v2h-1zM440 202h1v2h-1zM441 203h1v1h-1zM442 202h1v1h-1zM511 207h1v1h-1zM511 214h1v1h-1zM512 207h1v1h-1zM512 220h1v2h-1zM513 208h1v2h-1zM513 212h1v1h-1zM514 208h1v1h-1zM514 211h1v2h-1zM514 217h1v1h-1zM515 210h1v5h-1zM515 218h1v4h-1zM516 210h1v3h-1zM516 215h1v2h-1zM517 216h1v1h-1zM518 206h1v2h-1zM518 210h1v4h-1zM521 206h1v1h-1zM568 256h1v1h-1zM568 266h1v2h-1zM568 269h1v1h-1zM568 272h1v5h-1zM568 278h1v1h-1zM569 274h1v3h-1zM570 266h1v11h-1zM571 266h1v1h-1zM571 273h1v2h-1zM571 276h1v1h-1zM572 273h1v3h-1zM572 277h1v2h-1zM573 268h1v1h-1zM573 276h1v1h-1zM574 275h1v3h-1zM575 267h1v4h-1zM575 275h1v3h-1zM576 278h1v2h-1zM577 266h1v14h-1zM578 266h1v1h-1zM578 273h1v7h-1zM579 267h1v1h-1zM579 269h1v3h-1zM579 276h1v3h-1zM580 267h1v8h-1zM580 277h1v3h-1zM581 268h1v5h-1zM581 275h1v3h-1zM582 268h1v1h-1zM582 276h1v1h-1zM583 267h1v4h-1zM583 275h1v3h-1zM584 269h1v5h-1zM584 275h1v3h-1zM585 277h1v2h-1zM586 257h1v2h-1zM586 275h1v1h-1zM587 274h1v1h-1zM587 276h1v3h-1zM588 267h1v8h-1zM589 267h1v6h-1zM589 274h1v4h-1zM590 271h1v1h-1zM590 276h1v3h-1zM591 266h1v1h-1zM591 277h1v2h-1zM592 266h1v2h-1zM592 276h1v3h-1zM593 277h1v3h-1zM594 271h1v1h-1zM594 277h1v2h-1zM595 276h1v3h-1zM596 267h1v6h-1zM596 277h1v3h-1zM597 271h1v4h-1zM597 276h1v1h-1zM598 267h1v8h-1zM598 277h1v1h-1zM599 257h1v2h-1zM599 274h1v1h-1zM599 276h1v1h-1zM600 271h1v1h-1zM600 274h1v3h-1zM601 274h1v3h-1z"/>
<path fill="#d4db0c" d="M190 206h1v3h-1zM194 206h1v1h-1zM197 206h1v1h-1zM248 266h1v13h-1zM249 266h1v3h-1zM249 275h1v1h-1zM250 266h1v6h-1zM250 278h1v1h-1zM251 266h1v4h-1zM252 266h1v8h-1zM252 275h1v1h-1zM253 266h1v10h-1zM255 266h1v8h-1zM257 266h1v12h-1zM258 268h1v7h-1zM259 274h1v2h-1zM259 277h1v1h-1zM260 266h1v3h-1zM262 266h1v6h-1zM263 266h1v3h-1zM264 266h1v1h-1zM264 272h1v5h-1zM266 266h1v6h-1zM267 266h1v1h-1zM267 272h1v3h-1zM267 276h1v2h-1zM268 266h1v9h-1zM268 276h1v2h-1zM270 266h1v1h-1zM270 271h1v4h-1zM271 266h1v1h-1zM271 268h1v1h-1zM271 273h1v2h-1zM272 266h1v10h-1zM273 266h1v8h-1zM273 276h1v1h-1zM275 266h1v13h-1zM277 268h1v8h-1zM278 266h1v7h-1zM279 272h1v1h-1zM280 266h1v6h-1zM280 273h1v2h-1zM514 206h1v2h-1zM514 209h1v2h-1zM516 213h1v2h-1zM518 208h1v2h-1zM568 268h1v1h-1zM568 270h1v2h-1zM569 266h1v5h-1zM569 273h1v1h-1zM571 267h1v6h-1zM572 266h1v7h-1zM573 266h1v2h-1zM573 269h1v7h-1zM573 277h1v2h-1zM574 266h1v1h-1zM574 268h1v7h-1zM575 266h1v1h-1zM575 271h1v4h-1zM578 267h1v6h-1zM579 266h1v1h-1zM579 268h1v1h-1zM579 272h1v4h-1zM580 266h1v1h-1zM580 275h1v2h-1zM581 266h1v2h-1zM581 273h1v2h-1zM582 266h1v2h-1zM582 269h1v7h-1zM583 266h1v1h-1zM583 271h1v4h-1zM584 266h1v3h-1zM584 274h1v1h-1zM586 266h1v9h-1zM586 276h1v2h-1zM587 266h1v8h-1zM587 275h1v1h-1zM588 266h1v1h-1zM589 266h1v1h-1zM589 273h1v1h-1zM590 266h1v5h-1zM590 272h1v4h-1zM591 267h1v10h-1zM592 268h1v8h-1zM593 266h1v11h-1zM595 266h1v10h-1zM596 266h1v1h-1zM596 273h1v4h-1zM597 266h1v5h-1zM597 275h1v1h-1zM597 277h1v2h-1zM598 266h1v1h-1zM598 275h1v2h-1zM598 278h1v2h-1zM599 266h1v8h-1zM599 275h1v1h-1zM600 266h1v5h-1zM600 272h1v2h-1zM601 266h1v8h-1z"/>
<path fill="#ecf40e" d="M569 271h1v2h-1zM574 267h1v1h-1z"/>
<path fill="#f0f000" d="M123 202h1v4h-1zM124 202h1v4h-1zM125 202h1v4h-1zM126 202h1v4h-1zM127 202h1v4h-1zM128 202h1v4h-1zM129 202h1v4h-1zM130 202h1v4h-1zM131 202h1v4h-1zM132 202h1v4h-1zM133 202h1v4h-1zM134 202h1v4h-1zM135 202h1v4h-1zM136 202h1v4h-1zM137 202h1v4h-1zM138 202h1v4h-1zM139 202h1v4h-1zM140 202h1v4h-1zM141 202h1v4h-1zM142 202h1v4h-1zM143 202h1v4h-1zM144 202h1v4h-1zM145 202h1v4h-1zM146 202h1v4h-1zM147 202h1v4h-1zM148 202h1v4h-1zM149 202h1v4h-1zM150 202h1v4h-1zM151 202h1v4h-1zM152 202h1v4h-1zM153 202h1v4h-1zM154 202h1v4h-1zM155 202h1v4h-1zM156 202h1v4h-1zM157 202h1v4h-1zM158 202h1v4h-1zM159 202h1v4h-1zM160 202h1v4h-1zM161 202h1v4h-1zM162 202h1v4h-1zM163 202h1v4h-1zM164 202h1v4h-1zM165 202h1v4h-1zM166 202h1v4h-1zM167 202h1v4h-1zM168 202h1v4h-1zM169 202h1v4h-1zM170 202h1v4h-1zM171 202h1v4h-1zM172 202h1v4h-1zM173 202h1v4h-1zM174 202h1v4h-1zM175 202h1v4h-1zM176 202h1v4h-1zM177 202h1v4h-1zM178 202h1v4h-1zM179 202h1v4h-1zM180 202h1v4h-1zM181 202h1v4h-1zM182 202h1v4h-1zM183 202h1v4h-1zM184 202h1v4h-1zM185 202h1v4h-1zM186 202h1v4h-1zM187 202h1v4h-1zM188 202h1v4h-1zM189 202h1v4h-1zM190 202h1v4h-1zM191 202h1v4h-1zM192 202h1v4h-1zM193 202h1v4h-1zM194 202h1v4h-1zM195 202h1v4h-1zM196 202h1v4h-1zM197 202h1v4h-1zM198 202h1v4h-1zM199 202h1v4h-1zM200 202h1v4h-1zM201 202h1v4h-1zM202 202h1v4h-1zM203 202h1v4h-1zM204 202h1v4h-1zM205 202h1v4h-1zM206 202h1v4h-1zM207 202h1v4h-1zM208 202h1v4h-1zM209 202h1v4h-1zM210 202h1v4h-1zM211 202h1v4h-1zM212 202h1v4h-1zM213 202h1v4h-1zM214 271h1v5h-1zM215 271h1v5h-1zM216 271h1v5h-1zM217 271h1v5h-1zM218 271h1v5h-1zM219 271h1v5h-1zM220 271h1v5h-1zM221 271h1v5h-1zM222 271h1v5h-1zM223 271h1v5h-1zM224 271h1v5h-1zM225 271h1v5h-1zM226 271h1v5h-1zM227 271h1v5h-1zM228 271h1v5h-1zM229 271h1v5h-1zM230 271h1v5h-1zM231 271h1v5h-1zM232 271h1v5h-1zM233 271h1v5h-1zM234 271h1v5h-1zM235 271h1v5h-1zM236 271h1v5h-1zM237 271h1v5h-1zM238 271h1v5h-1zM239 271h1v5h-1zM240 271h1v5h-1zM241 271h1v5h-1zM242 271h1v5h-1zM243 271h1v5h-1zM244 271h1v5h-1zM245 271h1v5h-1zM246 271h1v5h-1zM247 271h1v5h-1zM443 202h1v4h-1zM444 202h1v4h-1zM445 202h1v4h-1zM446 202h1v4h-1zM447 202h1v4h-1zM448 202h1v4h-1zM449 202h1v4h-1zM450 202h1v4h-1zM451 202h1v4h-1zM452 202h1v4h-1zM453 202h1v4h-1zM454 202h1v4h-1zM455 202h1v4h-1zM456 202h1v4h-1zM457 202h1v4h-1zM458 202h1v4h-1zM459 202h1v4h-1zM460 202h1v4h-1zM461 202h1v4h-1zM462 202h1v4h-1zM463 202h1v4h-1zM464 202h1v4h-1zM465 202h1v4h-1zM466 202h1v4h-1zM467 202h1v4h-1zM468 202h1v4h-1zM469 202h1v4h-1zM470 202h1v4h-1zM471 202h1v4h-1zM472 202h1v4h-1zM473 202h1v4h-1zM474 202h1v4h-1zM475 202h1v4h-1zM476 202h1v4h-1zM477 202h1v4h-1zM478 202h1v4h-1zM479 202h1v4h-1zM480 202h1v4h-1zM481 202h1v4h-1zM482 202h1v4h-1zM483 202h1v4h-1zM484 202h1v4h-1zM485 202h1v4h-1zM486 202h1v4h-1zM487 202h1v4h-1zM488 202h1v4h-1zM489 202h1v4h-1zM490 202h1v4h-1zM491 202h1v4h-1zM492 202h1v4h-1zM493 202h1v4h-1zM494 202h1v4h-1zM495 202h1v4h-1zM496 202h1v4h-1zM497 202h1v4h-1zM498 202h1v4h-1zM499 202h1v4h-1zM500 202h1v4h-1zM501 202h1v4h-1zM502 202h1v4h-1zM503 202h1v4h-1zM504 202h1v4h-1zM505 202h1v4h-1zM506 202h1v4h-1zM507 202h1v4h-1zM508 202h1v4h-1zM509 202h1v4h-1zM510 202h1v4h-1zM511 202h1v4h-1zM512 202h1v4h-1zM513 202h1v4h-1zM514 202h1v4h-1zM515 202h1v4h-1zM516 202h1v4h-1zM517 202h1v4h-1zM518 202h1v4h-1zM519 202h1v4h-1zM520 202h1v4h-1zM521 202h1v4h-1zM522 202h1v4h-1zM523 202h1v4h-1zM524 202h1v4h-1zM525 202h1v4h-1zM526 202h1v4h-1zM527 202h1v4h-1zM528 202h1v4h-1zM529 202h1v4h-1zM530 202h1v4h-1zM531 202h1v4h-1zM532 202h1v4h-1zM533 202h1v4h-1zM534 202h1v4h-1zM535 271h1v5h-1zM536 271h1v5h-1zM537 271h1v5h-1zM538 271h1v5h-1zM539 271h1v5h-1zM540 271h1v5h-1zM541 271h1v5h-1zM542 271h1v5h-1zM543 271h1v5h-1zM544 271h1v5h-1zM545 271h1v5h-1zM546 271h1v5h-1zM547 271h1v5h-1zM548 271h1v5h-1zM549 271h1v5h-1zM550 271h1v5h-1zM551 271h1v5h-1zM552 271h1v5h-1zM553 271h1v5h-1zM554 271h1v5h-1zM555 271h1v5h-1zM556 271h1v5h-1zM557 271h1v5h-1zM558 271h1v5h-1zM559 271h1v5h-1zM560 271h1v5h-1zM561 271h1v5h-1zM562 271h1v5h-1zM563 271h1v5h-1zM564 271h1v5h-1zM565 271h1v5h-1zM566 271h1v5h-1zM567 271h1v5h-1z"/>
</svg>

<!-- markers -->
<svg class="a" style="left:378px;top:38px" width="13" height="20"><path d="M1.8,0 H11.2 L6.5,5 Z" fill="#f49a30"/><path d="M1.8,5.8 H11.2 V15 L6.5,19.2 L1.8,15 Z" fill="#f49a30"/><path d="M3.5,7.8 H9.8 M6.6,7.8 V14.8" stroke="#100400" stroke-width="1.4"/></svg>
<svg class="a" style="left:68px;top:234px" width="18" height="11"><path d="M1,0.5 H12 L16,5 L12,9.5 H1 Z" fill="#f0f000"/></svg>
<svg class="a" style="left:68px;top:234px" width="18" height="11"><path d="M8.3,2.3 V9.3 M6.3,4.3 L8.3,2.3" stroke="#000" stroke-width="1.3" fill="none"/></svg>
<svg class="a" style="left:685px;top:248.5px" width="17" height="11"><path d="M1,5 L5,0.5 H16.5 V9.5 H5 Z" fill="#f49020"/><path d="M8,3 H13 M10.5,3 V8.5" stroke="#200800" stroke-width="1.3"/></svg>


<!-- freq counter -->
<div class="a" style="left:530px;top:40px;width:150px;height:25px;border:2px solid #a8a8a8;border-radius:7px;background:#000"></div>
<div class="a" style="left:533px;top:45px;width:14px;height:15px;border-radius:5px;background:radial-gradient(ellipse at 50% 45%,#ffff30 0,#f0f000 55%,#c8c800 85%,#707000 100%)"></div>
<svg class="a" style="left:533px;top:45px" width="14" height="15"><path d="M6.8,3.3 V11.5 M4.5,5.5 L6.8,3.3" stroke="#000" stroke-width="1.3" fill="none"/></svg>
<svg class="a" style="left:545px;top:42px" width="55" height="20"><path d="M3,14.5 H8.5 V5.5 H13.5 V14.5 H18.5 V5.5 H23.5 V14.5 H28.5 V5.5 H33.5 V14.5 H38.5 V5.5 H43.5 V14.5 H49" fill="none" stroke="#fff" stroke-width="1.2"/></svg>
<div class="t" style="left:601px;top:47px;font-size:12px;color:#fff">2.09607MHz</div>

<!-- right panel -->
<svg class="a" style="left:680px;top:30px" width="120" height="420"><path d="M7.5,7.5 H120 M7.5,7.5 V86.5 L21.5,100 V407.5 H120" fill="none" stroke="#707070" stroke-width="1"/></svg>
<div class="t" style="left:687.5px;top:92px;font-size:14px;color:#f0f0f0;transform-origin:0 0;transform:rotate(-90deg) scaleX(0.85)">CH1</div>

<div class="mb" style="top:41px"><div class="mh">Kopplung</div><div class="mi"><div class="tri"></div><div class="mv">AC</div></div></div>
<div class="mb" style="top:107px"><div class="mh">BW Grenzw.</div><div class="mi"><div class="mv">AUS</div></div></div>
<div class="mb" style="top:173px"><div class="mh">Verhältnis</div><div class="mi"><div class="tri"></div><div class="mv">10X</div></div></div>
<div class="mb" style="top:239px"><div class="mh">Invers</div><div class="mi"><div class="mv">AUS</div></div></div>
<div class="mb" style="top:305px"><div class="mh">Volt/Div</div><div class="mi"><div class="mv">Grob</div></div></div>
<div class="mb" style="top:371px"><div class="mh">Einheit</div><div class="mi"><div class="tri"></div><div class="mv">[V]</div></div></div>
<div class="a" style="left:793px;top:208px;width:6px;height:6px;border-radius:3px;background:#d0d0d0"></div>
<div class="a" style="left:794px;top:219px;width:4px;height:4px;border-radius:2px;background:#606060"></div>


<!-- bottom bar -->
<svg class="a" style="left:0;top:440px" width="800" height="40"><defs>
<pattern id="h2" width="4" height="4" patternUnits="userSpaceOnUse" patternTransform="rotate(-45)"><rect width="4" height="4" fill="#0b2624"/><rect width="1.3" height="4" fill="#1a4440"/></pattern>
<pattern id="h3" width="4" height="4" patternUnits="userSpaceOnUse" patternTransform="rotate(-45)"><rect width="4" height="4" fill="#1c0820"/><rect width="1.3" height="4" fill="#3c1644"/></pattern>
<pattern id="h4" width="4" height="4" patternUnits="userSpaceOnUse" patternTransform="rotate(-45)"><rect width="4" height="4" fill="#0a1c28"/><rect width="1.3" height="4" fill="#183a4c"/></pattern>
</defs><path d="M0,14 H112 L99,40 H0 Z" fill="#f0f000"/><path d="M30,16.5 H108 L97,38 H19.5 Z" fill="#000"/><path d="M112.0,14 H229.5 L216.5,40 H99.0 Z" fill="url(#h2)"/><path d="M146.5,16.5 H226.5 L215.5,38 H135.5 Z" fill="#050505" stroke="#1c3c3a" stroke-width="1" stroke-dasharray="2,1"/><path d="M229.5,14 H347.0 L334.0,40 H216.5 Z" fill="url(#h3)"/><path d="M264.0,16.5 H344.0 L333.0,38 H253.0 Z" fill="#050505" stroke="#3a1640" stroke-width="1" stroke-dasharray="2,1"/><path d="M347.0,14 H464.5 L451.5,40 H334.0 Z" fill="url(#h4)"/><path d="M381.5,16.5 H461.5 L450.5,38 H370.5 Z" fill="#050505" stroke="#1a3446" stroke-width="1" stroke-dasharray="2,1"/><path d="M713.5,14.5 H800 M713.5,14.5 L700.5,40" stroke="#8a8a8a" stroke-width="1" fill="none"/></svg>
<svg class="a" style="left:0;top:455px" width="20" height="22"><path d="M11,5.5 V19.8" stroke="#000" stroke-width="2.6"/><path d="M6.2,10.5 L11.5,5.5" stroke="#000" stroke-width="2.4"/></svg>
<svg class="a" style="left:30px;top:460px" width="12" height="8"><path d="M1.5,4.5 C2.5,1.5 4.5,1.5 5.5,3 C6.5,4.5 8.5,4.5 9.5,1.5" stroke="#e8e870" stroke-width="1.1" fill="none"/></svg>
<div class="t" style="left:52px;top:462px;font-size:12.6px;color:#e8e870">500mV</div>
<div class="t" style="left:120.5px;top:456.5px;font-size:20px;color:#8aa29c">2</div>
<svg class="a" style="left:147.5px;top:460px" width="12" height="8"><path d="M1.5,4.5 C2.5,1.5 4.5,1.5 5.5,3 C6.5,4.5 8.5,4.5 9.5,1.5" stroke="#909090" stroke-width="1.1" fill="none"/></svg>
<div class="t" style="left:168px;top:462px;font-size:12.3px;color:#8c8c8c">100mV</div>
<div class="t" style="left:238.0px;top:456.5px;font-size:20px;color:#a08aa8">3</div>
<svg class="a" style="left:264.5px;top:461.5px" width="10" height="7"><path d="M0,1 H7.5" stroke="#aaa" stroke-width="1"/><path d="M0.5,5.5 H8" stroke="#aaa" stroke-width="1" stroke-dasharray="1.2,1.5"/></svg>
<div class="t" style="left:286px;top:462px;font-size:12.3px;color:#8c8c8c">20.0mV</div>
<div class="t" style="left:355.5px;top:456.5px;font-size:20px;color:#8c9ca8">4</div>
<svg class="a" style="left:382.0px;top:461.5px" width="10" height="7"><path d="M0,1 H7.5" stroke="#aaa" stroke-width="1"/><path d="M0.5,5.5 H8" stroke="#aaa" stroke-width="1" stroke-dasharray="1.2,1.5"/></svg>
<div class="t" style="left:402px;top:462px;font-size:12.3px;color:#8c8c8c">1.00 V</div>
<svg class="a" style="left:735px;top:452px" width="55" height="26">
<path d="M7,14.4 H23" stroke="#f0f0f0" stroke-width="1.3"/>
<ellipse cx="6.2" cy="14.4" rx="2.2" ry="2.6" fill="#f0f0f0"/>
<path d="M25,14.4 L22,12.6 V16.2 Z" fill="#f0f0f0"/>
<path d="M10.5,14.4 C12,11.5 14,10.3 17.5,10.3" stroke="#f0f0f0" stroke-width="1.2" fill="none"/>
<path d="M13,14.4 C14.5,17 16,18.6 19.5,18.6" stroke="#f0f0f0" stroke-width="1.2" fill="none"/>
<circle cx="18.2" cy="10.3" r="1.7" fill="#f0f0f0"/>
<circle cx="19.9" cy="18.6" r="2" fill="#f0f0f0"/>
<path d="M38.5,5.8 L31,12.5 Q29.8,13.5 31,14.5 L38.5,21 Q39.5,21.5 40.5,20.5 V6.5 Q39.5,5.2 38.5,5.8 Z" fill="none" stroke="#f0f0f0" stroke-width="1.4"/>
<path d="M37.2,10.5 V16 M37.2,11.5 A2,2 0 0 1 37.2,15" stroke="#f0f0f0" stroke-width="1" fill="none"/>
<path d="M42.5,10 L49,16.8 M49,10 L42.5,16.8" stroke="#d8d8d8" stroke-width="1"/>
</svg>


</body></html>
